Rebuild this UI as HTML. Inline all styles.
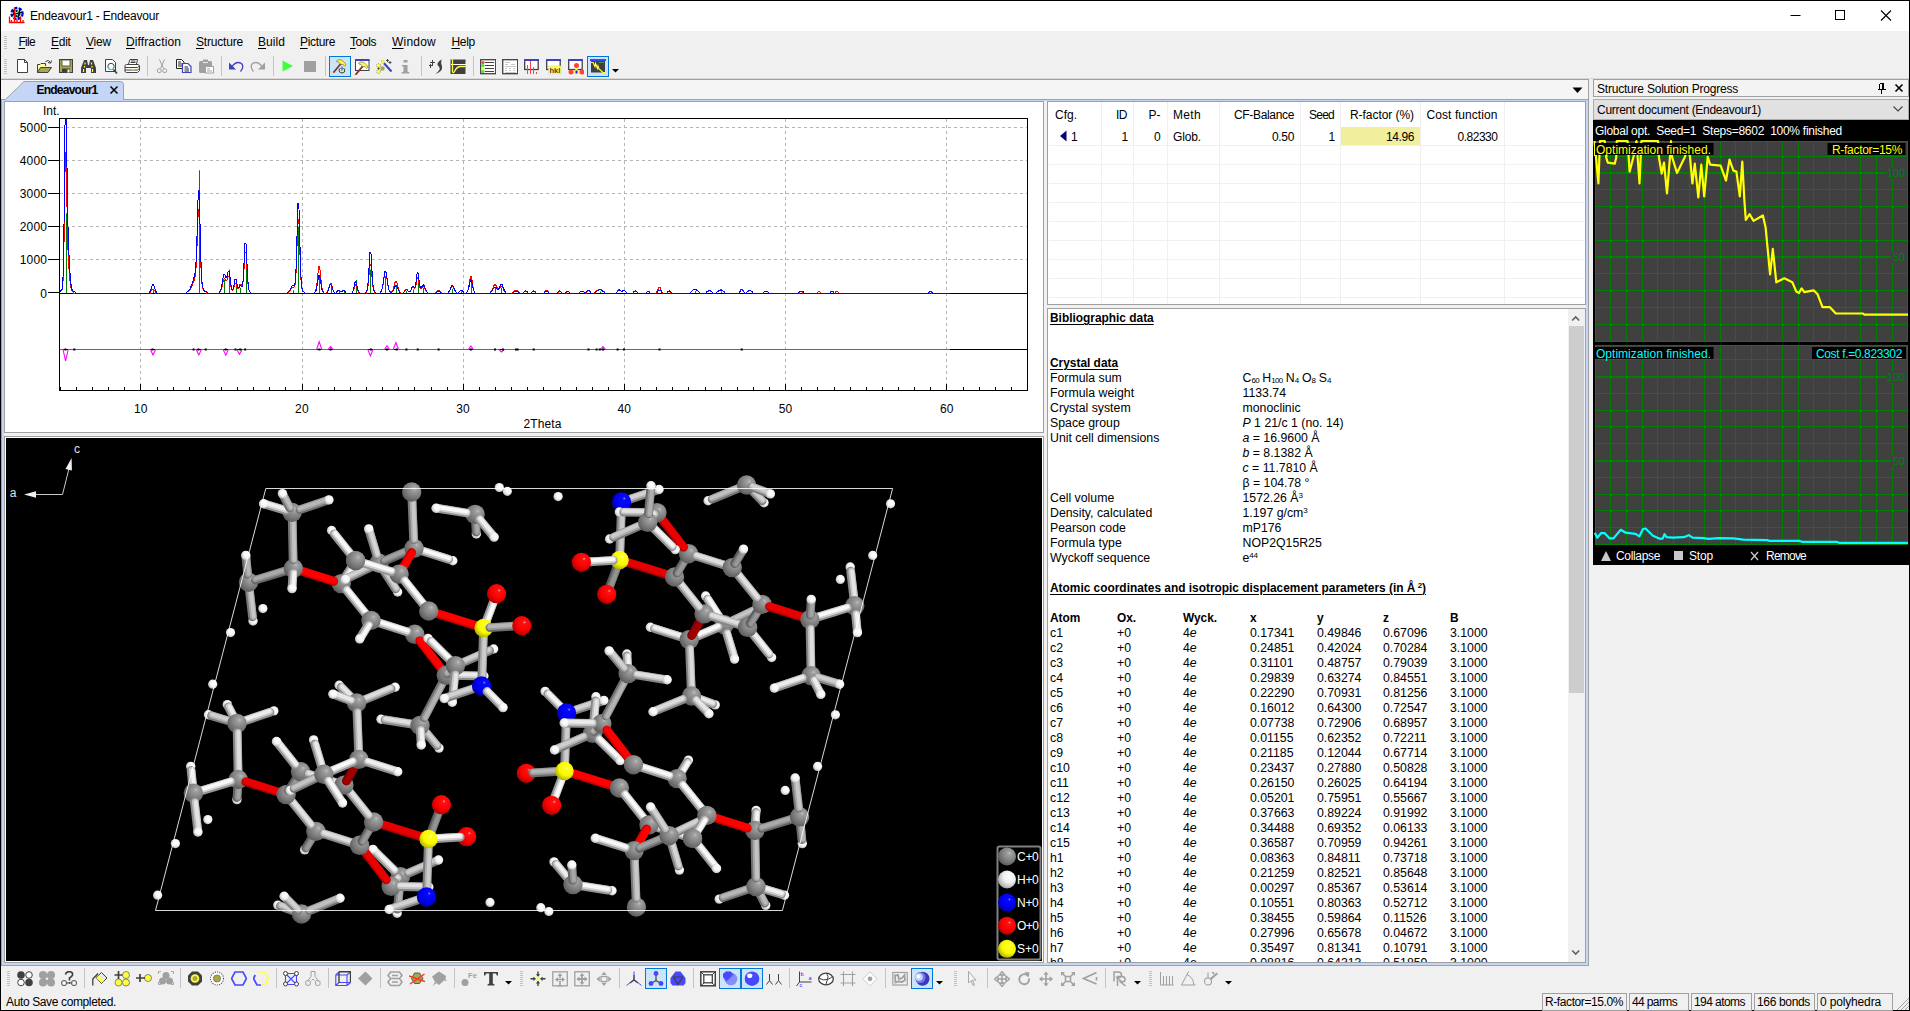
<!DOCTYPE html>
<html><head><meta charset="utf-8"><title>Endeavour1 - Endeavour</title>
<style>
html,body{margin:0;padding:0;background:#000;}
body{width:1910px;height:1011px;overflow:hidden;position:relative;font-family:"Liberation Sans",sans-serif;}
#app{position:absolute;left:0;top:0;width:1910px;height:1011px;background:#000;overflow:hidden;}
#bg{position:absolute;left:1px;top:1px;width:1908px;height:1009px;background:#f0f0f0;}
.b{position:absolute;display:block;}
.t{position:absolute;white-space:nowrap;font-family:"Liberation Sans",sans-serif;}
u{text-decoration:underline;text-underline-offset:1.5px;}
</style></head><body><div id="app"><div id="bg"></div>
<div class="b" style="left:1px;top:1px;width:1908px;height:30px;background:#fff;"></div>
<svg class="b" style="left:8px;top:6px" width="18" height="18" viewBox="0 0 18 18">
<circle cx="9" cy="7.5" r="6.2" fill="#9fe8d8"/>
<circle cx="9" cy="7.5" r="5.6" fill="none" stroke="#0000ee" stroke-width="2.2" stroke-dasharray="3 1.6"/>
<circle cx="9" cy="7.5" r="2.6" fill="none" stroke="#000" stroke-width="1.6" stroke-dasharray="2 1.5"/>
<path d="M5 4 L7 11 M12 3 L10 12 M4 9 L14 6" stroke="#000" stroke-width="1.2" fill="none"/>
<path d="M1.5 10.5V16.5H16.5 M6.5 2.5V16 M3.5 14V16 M9 13V16 M12.5 10.5V16 M15 14V16" stroke="#f00" stroke-width="1.3" fill="none"/>
</svg>
<span class="t" style="left:30.00px;top:7.50px;font-size:12px;line-height:16px;color:#000;letter-spacing:-0.201px;">Endeavour1 - Endeavour</span>
<svg class="b" style="left:1780px;top:1px" width="128" height="30" viewBox="0 0 128 30">
<path d="M10.5 14.5H20.5" stroke="#000" stroke-width="1"/>
<rect x="55.5" y="9.5" width="9" height="9" fill="none" stroke="#000" stroke-width="1"/>
<path d="M101 9.5 L111 19.5 M111 9.5 L101 19.5" stroke="#000" stroke-width="1.1"/>
</svg>
<span class="t" style="left:18.40px;top:34.00px;font-size:12px;line-height:16px;color:#000;letter-spacing:-0.684px;"><u>F</u>ile</span>
<span class="t" style="left:51.00px;top:34.00px;font-size:12px;line-height:16px;color:#000;letter-spacing:-0.245px;"><u>E</u>dit</span>
<span class="t" style="left:86.00px;top:34.00px;font-size:12px;line-height:16px;color:#000;letter-spacing:-0.199px;"><u>V</u>iew</span>
<span class="t" style="left:126.00px;top:34.00px;font-size:12px;line-height:16px;color:#000;letter-spacing:0.109px;"><u>D</u>iffraction</span>
<span class="t" style="left:196.00px;top:34.00px;font-size:12px;line-height:16px;color:#000;letter-spacing:-0.187px;"><u>S</u>tructure</span>
<span class="t" style="left:258.00px;top:34.00px;font-size:12px;line-height:16px;color:#000;letter-spacing:0.063px;"><u>B</u>uild</span>
<span class="t" style="left:300.00px;top:34.00px;font-size:12px;line-height:16px;color:#000;letter-spacing:-0.336px;"><u>P</u>icture</span>
<span class="t" style="left:350.00px;top:34.00px;font-size:12px;line-height:16px;color:#000;letter-spacing:-0.403px;"><u>T</u>ools</span>
<span class="t" style="left:392.00px;top:34.00px;font-size:12px;line-height:16px;color:#000;letter-spacing:0.220px;"><u>W</u>indow</span>
<span class="t" style="left:451.40px;top:34.00px;font-size:12px;line-height:16px;color:#000;letter-spacing:-0.270px;"><u>H</u>elp</span>
<div class="b" style="left:4px;top:36px;width:3px;height:1px;background:#c0c0c0;"></div><div class="b" style="left:4px;top:38px;width:3px;height:1px;background:#c0c0c0;"></div><div class="b" style="left:4px;top:40px;width:3px;height:1px;background:#c0c0c0;"></div><div class="b" style="left:4px;top:42px;width:3px;height:1px;background:#c0c0c0;"></div><div class="b" style="left:4px;top:44px;width:3px;height:1px;background:#c0c0c0;"></div><div class="b" style="left:4px;top:46px;width:3px;height:1px;background:#c0c0c0;"></div><div class="b" style="left:4px;top:48px;width:3px;height:1px;background:#c0c0c0;"></div>
<div class="b" style="left:4px;top:59px;width:3px;height:1px;background:#c0c0c0;"></div><div class="b" style="left:4px;top:61px;width:3px;height:1px;background:#c0c0c0;"></div><div class="b" style="left:4px;top:63px;width:3px;height:1px;background:#c0c0c0;"></div><div class="b" style="left:4px;top:65px;width:3px;height:1px;background:#c0c0c0;"></div><div class="b" style="left:4px;top:67px;width:3px;height:1px;background:#c0c0c0;"></div><div class="b" style="left:4px;top:69px;width:3px;height:1px;background:#c0c0c0;"></div><div class="b" style="left:4px;top:71px;width:3px;height:1px;background:#c0c0c0;"></div><div class="b" style="left:4px;top:73px;width:3px;height:1px;background:#c0c0c0;"></div>
<div class="b" style="left:1px;top:78px;width:1908px;height:1px;background:#d8d8d8;"></div>
<div class="b" style="left:1px;top:79px;width:1588px;height:21px;background:#f5f5f5;border-top:1px solid #a0a0a0;border-right:1px solid #a0a0a0;box-sizing:border-box;"></div>
<div class="b" style="left:1px;top:99px;width:1588px;height:867px;background:#c4d5f5;border:1px solid #a0a0a0;box-sizing:border-box;"></div>
<div class="b" style="left:4px;top:101px;width:1582px;height:862px;background:#f0f0f0;"></div>
<div class="b" style="left:4px;top:101px;width:1040px;height:332px;background:#fff;border:1px solid #a0a0a0;box-sizing:border-box;"></div>
<div class="b" style="left:4px;top:436px;width:1040px;height:527px;background:#000;border:1px solid #a0a0a0;box-sizing:border-box;"></div>
<div class="b" style="left:5px;top:437px;width:1038px;height:525px;border:1px solid #fff;box-sizing:border-box;"></div>
<div class="b" style="left:1047px;top:101px;width:539px;height:204px;background:#fff;border:1px solid #a0a0a0;box-sizing:border-box;"></div>
<div class="b" style="left:1047px;top:308px;width:539px;height:655px;background:#fff;border:1px solid #a0a0a0;box-sizing:border-box;"></div>
<svg class="b" style="left:0px;top:80px" width="140" height="21" viewBox="0 0 140 21">
<path d="M5.5 20 L24 1.5 H120.5 Q123.5 1.5 123.5 4.5 V20 Z" fill="#c4d5f5"/>
<path d="M5.5 19.5 L24 1.5 H120.5 Q123.5 1.5 123.5 4.5 V19.5" fill="none" stroke="#a0a0a0" stroke-width="1"/>
<path d="M110.5 6.5 L117.5 13.5 M117.5 6.5 L110.5 13.5" stroke="#000" stroke-width="1.5"/>
</svg>
<span class="t" style="left:36.50px;top:82.00px;font-size:12px;line-height:16px;color:#000;letter-spacing:-0.769px;font-weight:bold;">Endeavour1</span>
<svg class="b" style="left:1572px;top:87px" width="11" height="7"><path d="M0.5 0.5 H10.5 L5.5 6 Z" fill="#000"/></svg>
<svg class="b" style="left:5px;top:102px" width="1038" height="330" viewBox="5 102 1038 330">
<path d="M140.5 119V390 M302.5 119V390 M463.5 119V390 M624.5 119V390 M785.5 119V390 M946.5 119V390 M60 259.5H1027 M60 226.5H1027 M60 193.5H1027 M60 160.5H1027 M60 127.5H1027" stroke="#b4b4b4" stroke-width="1" stroke-dasharray="3 3" fill="none" shape-rendering="crispEdges"/>
<path d="M60 293.5H1027 M60 349.5H1027" stroke="#000" stroke-width="1" fill="none" shape-rendering="crispEdges"/>
<path d="M60 349.5 L63.0 349.5 L65.6 361.0 L68.2 349.5 L150.4 349.5 L153.0 355.0 L155.6 349.5 L196.2 349.5 L198.8 355.0 L201.4 349.5 L223.2 349.5 L225.8 355.2 L228.4 349.5 L236.9 349.5 L239.5 354.3 L242.1 349.5 L316.6 349.5 L319.2 341.8 L321.8 349.5 L328.0 349.5 L330.6 346.5 L333.2 349.5 L367.8 349.5 L370.4 355.9 L373.0 349.5 L384.4 349.5 L387.0 345.8 L389.6 349.5 L393.3 349.5 L395.9 342.5 L398.5 349.5 L468.3 349.5 L470.9 346.0 L473.5 349.5 L498.9 349.5 L501.5 352.0 L504.1 349.5 L600.4 349.5 L603.0 346.5 L605.6 349.5 L950 349.5" stroke="#ff00ff" stroke-width="1.1" fill="none"/>
<path d="M64.4 349.5h2 M73.3 349.5h2 M151.5 349.5h2 M192.6 349.5h2 M197.4 349.5h2 M204.7 349.5h2 M224.8 349.5h2 M234.5 349.5h2 M239.3 349.5h2 M244.2 349.5h2 M318.3 349.5h2 M329.6 349.5h2 M369.9 349.5h2 M386.0 349.5h2 M395.7 349.5h2 M405.4 349.5h2 M416.7 349.5h2 M437.6 349.5h2 M469.9 349.5h2 M494.0 349.5h2 M502.1 349.5h2 M515.0 349.5h2 M516.6 349.5h2 M532.7 349.5h2 M587.5 349.5h2 M595.6 349.5h2 M598.8 349.5h2 M602.0 349.5h2 M616.6 349.5h2 M623.0 349.5h2 M658.5 349.5h2 M740.7 349.5h2" stroke="#000" stroke-width="2" fill="none"/>
<path d="M66.5 293V213.4 M153.5 293V290.2 M199.5 293V170.3 M224.5 293V279.6 M229.5 293V269.6 M236.5 293V282.9 M240.5 293V287.8 M246.5 293V256.4 M293.5 293V290.2 M298.5 293V226.6 M319.5 293V277.9 M331.5 293V286.2 M339.5 293V291.5 M344.5 293V291.5 M356.5 293V279.9 M370.5 293V269.6 M385.5 293V276.2 M396.5 293V286.8 M406.5 293V291.1 M413.5 293V289.5 M418.5 293V279.6 M423.5 293V287.8 M452.5 293V288.8 M461.5 293V291.5 M471.5 293V282.9 M495.5 293V287.8 M501.5 293V287.8 M600.5 293V291.5 M695.5 293V291.1 M721.5 293V291.5" stroke="#008000" stroke-width="1" fill="none"/>
<path d="M60.0 291.8 L61.0 291.3 L62.0 290.0 L63.0 281.6 L64.0 243.8 L65.0 172.4 L66.0 152.5 L67.0 207.0 L68.0 250.3 L69.0 269.4 L70.0 280.8 L71.0 287.7 L72.0 290.7 L73.0 291.8 L74.0 293.5 L75.0 293.5 L76.0 293.5 L77.0 293.5 L78.0 293.5 L79.0 293.5 L80.0 293.5 L81.0 293.5 L82.0 293.5 L83.0 293.5 L84.0 293.5 L85.0 293.5 L86.0 293.5 L87.0 293.5 L88.0 293.5 L89.0 293.5 L90.0 293.5 L91.0 293.5 L92.0 293.5 L93.0 293.5 L94.0 293.5 L95.0 293.5 L96.0 293.5 L97.0 293.5 L98.0 293.5 L99.0 293.5 L100.0 293.5 L101.0 293.5 L102.0 293.5 L103.0 293.5 L104.0 293.5 L105.0 293.5 L106.0 293.5 L107.0 293.5 L108.0 293.5 L109.0 293.5 L110.0 293.5 L111.0 293.5 L112.0 293.5 L113.0 293.5 L114.0 293.5 L115.0 293.5 L116.0 293.5 L117.0 293.5 L118.0 293.5 L119.0 293.5 L120.0 293.5 L121.0 293.5 L122.0 293.5 L123.0 293.5 L124.0 293.5 L125.0 293.5 L126.0 293.5 L127.0 293.5 L128.0 293.5 L129.0 293.5 L130.0 293.5 L131.0 293.5 L132.0 293.5 L133.0 293.5 L134.0 293.5 L135.0 293.5 L136.0 293.5 L137.0 293.5 L138.0 293.5 L139.0 293.5 L140.0 293.5 L141.0 293.5 L142.0 293.5 L143.0 293.5 L144.0 293.5 L145.0 293.5 L146.0 293.5 L147.0 293.5 L148.0 293.5 L149.0 293.5 L150.0 293.5 L151.0 291.1 L152.0 289.6 L153.0 288.8 L154.0 289.7 L155.0 291.2 L156.0 293.5 L157.0 293.5 L158.0 293.5 L159.0 293.5 L160.0 293.5 L161.0 293.5 L162.0 293.5 L163.0 293.5 L164.0 293.5 L165.0 293.5 L166.0 293.5 L167.0 293.5 L168.0 293.5 L169.0 293.5 L170.0 293.5 L171.0 293.5 L172.0 293.5 L173.0 293.5 L174.0 293.5 L175.0 293.5 L176.0 293.5 L177.0 293.5 L178.0 293.5 L179.0 293.5 L180.0 293.5 L181.0 293.5 L182.0 293.5 L183.0 293.5 L184.0 293.5 L185.0 293.5 L186.0 293.5 L187.0 292.0 L188.0 291.5 L189.0 290.7 L190.0 289.5 L191.0 287.8 L192.0 285.7 L193.0 283.2 L194.0 280.6 L195.0 277.2 L196.0 268.4 L197.0 246.5 L198.0 216.6 L199.0 209.0 L200.0 236.1 L201.0 267.6 L202.0 283.9 L203.0 289.2 L204.0 290.9 L205.0 291.6 L206.0 292.0 L207.0 293.5 L208.0 293.5 L209.0 293.5 L210.0 293.5 L211.0 293.5 L212.0 293.5 L213.0 293.5 L214.0 293.5 L215.0 293.5 L216.0 293.5 L217.0 293.5 L218.0 293.5 L219.0 293.5 L220.0 291.8 L221.0 290.1 L222.0 286.6 L223.0 281.9 L224.0 278.6 L225.0 279.2 L226.0 281.3 L227.0 280.3 L228.0 276.6 L229.0 275.8 L230.0 280.8 L231.0 286.9 L232.0 290.2 L233.0 290.0 L234.0 286.9 L235.0 283.1 L236.0 283.0 L237.0 286.5 L238.0 288.4 L239.0 286.8 L240.0 284.1 L241.0 284.5 L242.0 286.3 L243.0 282.7 L244.0 268.8 L245.0 252.5 L246.0 252.5 L247.0 269.1 L248.0 284.0 L249.0 290.4 L250.0 292.0 L251.0 293.5 L252.0 293.5 L253.0 293.5 L254.0 293.5 L255.0 293.5 L256.0 293.5 L257.0 293.5 L258.0 293.5 L259.0 293.5 L260.0 293.5 L261.0 293.5 L262.0 293.5 L263.0 293.5 L264.0 293.5 L265.0 293.5 L266.0 293.5 L267.0 293.5 L268.0 293.5 L269.0 293.5 L270.0 293.5 L271.0 293.5 L272.0 293.5 L273.0 293.5 L274.0 293.5 L275.0 293.5 L276.0 293.5 L277.0 293.5 L278.0 293.5 L279.0 293.5 L280.0 293.5 L281.0 293.5 L282.0 293.5 L283.0 293.5 L284.0 293.5 L285.0 293.5 L286.0 293.5 L287.0 293.5 L288.0 293.5 L289.0 291.5 L290.0 290.4 L291.0 288.9 L292.0 287.6 L293.0 287.1 L294.0 287.2 L295.0 285.2 L296.0 273.6 L297.0 246.4 L298.0 219.3 L299.0 224.3 L300.0 255.0 L301.0 279.5 L302.0 289.2 L303.0 291.5 L304.0 292.0 L305.0 293.5 L306.0 293.5 L307.0 293.5 L308.0 293.5 L309.0 293.5 L310.0 293.5 L311.0 293.5 L312.0 293.5 L313.0 293.5 L314.0 293.5 L315.0 291.7 L316.0 289.4 L317.0 283.2 L318.0 273.3 L319.0 266.5 L320.0 270.1 L321.0 280.1 L322.0 287.9 L323.0 291.3 L324.0 293.5 L325.0 293.5 L326.0 293.5 L327.0 291.9 L328.0 290.4 L329.0 287.1 L330.0 283.6 L331.0 283.1 L332.0 286.3 L333.0 289.8 L334.0 291.8 L335.0 293.5 L336.0 293.5 L337.0 291.7 L338.0 290.9 L339.0 290.8 L340.0 291.4 L341.0 291.9 L342.0 291.5 L343.0 290.9 L344.0 290.9 L345.0 291.6 L346.0 293.5 L347.0 293.5 L348.0 293.5 L349.0 293.5 L350.0 293.5 L351.0 293.5 L352.0 293.5 L353.0 291.3 L354.0 288.6 L355.0 285.3 L356.0 284.8 L357.0 287.9 L358.0 290.9 L359.0 293.5 L360.0 293.5 L361.0 293.5 L362.0 293.5 L363.0 293.5 L364.0 293.5 L365.0 293.5 L366.0 293.5 L367.0 291.0 L368.0 286.2 L369.0 275.6 L370.0 264.5 L371.0 265.5 L372.0 277.3 L373.0 287.2 L374.0 291.2 L375.0 293.5 L376.0 293.5 L377.0 293.5 L378.0 293.5 L379.0 293.5 L380.0 293.5 L381.0 291.6 L382.0 289.5 L383.0 284.8 L384.0 277.8 L385.0 272.2 L386.0 272.7 L387.0 278.9 L388.0 285.7 L389.0 289.9 L390.0 291.7 L391.0 292.0 L392.0 291.5 L393.0 289.7 L394.0 286.2 L395.0 282.4 L396.0 280.8 L397.0 283.1 L398.0 287.1 L399.0 290.2 L400.0 291.8 L401.0 293.5 L402.0 293.5 L403.0 293.5 L404.0 291.8 L405.0 290.5 L406.0 289.1 L407.0 289.4 L408.0 290.8 L409.0 291.8 L410.0 291.7 L411.0 290.0 L412.0 287.4 L413.0 286.2 L414.0 287.7 L415.0 288.3 L416.0 284.6 L417.0 278.5 L418.0 277.2 L419.0 282.5 L420.0 287.8 L421.0 289.0 L422.0 287.5 L423.0 286.1 L424.0 286.6 L425.0 288.7 L426.0 290.7 L427.0 292.0 L428.0 293.5 L429.0 293.5 L430.0 293.5 L431.0 293.5 L432.0 293.5 L433.0 293.5 L434.0 293.5 L435.0 293.5 L436.0 292.0 L437.0 291.3 L438.0 290.6 L439.0 290.5 L440.0 291.1 L441.0 291.9 L442.0 293.5 L443.0 293.5 L444.0 293.5 L445.0 293.5 L446.0 293.5 L447.0 293.5 L448.0 293.5 L449.0 291.7 L450.0 290.1 L451.0 287.9 L452.0 286.3 L453.0 286.7 L454.0 288.7 L455.0 290.8 L456.0 292.0 L457.0 293.5 L458.0 293.5 L459.0 292.0 L460.0 291.1 L461.0 290.4 L462.0 290.8 L463.0 291.7 L464.0 293.5 L465.0 293.5 L466.0 293.5 L467.0 291.9 L468.0 289.8 L469.0 285.0 L470.0 278.8 L471.0 276.3 L472.0 280.4 L473.0 286.7 L474.0 290.6 L475.0 293.5 L476.0 293.5 L477.0 293.5 L478.0 293.5 L479.0 293.5 L480.0 293.5 L481.0 293.5 L482.0 293.5 L483.0 293.5 L484.0 293.5 L485.0 293.5 L486.0 293.5 L487.0 293.5 L488.0 293.5 L489.0 293.5 L490.0 293.5 L491.0 291.4 L492.0 289.9 L493.0 287.7 L494.0 285.5 L495.0 284.4 L496.0 285.3 L497.0 287.3 L498.0 288.9 L499.0 289.1 L500.0 287.7 L501.0 286.2 L502.0 286.3 L503.0 288.3 L504.0 290.4 L505.0 291.8 L506.0 293.5 L507.0 293.5 L508.0 293.5 L509.0 293.5 L510.0 293.5 L511.0 293.5 L512.0 293.5 L513.0 291.9 L514.0 291.3 L515.0 290.7 L516.0 290.4 L517.0 290.7 L518.0 291.3 L519.0 292.0 L520.0 293.5 L521.0 293.5 L522.0 293.5 L523.0 293.5 L524.0 292.0 L525.0 291.3 L526.0 291.2 L527.0 291.7 L528.0 293.5 L529.0 293.5 L530.0 293.5 L531.0 293.5 L532.0 291.9 L533.0 291.1 L534.0 290.8 L535.0 291.5 L536.0 293.5 L537.0 293.5 L538.0 293.5 L539.0 293.5 L540.0 293.5 L541.0 293.5 L542.0 293.5 L543.0 293.5 L544.0 293.5 L545.0 291.6 L546.0 290.7 L547.0 290.6 L548.0 291.4 L549.0 293.5 L550.0 293.5 L551.0 293.5 L552.0 293.5 L553.0 293.5 L554.0 293.5 L555.0 293.5 L556.0 293.5 L557.0 293.5 L558.0 293.5 L559.0 291.6 L560.0 291.5 L561.0 292.0 L562.0 293.5 L563.0 293.5 L564.0 293.5 L565.0 293.5 L566.0 293.5 L567.0 291.6 L568.0 291.5 L569.0 292.0 L570.0 293.5 L571.0 293.5 L572.0 293.5 L573.0 293.5 L574.0 293.5 L575.0 293.5 L576.0 293.5 L577.0 293.5 L578.0 293.5 L579.0 293.5 L580.0 292.0 L581.0 291.6 L582.0 291.4 L583.0 291.6 L584.0 291.9 L585.0 293.5 L586.0 293.5 L587.0 291.6 L588.0 290.9 L589.0 290.9 L590.0 291.6 L591.0 293.5 L592.0 293.5 L593.0 293.5 L594.0 293.5 L595.0 292.0 L596.0 291.4 L597.0 290.7 L598.0 289.9 L599.0 289.3 L600.0 289.2 L601.0 289.5 L602.0 290.2 L603.0 290.9 L604.0 291.6 L605.0 293.5 L606.0 293.5 L607.0 293.5 L608.0 293.5 L609.0 293.5 L610.0 293.5 L611.0 293.5 L612.0 293.5 L613.0 293.5 L614.0 293.5 L615.0 293.5 L616.0 293.5 L617.0 291.7 L618.0 290.2 L619.0 289.1 L620.0 289.7 L621.0 291.0 L622.0 291.5 L623.0 290.9 L624.0 290.4 L625.0 291.0 L626.0 292.0 L627.0 293.5 L628.0 293.5 L629.0 293.5 L630.0 293.5 L631.0 293.5 L632.0 293.5 L633.0 293.5 L634.0 291.7 L635.0 291.2 L636.0 291.3 L637.0 292.0 L638.0 293.5 L639.0 293.5 L640.0 293.5 L641.0 293.5 L642.0 293.5 L643.0 293.5 L644.0 293.5 L645.0 293.5 L646.0 293.5 L647.0 291.7 L648.0 291.1 L649.0 291.4 L650.0 293.5 L651.0 293.5 L652.0 293.5 L653.0 293.5 L654.0 293.5 L655.0 293.5 L656.0 293.5 L657.0 291.6 L658.0 289.6 L659.0 287.5 L660.0 287.6 L661.0 289.8 L662.0 291.7 L663.0 293.5 L664.0 293.5 L665.0 293.5 L666.0 293.5 L667.0 293.5 L668.0 291.6 L669.0 291.1 L670.0 291.4 L671.0 293.5 L672.0 293.5 L673.0 293.5 L674.0 293.5 L675.0 293.5 L676.0 293.5 L677.0 293.5 L678.0 293.5 L679.0 293.5 L680.0 293.5 L681.0 293.5 L682.0 293.5 L683.0 293.5 L684.0 293.5 L685.0 293.5 L686.0 293.5 L687.0 293.5 L688.0 293.5 L689.0 293.5 L690.0 293.5 L691.0 291.8 L692.0 291.1 L693.0 290.2 L694.0 289.4 L695.0 289.1 L696.0 289.5 L697.0 290.3 L698.0 291.2 L699.0 291.9 L700.0 293.5 L701.0 293.5 L702.0 293.5 L703.0 293.5 L704.0 293.5 L705.0 293.5 L706.0 293.5 L707.0 291.8 L708.0 291.2 L709.0 290.8 L710.0 290.9 L711.0 291.3 L712.0 291.8 L713.0 293.5 L714.0 293.5 L715.0 293.5 L716.0 293.5 L717.0 291.9 L718.0 291.2 L719.0 290.5 L720.0 289.9 L721.0 289.8 L722.0 290.2 L723.0 290.9 L724.0 291.6 L725.0 293.5 L726.0 293.5 L727.0 293.5 L728.0 293.5 L729.0 293.5 L730.0 293.5 L731.0 293.5 L732.0 293.5 L733.0 293.5 L734.0 293.5 L735.0 293.5 L736.0 293.5 L737.0 293.5 L738.0 293.5 L739.0 293.5 L740.0 291.1 L741.0 289.6 L742.0 289.2 L743.0 290.5 L744.0 291.8 L745.0 293.5 L746.0 293.5 L747.0 291.9 L748.0 291.4 L749.0 290.9 L750.0 290.8 L751.0 291.1 L752.0 291.7 L753.0 293.5 L754.0 293.5 L755.0 293.5 L756.0 293.5 L757.0 293.5 L758.0 293.5 L759.0 293.5 L760.0 293.5 L761.0 293.5 L762.0 293.5 L763.0 293.5 L764.0 291.7 L765.0 291.3 L766.0 291.1 L767.0 291.4 L768.0 291.8 L769.0 293.5 L770.0 293.5 L771.0 293.5 L772.0 293.5 L773.0 293.5 L774.0 293.5 L775.0 293.5 L776.0 293.5 L777.0 293.5 L778.0 293.5 L779.0 293.5 L780.0 293.5 L781.0 293.5 L782.0 293.5 L783.0 293.5 L784.0 293.5 L785.0 293.5 L786.0 293.5 L787.0 293.5 L788.0 293.5 L789.0 293.5 L790.0 293.5 L791.0 293.5 L792.0 293.5 L793.0 293.5 L794.0 293.5 L795.0 293.5 L796.0 293.5 L797.0 293.5 L798.0 293.5 L799.0 293.5 L800.0 292.0 L801.0 291.8 L802.0 291.9 L803.0 293.5 L804.0 293.5 L805.0 293.5 L806.0 293.5 L807.0 293.5 L808.0 293.5 L809.0 293.5 L810.0 293.5 L811.0 293.5 L812.0 293.5 L813.0 293.5 L814.0 293.5 L815.0 293.5 L816.0 293.5 L817.0 293.5 L818.0 291.8 L819.0 291.1 L820.0 291.7 L821.0 293.5 L822.0 293.5 L823.0 293.5 L824.0 293.5 L825.0 293.5 L826.0 293.5 L827.0 293.5 L828.0 293.5 L829.0 293.5 L830.0 293.5 L831.0 291.5 L832.0 291.1 L833.0 291.6 L834.0 293.5 L835.0 293.5 L836.0 291.5 L837.0 291.2 L838.0 292.0 L839.0 293.5 L840.0 293.5 L841.0 293.5 L842.0 293.5 L843.0 293.5 L844.0 293.5 L845.0 293.5 L846.0 293.5 L847.0 293.5 L848.0 293.5 L849.0 293.5 L850.0 293.5 L851.0 293.5 L852.0 293.5 L853.0 293.5 L854.0 293.5 L855.0 293.5 L856.0 293.5 L857.0 293.5 L858.0 293.5 L859.0 293.5 L860.0 293.5 L861.0 293.5 L862.0 293.5 L863.0 293.5 L864.0 293.5 L865.0 293.5 L866.0 293.5 L867.0 293.5 L868.0 293.5 L869.0 293.5 L870.0 293.5 L871.0 293.5 L872.0 293.5 L873.0 293.5 L874.0 293.5 L875.0 293.5 L876.0 293.5 L877.0 293.5 L878.0 293.5 L879.0 293.5 L880.0 293.5 L881.0 293.5 L882.0 293.5 L883.0 293.5 L884.0 293.5 L885.0 293.5 L886.0 293.5 L887.0 293.5 L888.0 293.5 L889.0 293.5 L890.0 293.5 L891.0 293.5 L892.0 293.5 L893.0 293.5 L894.0 293.5 L895.0 293.5 L896.0 293.5 L897.0 293.5 L898.0 293.5 L899.0 293.5 L900.0 293.5 L901.0 293.5 L902.0 293.5 L903.0 293.5 L904.0 293.5 L905.0 293.5 L906.0 293.5 L907.0 293.5 L908.0 293.5 L909.0 293.5 L910.0 293.5 L911.0 293.5 L912.0 293.5 L913.0 293.5 L914.0 293.5 L915.0 293.5 L916.0 293.5 L917.0 293.5 L918.0 293.5 L919.0 293.5 L920.0 293.5 L921.0 293.5 L922.0 293.5 L923.0 293.5 L924.0 293.5 L925.0 293.5 L926.0 293.5 L927.0 293.5 L928.0 293.5 L929.0 293.5 L930.0 291.8 L931.0 291.9 L932.0 293.5 L933.0 293.5 L934.0 293.5 L935.0 293.5 L936.0 293.5 L937.0 293.5 L938.0 293.5 L939.0 293.5 L940.0 293.5 L941.0 293.5 L942.0 293.5 L943.0 293.5 L944.0 293.5 L945.0 293.5 L946.0 293.5 L947.0 293.5 L948.0 293.5 L949.0 293.5 L950.0 293.5" stroke="#ff0000" stroke-width="1" fill="none" stroke-linejoin="round" shape-rendering="crispEdges"/>
<path d="M60.0 291.3 L61.0 290.7 L62.0 288.8 L63.0 277.1 L64.0 224.7 L65.0 125.2 L66.0 118.5 L67.0 167.1 L68.0 226.1 L69.0 254.6 L70.0 273.2 L71.0 284.5 L72.0 289.5 L73.0 291.2 L74.0 291.7 L75.0 292.0 L76.0 293.5 L77.0 293.5 L78.0 293.5 L79.0 293.5 L80.0 293.5 L81.0 293.5 L82.0 293.5 L83.0 293.5 L84.0 293.5 L85.0 293.5 L86.0 293.5 L87.0 293.5 L88.0 293.5 L89.0 293.5 L90.0 293.5 L91.0 293.5 L92.0 293.5 L93.0 293.5 L94.0 293.5 L95.0 293.5 L96.0 293.5 L97.0 293.5 L98.0 293.5 L99.0 293.5 L100.0 293.5 L101.0 293.5 L102.0 293.5 L103.0 293.5 L104.0 293.5 L105.0 293.5 L106.0 293.5 L107.0 293.5 L108.0 293.5 L109.0 293.5 L110.0 293.5 L111.0 293.5 L112.0 293.5 L113.0 293.5 L114.0 293.5 L115.0 293.5 L116.0 293.5 L117.0 293.5 L118.0 293.5 L119.0 293.5 L120.0 293.5 L121.0 293.5 L122.0 293.5 L123.0 293.5 L124.0 293.5 L125.0 293.5 L126.0 293.5 L127.0 293.5 L128.0 293.5 L129.0 293.5 L130.0 293.5 L131.0 293.5 L132.0 293.5 L133.0 293.5 L134.0 293.5 L135.0 293.5 L136.0 293.5 L137.0 293.5 L138.0 293.5 L139.0 293.5 L140.0 293.5 L141.0 293.5 L142.0 293.5 L143.0 293.5 L144.0 293.5 L145.0 293.5 L146.0 293.5 L147.0 293.5 L148.0 293.5 L149.0 293.5 L150.0 291.5 L151.0 289.2 L152.0 286.0 L153.0 284.3 L154.0 286.1 L155.0 289.3 L156.0 291.5 L157.0 293.5 L158.0 293.5 L159.0 293.5 L160.0 293.5 L161.0 293.5 L162.0 293.5 L163.0 293.5 L164.0 293.5 L165.0 293.5 L166.0 293.5 L167.0 293.5 L168.0 293.5 L169.0 293.5 L170.0 293.5 L171.0 293.5 L172.0 293.5 L173.0 293.5 L174.0 293.5 L175.0 293.5 L176.0 293.5 L177.0 293.5 L178.0 293.5 L179.0 293.5 L180.0 293.5 L181.0 293.5 L182.0 293.5 L183.0 293.5 L184.0 293.5 L185.0 293.5 L186.0 293.5 L187.0 291.8 L188.0 291.2 L189.0 290.2 L190.0 288.7 L191.0 286.6 L192.0 283.9 L193.0 280.8 L194.0 277.6 L195.0 273.4 L196.0 262.6 L197.0 236.0 L198.0 199.7 L199.0 190.4 L200.0 223.5 L201.0 261.9 L202.0 281.9 L203.0 288.4 L204.0 290.4 L205.0 291.3 L206.0 291.8 L207.0 292.0 L208.0 293.5 L209.0 293.5 L210.0 293.5 L211.0 293.5 L212.0 293.5 L213.0 293.5 L214.0 293.5 L215.0 293.5 L216.0 293.5 L217.0 293.5 L218.0 293.5 L219.0 293.5 L220.0 291.4 L221.0 289.2 L222.0 284.5 L223.0 278.2 L224.0 273.9 L225.0 274.7 L226.0 277.6 L227.0 276.6 L228.0 272.0 L229.0 271.1 L230.0 277.4 L231.0 285.2 L232.0 289.4 L233.0 289.0 L234.0 284.7 L235.0 279.4 L236.0 279.3 L237.0 284.3 L238.0 287.9 L239.0 287.5 L240.0 285.5 L241.0 285.8 L242.0 286.6 L243.0 281.0 L244.0 263.6 L245.0 243.5 L246.0 243.5 L247.0 263.8 L248.0 282.1 L249.0 289.9 L250.0 291.8 L251.0 293.5 L252.0 293.5 L253.0 293.5 L254.0 293.5 L255.0 293.5 L256.0 293.5 L257.0 293.5 L258.0 293.5 L259.0 293.5 L260.0 293.5 L261.0 293.5 L262.0 293.5 L263.0 293.5 L264.0 293.5 L265.0 293.5 L266.0 293.5 L267.0 293.5 L268.0 293.5 L269.0 293.5 L270.0 293.5 L271.0 293.5 L272.0 293.5 L273.0 293.5 L274.0 293.5 L275.0 293.5 L276.0 293.5 L277.0 293.5 L278.0 293.5 L279.0 293.5 L280.0 293.5 L281.0 293.5 L282.0 293.5 L283.0 293.5 L284.0 293.5 L285.0 293.5 L286.0 293.5 L287.0 293.5 L288.0 292.0 L289.0 291.1 L290.0 289.7 L291.0 287.7 L292.0 285.9 L293.0 285.3 L294.0 285.5 L295.0 283.2 L296.0 269.3 L297.0 236.3 L298.0 203.3 L299.0 209.4 L300.0 246.8 L301.0 276.7 L302.0 288.4 L303.0 291.3 L304.0 291.9 L305.0 293.5 L306.0 293.5 L307.0 293.5 L308.0 293.5 L309.0 293.5 L310.0 293.5 L311.0 293.5 L312.0 293.5 L313.0 293.5 L314.0 293.5 L315.0 292.0 L316.0 290.5 L317.0 286.3 L318.0 279.7 L319.0 275.0 L320.0 277.5 L321.0 284.2 L322.0 289.5 L323.0 291.7 L324.0 293.5 L325.0 293.5 L326.0 293.5 L327.0 293.5 L328.0 290.8 L329.0 288.1 L330.0 285.1 L331.0 284.7 L332.0 287.3 L333.0 290.3 L334.0 291.9 L335.0 293.5 L336.0 293.5 L337.0 291.6 L338.0 290.7 L339.0 290.4 L340.0 291.2 L341.0 291.7 L342.0 291.3 L343.0 290.6 L344.0 290.6 L345.0 291.5 L346.0 293.5 L347.0 293.5 L348.0 293.5 L349.0 293.5 L350.0 293.5 L351.0 293.5 L352.0 293.5 L353.0 290.7 L354.0 286.9 L355.0 282.3 L356.0 281.6 L357.0 285.9 L358.0 290.1 L359.0 292.0 L360.0 293.5 L361.0 293.5 L362.0 293.5 L363.0 293.5 L364.0 293.5 L365.0 293.5 L366.0 291.9 L367.0 290.2 L368.0 283.4 L369.0 268.1 L370.0 252.2 L371.0 253.7 L372.0 270.6 L373.0 284.8 L374.0 290.6 L375.0 292.0 L376.0 293.5 L377.0 293.5 L378.0 293.5 L379.0 293.5 L380.0 293.5 L381.0 291.5 L382.0 289.4 L383.0 284.5 L384.0 277.1 L385.0 271.2 L386.0 271.8 L387.0 278.3 L388.0 285.4 L389.0 289.8 L390.0 291.7 L391.0 293.5 L392.0 291.9 L393.0 290.8 L394.0 288.7 L395.0 286.4 L396.0 285.4 L397.0 286.8 L398.0 289.3 L399.0 291.2 L400.0 293.5 L401.0 293.5 L402.0 293.5 L403.0 293.5 L404.0 292.0 L405.0 290.9 L406.0 289.8 L407.0 289.9 L408.0 291.1 L409.0 291.9 L410.0 291.6 L411.0 289.8 L412.0 287.1 L413.0 285.9 L414.0 287.3 L415.0 287.4 L416.0 282.3 L417.0 274.4 L418.0 272.6 L419.0 279.6 L420.0 286.4 L421.0 288.1 L422.0 286.5 L423.0 284.7 L424.0 285.3 L425.0 287.8 L426.0 290.3 L427.0 291.8 L428.0 293.5 L429.0 293.5 L430.0 293.5 L431.0 293.5 L432.0 293.5 L433.0 293.5 L434.0 293.5 L435.0 293.5 L436.0 293.5 L437.0 291.9 L438.0 291.5 L439.0 291.5 L440.0 291.8 L441.0 293.5 L442.0 293.5 L443.0 293.5 L444.0 293.5 L445.0 293.5 L446.0 293.5 L447.0 293.5 L448.0 293.5 L449.0 291.6 L450.0 289.8 L451.0 287.4 L452.0 285.6 L453.0 286.1 L454.0 288.3 L455.0 290.6 L456.0 291.9 L457.0 293.5 L458.0 293.5 L459.0 291.9 L460.0 290.9 L461.0 290.1 L462.0 290.5 L463.0 291.6 L464.0 293.5 L465.0 293.5 L466.0 293.5 L467.0 292.0 L468.0 290.4 L469.0 286.6 L470.0 281.6 L471.0 279.6 L472.0 282.9 L473.0 287.9 L474.0 291.1 L475.0 293.5 L476.0 293.5 L477.0 293.5 L478.0 293.5 L479.0 293.5 L480.0 293.5 L481.0 293.5 L482.0 293.5 L483.0 293.5 L484.0 293.5 L485.0 293.5 L486.0 293.5 L487.0 293.5 L488.0 293.5 L489.0 293.5 L490.0 293.5 L491.0 291.9 L492.0 290.8 L493.0 289.3 L494.0 287.8 L495.0 287.1 L496.0 287.6 L497.0 288.8 L498.0 289.5 L499.0 288.7 L500.0 286.3 L501.0 284.1 L502.0 284.2 L503.0 286.7 L504.0 289.6 L505.0 291.5 L506.0 293.5 L507.0 293.5 L508.0 293.5 L509.0 293.5 L510.0 293.5 L511.0 293.5 L512.0 293.5 L513.0 293.5 L514.0 291.7 L515.0 291.3 L516.0 291.1 L517.0 291.3 L518.0 291.7 L519.0 293.5 L520.0 293.5 L521.0 293.5 L522.0 293.5 L523.0 293.5 L524.0 291.8 L525.0 291.0 L526.0 290.9 L527.0 291.5 L528.0 293.5 L529.0 293.5 L530.0 293.5 L531.0 293.5 L532.0 292.0 L533.0 291.4 L534.0 291.2 L535.0 291.7 L536.0 293.5 L537.0 293.5 L538.0 293.5 L539.0 293.5 L540.0 293.5 L541.0 293.5 L542.0 293.5 L543.0 293.5 L544.0 293.5 L545.0 292.0 L546.0 291.3 L547.0 291.2 L548.0 291.8 L549.0 293.5 L550.0 293.5 L551.0 293.5 L552.0 293.5 L553.0 293.5 L554.0 293.5 L555.0 293.5 L556.0 293.5 L557.0 293.5 L558.0 291.7 L559.0 290.9 L560.0 290.9 L561.0 291.7 L562.0 293.5 L563.0 293.5 L564.0 293.5 L565.0 293.5 L566.0 291.9 L567.0 291.3 L568.0 291.2 L569.0 291.8 L570.0 293.5 L571.0 293.5 L572.0 293.5 L573.0 293.5 L574.0 293.5 L575.0 293.5 L576.0 293.5 L577.0 293.5 L578.0 293.5 L579.0 293.5 L580.0 292.0 L581.0 291.6 L582.0 291.4 L583.0 291.6 L584.0 291.9 L585.0 293.5 L586.0 292.0 L587.0 291.3 L588.0 290.3 L589.0 290.3 L590.0 291.3 L591.0 293.5 L592.0 293.5 L593.0 293.5 L594.0 293.5 L595.0 293.5 L596.0 291.6 L597.0 291.0 L598.0 290.4 L599.0 289.9 L600.0 289.8 L601.0 290.1 L602.0 290.6 L603.0 291.3 L604.0 291.8 L605.0 293.5 L606.0 293.5 L607.0 293.5 L608.0 293.5 L609.0 293.5 L610.0 293.5 L611.0 293.5 L612.0 293.5 L613.0 293.5 L614.0 293.5 L615.0 293.5 L616.0 293.5 L617.0 291.9 L618.0 290.7 L619.0 289.8 L620.0 290.3 L621.0 291.3 L622.0 291.5 L623.0 290.7 L624.0 290.1 L625.0 290.7 L626.0 291.8 L627.0 293.5 L628.0 293.5 L629.0 293.5 L630.0 293.5 L631.0 293.5 L632.0 293.5 L633.0 293.5 L634.0 291.5 L635.0 290.8 L636.0 291.1 L637.0 291.9 L638.0 293.5 L639.0 293.5 L640.0 293.5 L641.0 293.5 L642.0 293.5 L643.0 293.5 L644.0 293.5 L645.0 293.5 L646.0 293.5 L647.0 291.9 L648.0 291.5 L649.0 291.7 L650.0 293.5 L651.0 293.5 L652.0 293.5 L653.0 293.5 L654.0 293.5 L655.0 293.5 L656.0 293.5 L657.0 293.5 L658.0 291.1 L659.0 290.0 L660.0 290.0 L661.0 291.2 L662.0 293.5 L663.0 293.5 L664.0 293.5 L665.0 293.5 L666.0 293.5 L667.0 293.5 L668.0 291.4 L669.0 290.8 L670.0 291.2 L671.0 292.0 L672.0 293.5 L673.0 293.5 L674.0 293.5 L675.0 293.5 L676.0 293.5 L677.0 293.5 L678.0 293.5 L679.0 293.5 L680.0 293.5 L681.0 293.5 L682.0 293.5 L683.0 293.5 L684.0 293.5 L685.0 293.5 L686.0 293.5 L687.0 293.5 L688.0 293.5 L689.0 293.5 L690.0 293.5 L691.0 291.8 L692.0 291.1 L693.0 290.2 L694.0 289.4 L695.0 289.1 L696.0 289.5 L697.0 290.3 L698.0 291.2 L699.0 291.9 L700.0 293.5 L701.0 293.5 L702.0 293.5 L703.0 293.5 L704.0 293.5 L705.0 293.5 L706.0 293.5 L707.0 291.6 L708.0 291.0 L709.0 290.5 L710.0 290.5 L711.0 291.0 L712.0 291.7 L713.0 293.5 L714.0 293.5 L715.0 293.5 L716.0 293.5 L717.0 292.0 L718.0 291.4 L719.0 290.7 L720.0 290.3 L721.0 290.2 L722.0 290.5 L723.0 291.1 L724.0 291.7 L725.0 293.5 L726.0 293.5 L727.0 293.5 L728.0 293.5 L729.0 293.5 L730.0 293.5 L731.0 293.5 L732.0 293.5 L733.0 293.5 L734.0 293.5 L735.0 293.5 L736.0 293.5 L737.0 293.5 L738.0 293.5 L739.0 293.5 L740.0 291.4 L741.0 290.1 L742.0 289.9 L743.0 290.9 L744.0 292.0 L745.0 293.5 L746.0 293.5 L747.0 291.8 L748.0 291.2 L749.0 290.6 L750.0 290.5 L751.0 290.9 L752.0 291.5 L753.0 293.5 L754.0 293.5 L755.0 293.5 L756.0 293.5 L757.0 293.5 L758.0 293.5 L759.0 293.5 L760.0 293.5 L761.0 293.5 L762.0 293.5 L763.0 293.5 L764.0 291.7 L765.0 291.3 L766.0 291.1 L767.0 291.4 L768.0 291.8 L769.0 293.5 L770.0 293.5 L771.0 293.5 L772.0 293.5 L773.0 293.5 L774.0 293.5 L775.0 293.5 L776.0 293.5 L777.0 293.5 L778.0 293.5 L779.0 293.5 L780.0 293.5 L781.0 293.5 L782.0 293.5 L783.0 293.5 L784.0 293.5 L785.0 293.5 L786.0 293.5 L787.0 293.5 L788.0 293.5 L789.0 293.5 L790.0 293.5 L791.0 293.5 L792.0 293.5 L793.0 293.5 L794.0 293.5 L795.0 293.5 L796.0 293.5 L797.0 293.5 L798.0 293.5 L799.0 291.9 L800.0 291.5 L801.0 291.2 L802.0 291.2 L803.0 291.6 L804.0 293.5 L805.0 293.5 L806.0 293.5 L807.0 293.5 L808.0 293.5 L809.0 293.5 L810.0 293.5 L811.0 293.5 L812.0 293.5 L813.0 293.5 L814.0 293.5 L815.0 293.5 L816.0 293.5 L817.0 293.5 L818.0 293.5 L819.0 293.5 L820.0 293.5 L821.0 293.5 L822.0 293.5 L823.0 293.5 L824.0 293.5 L825.0 293.5 L826.0 293.5 L827.0 293.5 L828.0 293.5 L829.0 293.5 L830.0 293.5 L831.0 291.8 L832.0 291.5 L833.0 291.8 L834.0 293.5 L835.0 293.5 L836.0 293.5 L837.0 293.5 L838.0 293.5 L839.0 293.5 L840.0 293.5 L841.0 293.5 L842.0 293.5 L843.0 293.5 L844.0 293.5 L845.0 293.5 L846.0 293.5 L847.0 293.5 L848.0 293.5 L849.0 293.5 L850.0 293.5 L851.0 293.5 L852.0 293.5 L853.0 293.5 L854.0 293.5 L855.0 293.5 L856.0 293.5 L857.0 293.5 L858.0 293.5 L859.0 293.5 L860.0 293.5 L861.0 293.5 L862.0 293.5 L863.0 293.5 L864.0 293.5 L865.0 293.5 L866.0 293.5 L867.0 293.5 L868.0 293.5 L869.0 293.5 L870.0 293.5 L871.0 293.5 L872.0 293.5 L873.0 293.5 L874.0 293.5 L875.0 293.5 L876.0 293.5 L877.0 293.5 L878.0 293.5 L879.0 293.5 L880.0 293.5 L881.0 293.5 L882.0 293.5 L883.0 293.5 L884.0 293.5 L885.0 293.5 L886.0 293.5 L887.0 293.5 L888.0 293.5 L889.0 293.5 L890.0 293.5 L891.0 293.5 L892.0 293.5 L893.0 293.5 L894.0 293.5 L895.0 293.5 L896.0 293.5 L897.0 293.5 L898.0 293.5 L899.0 293.5 L900.0 293.5 L901.0 293.5 L902.0 293.5 L903.0 293.5 L904.0 293.5 L905.0 293.5 L906.0 293.5 L907.0 293.5 L908.0 293.5 L909.0 293.5 L910.0 293.5 L911.0 293.5 L912.0 293.5 L913.0 293.5 L914.0 293.5 L915.0 293.5 L916.0 293.5 L917.0 293.5 L918.0 293.5 L919.0 293.5 L920.0 293.5 L921.0 293.5 L922.0 293.5 L923.0 293.5 L924.0 293.5 L925.0 293.5 L926.0 293.5 L927.0 293.5 L928.0 293.5 L929.0 291.7 L930.0 291.2 L931.0 291.4 L932.0 292.0 L933.0 293.5 L934.0 293.5 L935.0 293.5 L936.0 293.5 L937.0 293.5 L938.0 293.5 L939.0 293.5 L940.0 293.5 L941.0 293.5 L942.0 293.5 L943.0 293.5 L944.0 293.5 L945.0 293.5 L946.0 293.5 L947.0 293.5 L948.0 293.5 L949.0 293.5 L950.0 293.5" stroke="#0000ff" stroke-width="1" fill="none" stroke-linejoin="round" shape-rendering="crispEdges"/>
<rect x="59.5" y="118.5" width="968" height="272" fill="none" stroke="#000" stroke-width="1" shape-rendering="crispEdges"/>
<path d="M48 292.5H60 M48 259.5H60 M48 226.5H60 M48 193.5H60 M48 160.5H60 M48 127.5H60 M60.5 387V390 M76.5 387V390 M92.5 387V390 M108.5 387V390 M124.5 387V390 M140.5 384V390 M157.5 387V390 M173.5 387V390 M189.5 387V390 M205.5 387V390 M221.5 387V390 M237.5 387V390 M253.5 387V390 M269.5 387V390 M285.5 387V390 M302.5 384V390 M318.5 387V390 M334.5 387V390 M350.5 387V390 M366.5 387V390 M382.5 387V390 M398.5 387V390 M414.5 387V390 M431.5 387V390 M447.5 387V390 M463.5 384V390 M479.5 387V390 M495.5 387V390 M511.5 387V390 M527.5 387V390 M543.5 387V390 M560.5 387V390 M576.5 387V390 M592.5 387V390 M608.5 387V390 M624.5 384V390 M640.5 387V390 M656.5 387V390 M672.5 387V390 M688.5 387V390 M705.5 387V390 M721.5 387V390 M737.5 387V390 M753.5 387V390 M769.5 387V390 M785.5 384V390 M801.5 387V390 M817.5 387V390 M834.5 387V390 M850.5 387V390 M866.5 387V390 M882.5 387V390 M898.5 387V390 M914.5 387V390 M930.5 387V390 M946.5 384V390 M963.5 387V390 M979.5 387V390 M995.5 387V390 M1011.5 387V390 M1027.5 387V390" stroke="#000" stroke-width="1" fill="none" shape-rendering="crispEdges"/>
</svg>
<span class="t" style="left:40.20px;top:285.50px;font-size:12px;line-height:16px;color:#000;letter-spacing:0.126px;">0</span>
<span class="t" style="left:19.80px;top:252.40px;font-size:12px;line-height:16px;color:#000;letter-spacing:0.126px;">1000</span>
<span class="t" style="left:19.80px;top:219.30px;font-size:12px;line-height:16px;color:#000;letter-spacing:0.126px;">2000</span>
<span class="t" style="left:19.80px;top:186.20px;font-size:12px;line-height:16px;color:#000;letter-spacing:0.126px;">3000</span>
<span class="t" style="left:19.80px;top:153.10px;font-size:12px;line-height:16px;color:#000;letter-spacing:0.126px;">4000</span>
<span class="t" style="left:19.80px;top:120.00px;font-size:12px;line-height:16px;color:#000;letter-spacing:0.126px;">5000</span>
<span class="t" style="left:133.90px;top:401.00px;font-size:12px;line-height:16px;color:#000;letter-spacing:0.126px;">10</span>
<span class="t" style="left:295.10px;top:401.00px;font-size:12px;line-height:16px;color:#000;letter-spacing:0.126px;">20</span>
<span class="t" style="left:456.30px;top:401.00px;font-size:12px;line-height:16px;color:#000;letter-spacing:0.126px;">30</span>
<span class="t" style="left:617.50px;top:401.00px;font-size:12px;line-height:16px;color:#000;letter-spacing:0.126px;">40</span>
<span class="t" style="left:778.70px;top:401.00px;font-size:12px;line-height:16px;color:#000;letter-spacing:0.126px;">50</span>
<span class="t" style="left:939.90px;top:401.00px;font-size:12px;line-height:16px;color:#000;letter-spacing:0.126px;">60</span>
<span class="t" style="left:43.00px;top:103.00px;font-size:12px;line-height:16px;color:#000;letter-spacing:-0.044px;">Int.</span>
<span class="t" style="left:523.50px;top:416.00px;font-size:12px;line-height:16px;color:#000;letter-spacing:0.107px;">2Theta</span>
<svg class="b" style="left:1048px;top:102px" width="537" height="202" viewBox="1048 102 537 202" shape-rendering="crispEdges"><rect x="1341" y="127" width="79" height="18" fill="#f1ef9d"/><path d="M1101.5 102V304 M1133.5 102V304 M1167.5 102V304 M1219.5 102V304 M1300.5 102V304 M1340.5 102V304 M1420.5 102V304 M1504.5 102V304 M1049 145.5H1585 M1049 164.5H1585 M1049 183.5H1585 M1049 202.5H1585 M1049 221.5H1585 M1049 240.5H1585 M1049 259.5H1585 M1049 278.5H1585 M1049 297.5H1585" stroke="#f0f0f0" stroke-width="1" fill="none"/><path d="M1066.5 130.5V141.5L1060 136Z" fill="#000080" shape-rendering="auto"/></svg>
<span class="t" style="left:1055.00px;top:107.00px;font-size:12px;line-height:16px;color:#000;letter-spacing:-0.002px;">Cfg.</span>
<span class="t" style="left:1116.00px;top:107.00px;font-size:12px;line-height:16px;color:#000;letter-spacing:-0.500px;">ID</span>
<span class="t" style="left:1148.50px;top:107.00px;font-size:12px;line-height:16px;color:#000;letter-spacing:-0.000px;">P-</span>
<span class="t" style="left:1173.00px;top:107.00px;font-size:12px;line-height:16px;color:#000;letter-spacing:0.330px;">Meth</span>
<span class="t" style="left:1234.00px;top:107.00px;font-size:12px;line-height:16px;color:#000;letter-spacing:-0.336px;">CF-Balance</span>
<span class="t" style="left:1309.00px;top:107.00px;font-size:12px;line-height:16px;color:#000;letter-spacing:-0.757px;">Seed</span>
<span class="t" style="left:1350.00px;top:107.00px;font-size:12px;line-height:16px;color:#000;letter-spacing:-0.056px;">R-factor (%)</span>
<span class="t" style="left:1426.50px;top:107.00px;font-size:12px;line-height:16px;color:#000;letter-spacing:0.074px;">Cost function</span>
<span class="t" style="left:1071.00px;top:128.50px;font-size:12px;line-height:16px;color:#000;letter-spacing:-1.174px;">1</span>
<span class="t" style="left:1121.50px;top:128.50px;font-size:12px;line-height:16px;color:#000;letter-spacing:-1.174px;">1</span>
<span class="t" style="left:1154.00px;top:128.50px;font-size:12px;line-height:16px;color:#000;letter-spacing:-0.174px;">0</span>
<span class="t" style="left:1173.00px;top:128.50px;font-size:12px;line-height:16px;color:#000;letter-spacing:-0.136px;">Glob.</span>
<span class="t" style="left:1272.00px;top:128.50px;font-size:12px;line-height:16px;color:#000;letter-spacing:-0.339px;">0.50</span>
<span class="t" style="left:1328.50px;top:128.50px;font-size:12px;line-height:16px;color:#000;letter-spacing:-1.174px;">1</span>
<span class="t" style="left:1386.00px;top:128.50px;font-size:12px;line-height:16px;color:#000;letter-spacing:-0.406px;">14.96</span>
<span class="t" style="left:1457.50px;top:128.50px;font-size:12px;line-height:16px;color:#000;letter-spacing:-0.483px;">0.82330</span>
<span class="t" style="left:1050.00px;top:310.70px;font-size:11.9px;line-height:15px;color:#000;font-weight:bold;"><u>Bibliographic data</u></span>
<span class="t" style="left:1050.00px;top:355.70px;font-size:11.9px;line-height:15px;color:#000;font-weight:bold;"><u>Crystal data</u></span>
<span class="t" style="left:1050.00px;top:370.70px;font-size:12.3px;line-height:15px;color:#000;">Formula sum</span>
<span class="t" style="left:1242.50px;top:370.70px;font-size:12.3px;line-height:15px;color:#000;">C<span style="font-size:8px;position:relative;top:1.5px;letter-spacing:-0.7px">60</span> H<span style="font-size:8px;position:relative;top:1.5px;letter-spacing:-0.7px">100</span> N<span style="font-size:8px;position:relative;top:1.5px;letter-spacing:-0.7px">4</span> O<span style="font-size:8px;position:relative;top:1.5px;letter-spacing:-0.7px">8</span> S<span style="font-size:8px;position:relative;top:1.5px;letter-spacing:-0.7px">4</span></span>
<span class="t" style="left:1050.00px;top:385.70px;font-size:12.3px;line-height:15px;color:#000;">Formula weight</span>
<span class="t" style="left:1242.50px;top:385.70px;font-size:12.3px;line-height:15px;color:#000;">1133.74</span>
<span class="t" style="left:1050.00px;top:400.70px;font-size:12.3px;line-height:15px;color:#000;">Crystal system</span>
<span class="t" style="left:1242.50px;top:400.70px;font-size:12.3px;line-height:15px;color:#000;">monoclinic</span>
<span class="t" style="left:1050.00px;top:415.70px;font-size:12.3px;line-height:15px;color:#000;">Space group</span>
<span class="t" style="left:1242.50px;top:415.70px;font-size:12.3px;line-height:15px;color:#000;"><i>P</i> 1 21/c 1 (no. 14)</span>
<span class="t" style="left:1050.00px;top:430.70px;font-size:12.3px;line-height:15px;color:#000;">Unit cell dimensions</span>
<span class="t" style="left:1242.50px;top:430.70px;font-size:12.3px;line-height:15px;color:#000;"><i>a</i> = 16.9600 Å</span>
<span class="t" style="left:1242.50px;top:445.70px;font-size:12.3px;line-height:15px;color:#000;"><i>b</i> = 8.1382 Å</span>
<span class="t" style="left:1242.50px;top:460.70px;font-size:12.3px;line-height:15px;color:#000;"><i>c</i> = 11.7810 Å</span>
<span class="t" style="left:1242.50px;top:475.70px;font-size:12.3px;line-height:15px;color:#000;">β = 104.78 °</span>
<span class="t" style="left:1050.00px;top:490.70px;font-size:12.3px;line-height:15px;color:#000;">Cell volume</span>
<span class="t" style="left:1242.50px;top:490.70px;font-size:12.3px;line-height:15px;color:#000;">1572.26 Å<span style="font-size:8px;position:relative;top:-3.5px;letter-spacing:-0.2px">3</span></span>
<span class="t" style="left:1050.00px;top:505.70px;font-size:12.3px;line-height:15px;color:#000;">Density, calculated</span>
<span class="t" style="left:1242.50px;top:505.70px;font-size:12.3px;line-height:15px;color:#000;">1.197 g/cm<span style="font-size:8px;position:relative;top:-3.5px;letter-spacing:-0.2px">3</span></span>
<span class="t" style="left:1050.00px;top:520.70px;font-size:12.3px;line-height:15px;color:#000;">Pearson code</span>
<span class="t" style="left:1242.50px;top:520.70px;font-size:12.3px;line-height:15px;color:#000;">mP176</span>
<span class="t" style="left:1050.00px;top:535.70px;font-size:12.3px;line-height:15px;color:#000;">Formula type</span>
<span class="t" style="left:1242.50px;top:535.70px;font-size:12.3px;line-height:15px;color:#000;">NOP2Q15R25</span>
<span class="t" style="left:1050.00px;top:550.70px;font-size:12.3px;line-height:15px;color:#000;">Wyckoff sequence</span>
<span class="t" style="left:1242.50px;top:550.70px;font-size:12.3px;line-height:15px;color:#000;">e<span style="font-size:8px;position:relative;top:-3.5px;letter-spacing:-0.2px">44</span></span>
<span class="t" style="left:1050.00px;top:580.70px;font-size:11.9px;line-height:15px;color:#000;font-weight:bold;"><u>Atomic coordinates and isotropic displacement parameters (in Å<span style="font-size:8px;position:relative;top:-3.5px"> 2</span>)</u></span>
<span class="t" style="left:1050.00px;top:610.70px;font-size:11.9px;line-height:15px;color:#000;font-weight:bold;">Atom</span>
<span class="t" style="left:1117.00px;top:610.70px;font-size:11.9px;line-height:15px;color:#000;font-weight:bold;">Ox.</span>
<span class="t" style="left:1183.00px;top:610.70px;font-size:11.9px;line-height:15px;color:#000;font-weight:bold;">Wyck.</span>
<span class="t" style="left:1250.00px;top:610.70px;font-size:11.9px;line-height:15px;color:#000;font-weight:bold;">x</span>
<span class="t" style="left:1317.00px;top:610.70px;font-size:11.9px;line-height:15px;color:#000;font-weight:bold;">y</span>
<span class="t" style="left:1383.00px;top:610.70px;font-size:11.9px;line-height:15px;color:#000;font-weight:bold;">z</span>
<span class="t" style="left:1450.00px;top:610.70px;font-size:11.9px;line-height:15px;color:#000;font-weight:bold;">B</span>
<div class="b" style="left:1048px;top:625px;width:520px;height:337px;overflow:hidden">
<span class="t" style="left:2.00px;top:0.70px;font-size:12.3px;line-height:15px;color:#000;">c1</span>
<span class="t" style="left:69.00px;top:0.70px;font-size:12.3px;line-height:15px;color:#000;">+0</span>
<span class="t" style="left:135.00px;top:0.70px;font-size:12.3px;line-height:15px;color:#000;">4<i>e</i></span>
<span class="t" style="left:202.00px;top:0.70px;font-size:12.3px;line-height:15px;color:#000;">0.17341</span>
<span class="t" style="left:269.00px;top:0.70px;font-size:12.3px;line-height:15px;color:#000;">0.49846</span>
<span class="t" style="left:335.00px;top:0.70px;font-size:12.3px;line-height:15px;color:#000;">0.67096</span>
<span class="t" style="left:402.00px;top:0.70px;font-size:12.3px;line-height:15px;color:#000;">3.1000</span>
<span class="t" style="left:2.00px;top:15.70px;font-size:12.3px;line-height:15px;color:#000;">c2</span>
<span class="t" style="left:69.00px;top:15.70px;font-size:12.3px;line-height:15px;color:#000;">+0</span>
<span class="t" style="left:135.00px;top:15.70px;font-size:12.3px;line-height:15px;color:#000;">4<i>e</i></span>
<span class="t" style="left:202.00px;top:15.70px;font-size:12.3px;line-height:15px;color:#000;">0.24851</span>
<span class="t" style="left:269.00px;top:15.70px;font-size:12.3px;line-height:15px;color:#000;">0.42024</span>
<span class="t" style="left:335.00px;top:15.70px;font-size:12.3px;line-height:15px;color:#000;">0.70284</span>
<span class="t" style="left:402.00px;top:15.70px;font-size:12.3px;line-height:15px;color:#000;">3.1000</span>
<span class="t" style="left:2.00px;top:30.70px;font-size:12.3px;line-height:15px;color:#000;">c3</span>
<span class="t" style="left:69.00px;top:30.70px;font-size:12.3px;line-height:15px;color:#000;">+0</span>
<span class="t" style="left:135.00px;top:30.70px;font-size:12.3px;line-height:15px;color:#000;">4<i>e</i></span>
<span class="t" style="left:202.00px;top:30.70px;font-size:12.3px;line-height:15px;color:#000;">0.31101</span>
<span class="t" style="left:269.00px;top:30.70px;font-size:12.3px;line-height:15px;color:#000;">0.48757</span>
<span class="t" style="left:335.00px;top:30.70px;font-size:12.3px;line-height:15px;color:#000;">0.79039</span>
<span class="t" style="left:402.00px;top:30.70px;font-size:12.3px;line-height:15px;color:#000;">3.1000</span>
<span class="t" style="left:2.00px;top:45.70px;font-size:12.3px;line-height:15px;color:#000;">c4</span>
<span class="t" style="left:69.00px;top:45.70px;font-size:12.3px;line-height:15px;color:#000;">+0</span>
<span class="t" style="left:135.00px;top:45.70px;font-size:12.3px;line-height:15px;color:#000;">4<i>e</i></span>
<span class="t" style="left:202.00px;top:45.70px;font-size:12.3px;line-height:15px;color:#000;">0.29839</span>
<span class="t" style="left:269.00px;top:45.70px;font-size:12.3px;line-height:15px;color:#000;">0.63274</span>
<span class="t" style="left:335.00px;top:45.70px;font-size:12.3px;line-height:15px;color:#000;">0.84551</span>
<span class="t" style="left:402.00px;top:45.70px;font-size:12.3px;line-height:15px;color:#000;">3.1000</span>
<span class="t" style="left:2.00px;top:60.70px;font-size:12.3px;line-height:15px;color:#000;">c5</span>
<span class="t" style="left:69.00px;top:60.70px;font-size:12.3px;line-height:15px;color:#000;">+0</span>
<span class="t" style="left:135.00px;top:60.70px;font-size:12.3px;line-height:15px;color:#000;">4<i>e</i></span>
<span class="t" style="left:202.00px;top:60.70px;font-size:12.3px;line-height:15px;color:#000;">0.22290</span>
<span class="t" style="left:269.00px;top:60.70px;font-size:12.3px;line-height:15px;color:#000;">0.70931</span>
<span class="t" style="left:335.00px;top:60.70px;font-size:12.3px;line-height:15px;color:#000;">0.81256</span>
<span class="t" style="left:402.00px;top:60.70px;font-size:12.3px;line-height:15px;color:#000;">3.1000</span>
<span class="t" style="left:2.00px;top:75.70px;font-size:12.3px;line-height:15px;color:#000;">c6</span>
<span class="t" style="left:69.00px;top:75.70px;font-size:12.3px;line-height:15px;color:#000;">+0</span>
<span class="t" style="left:135.00px;top:75.70px;font-size:12.3px;line-height:15px;color:#000;">4<i>e</i></span>
<span class="t" style="left:202.00px;top:75.70px;font-size:12.3px;line-height:15px;color:#000;">0.16012</span>
<span class="t" style="left:269.00px;top:75.70px;font-size:12.3px;line-height:15px;color:#000;">0.64300</span>
<span class="t" style="left:335.00px;top:75.70px;font-size:12.3px;line-height:15px;color:#000;">0.72547</span>
<span class="t" style="left:402.00px;top:75.70px;font-size:12.3px;line-height:15px;color:#000;">3.1000</span>
<span class="t" style="left:2.00px;top:90.70px;font-size:12.3px;line-height:15px;color:#000;">c7</span>
<span class="t" style="left:69.00px;top:90.70px;font-size:12.3px;line-height:15px;color:#000;">+0</span>
<span class="t" style="left:135.00px;top:90.70px;font-size:12.3px;line-height:15px;color:#000;">4<i>e</i></span>
<span class="t" style="left:202.00px;top:90.70px;font-size:12.3px;line-height:15px;color:#000;">0.07738</span>
<span class="t" style="left:269.00px;top:90.70px;font-size:12.3px;line-height:15px;color:#000;">0.72906</span>
<span class="t" style="left:335.00px;top:90.70px;font-size:12.3px;line-height:15px;color:#000;">0.68957</span>
<span class="t" style="left:402.00px;top:90.70px;font-size:12.3px;line-height:15px;color:#000;">3.1000</span>
<span class="t" style="left:2.00px;top:105.70px;font-size:12.3px;line-height:15px;color:#000;">c8</span>
<span class="t" style="left:69.00px;top:105.70px;font-size:12.3px;line-height:15px;color:#000;">+0</span>
<span class="t" style="left:135.00px;top:105.70px;font-size:12.3px;line-height:15px;color:#000;">4<i>e</i></span>
<span class="t" style="left:202.00px;top:105.70px;font-size:12.3px;line-height:15px;color:#000;">0.01155</span>
<span class="t" style="left:269.00px;top:105.70px;font-size:12.3px;line-height:15px;color:#000;">0.62352</span>
<span class="t" style="left:335.00px;top:105.70px;font-size:12.3px;line-height:15px;color:#000;">0.72211</span>
<span class="t" style="left:402.00px;top:105.70px;font-size:12.3px;line-height:15px;color:#000;">3.1000</span>
<span class="t" style="left:2.00px;top:120.70px;font-size:12.3px;line-height:15px;color:#000;">c9</span>
<span class="t" style="left:69.00px;top:120.70px;font-size:12.3px;line-height:15px;color:#000;">+0</span>
<span class="t" style="left:135.00px;top:120.70px;font-size:12.3px;line-height:15px;color:#000;">4<i>e</i></span>
<span class="t" style="left:202.00px;top:120.70px;font-size:12.3px;line-height:15px;color:#000;">0.21185</span>
<span class="t" style="left:269.00px;top:120.70px;font-size:12.3px;line-height:15px;color:#000;">0.12044</span>
<span class="t" style="left:335.00px;top:120.70px;font-size:12.3px;line-height:15px;color:#000;">0.67714</span>
<span class="t" style="left:402.00px;top:120.70px;font-size:12.3px;line-height:15px;color:#000;">3.1000</span>
<span class="t" style="left:2.00px;top:135.70px;font-size:12.3px;line-height:15px;color:#000;">c10</span>
<span class="t" style="left:69.00px;top:135.70px;font-size:12.3px;line-height:15px;color:#000;">+0</span>
<span class="t" style="left:135.00px;top:135.70px;font-size:12.3px;line-height:15px;color:#000;">4<i>e</i></span>
<span class="t" style="left:202.00px;top:135.70px;font-size:12.3px;line-height:15px;color:#000;">0.23437</span>
<span class="t" style="left:269.00px;top:135.70px;font-size:12.3px;line-height:15px;color:#000;">0.27880</span>
<span class="t" style="left:335.00px;top:135.70px;font-size:12.3px;line-height:15px;color:#000;">0.50828</span>
<span class="t" style="left:402.00px;top:135.70px;font-size:12.3px;line-height:15px;color:#000;">3.1000</span>
<span class="t" style="left:2.00px;top:150.70px;font-size:12.3px;line-height:15px;color:#000;">c11</span>
<span class="t" style="left:69.00px;top:150.70px;font-size:12.3px;line-height:15px;color:#000;">+0</span>
<span class="t" style="left:135.00px;top:150.70px;font-size:12.3px;line-height:15px;color:#000;">4<i>e</i></span>
<span class="t" style="left:202.00px;top:150.70px;font-size:12.3px;line-height:15px;color:#000;">0.26150</span>
<span class="t" style="left:269.00px;top:150.70px;font-size:12.3px;line-height:15px;color:#000;">0.26025</span>
<span class="t" style="left:335.00px;top:150.70px;font-size:12.3px;line-height:15px;color:#000;">0.64194</span>
<span class="t" style="left:402.00px;top:150.70px;font-size:12.3px;line-height:15px;color:#000;">3.1000</span>
<span class="t" style="left:2.00px;top:165.70px;font-size:12.3px;line-height:15px;color:#000;">c12</span>
<span class="t" style="left:69.00px;top:165.70px;font-size:12.3px;line-height:15px;color:#000;">+0</span>
<span class="t" style="left:135.00px;top:165.70px;font-size:12.3px;line-height:15px;color:#000;">4<i>e</i></span>
<span class="t" style="left:202.00px;top:165.70px;font-size:12.3px;line-height:15px;color:#000;">0.05201</span>
<span class="t" style="left:269.00px;top:165.70px;font-size:12.3px;line-height:15px;color:#000;">0.75951</span>
<span class="t" style="left:335.00px;top:165.70px;font-size:12.3px;line-height:15px;color:#000;">0.55667</span>
<span class="t" style="left:402.00px;top:165.70px;font-size:12.3px;line-height:15px;color:#000;">3.1000</span>
<span class="t" style="left:2.00px;top:180.70px;font-size:12.3px;line-height:15px;color:#000;">c13</span>
<span class="t" style="left:69.00px;top:180.70px;font-size:12.3px;line-height:15px;color:#000;">+0</span>
<span class="t" style="left:135.00px;top:180.70px;font-size:12.3px;line-height:15px;color:#000;">4<i>e</i></span>
<span class="t" style="left:202.00px;top:180.70px;font-size:12.3px;line-height:15px;color:#000;">0.37663</span>
<span class="t" style="left:269.00px;top:180.70px;font-size:12.3px;line-height:15px;color:#000;">0.89224</span>
<span class="t" style="left:335.00px;top:180.70px;font-size:12.3px;line-height:15px;color:#000;">0.91992</span>
<span class="t" style="left:402.00px;top:180.70px;font-size:12.3px;line-height:15px;color:#000;">3.1000</span>
<span class="t" style="left:2.00px;top:195.70px;font-size:12.3px;line-height:15px;color:#000;">c14</span>
<span class="t" style="left:69.00px;top:195.70px;font-size:12.3px;line-height:15px;color:#000;">+0</span>
<span class="t" style="left:135.00px;top:195.70px;font-size:12.3px;line-height:15px;color:#000;">4<i>e</i></span>
<span class="t" style="left:202.00px;top:195.70px;font-size:12.3px;line-height:15px;color:#000;">0.34488</span>
<span class="t" style="left:269.00px;top:195.70px;font-size:12.3px;line-height:15px;color:#000;">0.69352</span>
<span class="t" style="left:335.00px;top:195.70px;font-size:12.3px;line-height:15px;color:#000;">0.06133</span>
<span class="t" style="left:402.00px;top:195.70px;font-size:12.3px;line-height:15px;color:#000;">3.1000</span>
<span class="t" style="left:2.00px;top:210.70px;font-size:12.3px;line-height:15px;color:#000;">c15</span>
<span class="t" style="left:69.00px;top:210.70px;font-size:12.3px;line-height:15px;color:#000;">+0</span>
<span class="t" style="left:135.00px;top:210.70px;font-size:12.3px;line-height:15px;color:#000;">4<i>e</i></span>
<span class="t" style="left:202.00px;top:210.70px;font-size:12.3px;line-height:15px;color:#000;">0.36587</span>
<span class="t" style="left:269.00px;top:210.70px;font-size:12.3px;line-height:15px;color:#000;">0.70959</span>
<span class="t" style="left:335.00px;top:210.70px;font-size:12.3px;line-height:15px;color:#000;">0.94261</span>
<span class="t" style="left:402.00px;top:210.70px;font-size:12.3px;line-height:15px;color:#000;">3.1000</span>
<span class="t" style="left:2.00px;top:225.70px;font-size:12.3px;line-height:15px;color:#000;">h1</span>
<span class="t" style="left:69.00px;top:225.70px;font-size:12.3px;line-height:15px;color:#000;">+0</span>
<span class="t" style="left:135.00px;top:225.70px;font-size:12.3px;line-height:15px;color:#000;">4<i>e</i></span>
<span class="t" style="left:202.00px;top:225.70px;font-size:12.3px;line-height:15px;color:#000;">0.08363</span>
<span class="t" style="left:269.00px;top:225.70px;font-size:12.3px;line-height:15px;color:#000;">0.84811</span>
<span class="t" style="left:335.00px;top:225.70px;font-size:12.3px;line-height:15px;color:#000;">0.73718</span>
<span class="t" style="left:402.00px;top:225.70px;font-size:12.3px;line-height:15px;color:#000;">3.1000</span>
<span class="t" style="left:2.00px;top:240.70px;font-size:12.3px;line-height:15px;color:#000;">h2</span>
<span class="t" style="left:69.00px;top:240.70px;font-size:12.3px;line-height:15px;color:#000;">+0</span>
<span class="t" style="left:135.00px;top:240.70px;font-size:12.3px;line-height:15px;color:#000;">4<i>e</i></span>
<span class="t" style="left:202.00px;top:240.70px;font-size:12.3px;line-height:15px;color:#000;">0.21259</span>
<span class="t" style="left:269.00px;top:240.70px;font-size:12.3px;line-height:15px;color:#000;">0.82521</span>
<span class="t" style="left:335.00px;top:240.70px;font-size:12.3px;line-height:15px;color:#000;">0.85648</span>
<span class="t" style="left:402.00px;top:240.70px;font-size:12.3px;line-height:15px;color:#000;">3.1000</span>
<span class="t" style="left:2.00px;top:255.70px;font-size:12.3px;line-height:15px;color:#000;">h3</span>
<span class="t" style="left:69.00px;top:255.70px;font-size:12.3px;line-height:15px;color:#000;">+0</span>
<span class="t" style="left:135.00px;top:255.70px;font-size:12.3px;line-height:15px;color:#000;">4<i>e</i></span>
<span class="t" style="left:202.00px;top:255.70px;font-size:12.3px;line-height:15px;color:#000;">0.00297</span>
<span class="t" style="left:269.00px;top:255.70px;font-size:12.3px;line-height:15px;color:#000;">0.85367</span>
<span class="t" style="left:335.00px;top:255.70px;font-size:12.3px;line-height:15px;color:#000;">0.53614</span>
<span class="t" style="left:402.00px;top:255.70px;font-size:12.3px;line-height:15px;color:#000;">3.1000</span>
<span class="t" style="left:2.00px;top:270.70px;font-size:12.3px;line-height:15px;color:#000;">h4</span>
<span class="t" style="left:69.00px;top:270.70px;font-size:12.3px;line-height:15px;color:#000;">+0</span>
<span class="t" style="left:135.00px;top:270.70px;font-size:12.3px;line-height:15px;color:#000;">4<i>e</i></span>
<span class="t" style="left:202.00px;top:270.70px;font-size:12.3px;line-height:15px;color:#000;">0.10551</span>
<span class="t" style="left:269.00px;top:270.70px;font-size:12.3px;line-height:15px;color:#000;">0.80363</span>
<span class="t" style="left:335.00px;top:270.70px;font-size:12.3px;line-height:15px;color:#000;">0.52712</span>
<span class="t" style="left:402.00px;top:270.70px;font-size:12.3px;line-height:15px;color:#000;">3.1000</span>
<span class="t" style="left:2.00px;top:285.70px;font-size:12.3px;line-height:15px;color:#000;">h5</span>
<span class="t" style="left:69.00px;top:285.70px;font-size:12.3px;line-height:15px;color:#000;">+0</span>
<span class="t" style="left:135.00px;top:285.70px;font-size:12.3px;line-height:15px;color:#000;">4<i>e</i></span>
<span class="t" style="left:202.00px;top:285.70px;font-size:12.3px;line-height:15px;color:#000;">0.38455</span>
<span class="t" style="left:269.00px;top:285.70px;font-size:12.3px;line-height:15px;color:#000;">0.59864</span>
<span class="t" style="left:335.00px;top:285.70px;font-size:12.3px;line-height:15px;color:#000;">0.11526</span>
<span class="t" style="left:402.00px;top:285.70px;font-size:12.3px;line-height:15px;color:#000;">3.1000</span>
<span class="t" style="left:2.00px;top:300.70px;font-size:12.3px;line-height:15px;color:#000;">h6</span>
<span class="t" style="left:69.00px;top:300.70px;font-size:12.3px;line-height:15px;color:#000;">+0</span>
<span class="t" style="left:135.00px;top:300.70px;font-size:12.3px;line-height:15px;color:#000;">4<i>e</i></span>
<span class="t" style="left:202.00px;top:300.70px;font-size:12.3px;line-height:15px;color:#000;">0.27996</span>
<span class="t" style="left:269.00px;top:300.70px;font-size:12.3px;line-height:15px;color:#000;">0.65678</span>
<span class="t" style="left:335.00px;top:300.70px;font-size:12.3px;line-height:15px;color:#000;">0.04672</span>
<span class="t" style="left:402.00px;top:300.70px;font-size:12.3px;line-height:15px;color:#000;">3.1000</span>
<span class="t" style="left:2.00px;top:315.70px;font-size:12.3px;line-height:15px;color:#000;">h7</span>
<span class="t" style="left:69.00px;top:315.70px;font-size:12.3px;line-height:15px;color:#000;">+0</span>
<span class="t" style="left:135.00px;top:315.70px;font-size:12.3px;line-height:15px;color:#000;">4<i>e</i></span>
<span class="t" style="left:202.00px;top:315.70px;font-size:12.3px;line-height:15px;color:#000;">0.35497</span>
<span class="t" style="left:269.00px;top:315.70px;font-size:12.3px;line-height:15px;color:#000;">0.81341</span>
<span class="t" style="left:335.00px;top:315.70px;font-size:12.3px;line-height:15px;color:#000;">0.10791</span>
<span class="t" style="left:402.00px;top:315.70px;font-size:12.3px;line-height:15px;color:#000;">3.1000</span>
<span class="t" style="left:2.00px;top:330.70px;font-size:12.3px;line-height:15px;color:#000;">h8</span>
<span class="t" style="left:69.00px;top:330.70px;font-size:12.3px;line-height:15px;color:#000;">+0</span>
<span class="t" style="left:135.00px;top:330.70px;font-size:12.3px;line-height:15px;color:#000;">4<i>e</i></span>
<span class="t" style="left:202.00px;top:330.70px;font-size:12.3px;line-height:15px;color:#000;">0.08816</span>
<span class="t" style="left:269.00px;top:330.70px;font-size:12.3px;line-height:15px;color:#000;">0.64313</span>
<span class="t" style="left:335.00px;top:330.70px;font-size:12.3px;line-height:15px;color:#000;">0.51859</span>
<span class="t" style="left:402.00px;top:330.70px;font-size:12.3px;line-height:15px;color:#000;">3.1000</span>
</div>
<div class="b" style="left:1568px;top:309px;width:17px;height:653px;background:#f0f0f0;"></div>
<div class="b" style="left:1569px;top:326px;width:15px;height:367px;background:#cdcdcd;"></div>
<svg class="b" style="left:1568px;top:309px" width="17" height="653"><path d="M4.2 11.5L7.7 8L11.2 11.5" stroke="#606060" stroke-width="1.6" fill="none"/><path d="M4.2 641.5L7.7 645L11.2 641.5" stroke="#606060" stroke-width="1.6" fill="none"/></svg>
<div class="b" style="left:1593px;top:79px;width:316px;height:18px;background:#f3f3f3;border:1px solid #a0a0a0;box-sizing:border-box;"></div>
<span class="t" style="left:1597.00px;top:80.50px;font-size:12px;line-height:16px;color:#000;letter-spacing:-0.213px;">Structure Solution Progress</span>
<svg class="b" style="left:1874px;top:81px" width="34" height="14"><path d="M5.5 2.5V8.5 M9.5 2.5V8.5 M5.5 2.5H9.5 M8.5 2.5V8.5 M3.5 8.5H11.5 M7.5 8.5V12.5" stroke="#000" stroke-width="1" fill="none" shape-rendering="crispEdges"/><path d="M21.5 3.5L28.5 10.5M28.5 3.5L21.5 10.5" stroke="#000" stroke-width="1.6"/></svg>
<div class="b" style="left:1593px;top:99px;width:316px;height:21px;background:#e1e1e1;border:1px solid #adadad;box-sizing:border-box;"></div>
<span class="t" style="left:1597.00px;top:101.50px;font-size:12px;line-height:16px;color:#000;letter-spacing:-0.279px;">Current document (Endeavour1)</span>
<svg class="b" style="left:1892px;top:105px" width="12" height="8"><path d="M1.5 1.5L6 6L10.5 1.5" stroke="#404040" stroke-width="1.1" fill="none"/></svg>
<div class="b" style="left:1593px;top:120px;width:316px;height:445px;background:#000;"></div>
<span class="t" style="left:1595.00px;top:123.00px;font-size:12px;line-height:16px;color:#fff;letter-spacing:-0.272px;white-space:pre;">Global opt.  Seed=1  Steps=8602  100% finished</span>
<svg class="b" style="left:1593px;top:120px" width="316" height="445" viewBox="1593 120 316 445"><rect x="1595" y="141" width="313" height="200.5" fill="#404040"/><rect x="1595" y="345" width="313" height="200" fill="#404040"/><path d="M1595.5 141V341 M1610.5 141V341 M1626.5 141V341 M1642.5 141V341 M1657.5 141V341 M1673.5 141V341 M1689.5 141V341 M1704.5 141V341 M1720.5 141V341 M1735.5 141V341 M1751.5 141V341 M1767.5 141V341 M1782.5 141V341 M1798.5 141V341 M1813.5 141V341 M1829.5 141V341 M1845.5 141V341 M1860.5 141V341 M1876.5 141V341 M1892.5 141V341 M1907.5 141V341 M1595 156.5H1908 M1595 173.5H1908 M1595 189.5H1908 M1595 206.5H1908 M1595 223.5H1908 M1595 240.5H1908 M1595 257.5H1908 M1595 273.5H1908 M1595 290.5H1908 M1595 307.5H1908 M1595 324.5H1908 M1595 341.5H1908 M1595 141.5H1908" stroke="#008000" stroke-width="1" fill="none" shape-rendering="crispEdges"/><path d="M1595.5 345V545 M1610.5 345V545 M1626.5 345V545 M1642.5 345V545 M1657.5 345V545 M1673.5 345V545 M1689.5 345V545 M1704.5 345V545 M1720.5 345V545 M1735.5 345V545 M1751.5 345V545 M1767.5 345V545 M1782.5 345V545 M1798.5 345V545 M1813.5 345V545 M1829.5 345V545 M1845.5 345V545 M1860.5 345V545 M1876.5 345V545 M1892.5 345V545 M1907.5 345V545 M1595 359.5H1908 M1595 376.5H1908 M1595 393.5H1908 M1595 410.5H1908 M1595 426.5H1908 M1595 443.5H1908 M1595 460.5H1908 M1595 477.5H1908 M1595 494.5H1908 M1595 510.5H1908 M1595 527.5H1908 M1595 544.5H1908 M1595 345.5H1908" stroke="#008000" stroke-width="1" fill="none" shape-rendering="crispEdges"/><path d="M1595 173H1890 M1595 257H1890 M1595 377H1890 M1595 461H1890" stroke="#008000" stroke-width="2" fill="none" shape-rendering="crispEdges"/><rect x="1887" y="167" width="20" height="12" fill="#404040"/><rect x="1892" y="251" width="15" height="12" fill="#404040"/><rect x="1887" y="371" width="20" height="12" fill="#404040"/><rect x="1892" y="455" width="15" height="12" fill="#404040"/><path d="M1594.5 141.0 L1598.4 183.5 L1600.0 141.0 L1604.8 141.0 L1606.3 157.7 L1607.8 162.7 L1614.7 163.7 L1616.2 157.7 L1616.7 141.0 L1627.6 141.0 L1629.6 171.6 L1633.5 156.8 L1636.5 141.0 L1639.5 183.5 L1641.4 141.0 L1658.0 141.0 L1659.0 157.7 L1661.7 173.6 L1664.0 162.7 L1667.0 193.4 L1670.0 156.8 L1671.0 141.0 L1672.0 156.8 L1677.0 173.0 L1685.0 156.8 L1687.5 145.0 L1690.0 156.8 L1692.4 183.5 L1694.8 163.7 L1698.3 197.3 L1701.3 164.7 L1704.2 196.3 L1707.7 156.8 L1710.2 164.7 L1720.6 165.7 L1726.0 180.5 L1729.5 159.7 L1733.4 170.6 L1736.4 171.6 L1739.8 196.3 L1742.3 161.7 L1744.3 199.3 L1745.8 220.0 L1749.6 214.2 L1753.6 220.9 L1762.9 215.5 L1765.6 227.5 L1770.1 274.3 L1772.8 248.9 L1776.3 282.3 L1784.3 278.3 L1792.3 282.3 L1796.3 291.6 L1799.0 293.0 L1801.6 288.4 L1804.3 292.2 L1813.6 290.3 L1817.6 294.3 L1822.5 307.1 L1829.7 307.1 L1835.8 313.5 L1863.0 313.5 L1864.4 314.6 L1908.0 314.6" stroke="#ffff00" stroke-width="2.2" fill="none" stroke-linejoin="round"/><path d="M1594.8 532.7 L1597.3 537.7 L1601.0 533.2 L1604.7 533.2 L1609.7 538.4 L1613.4 538.4 L1620.8 529.8 L1625.7 532.7 L1635.6 533.9 L1639.3 536.4 L1643.0 529.0 L1645.5 528.5 L1652.9 535.7 L1660.3 538.9 L1662.8 538.4 L1664.5 534.2 L1666.5 537.2 L1672.7 537.7 L1683.8 537.2 L1688.8 535.2 L1692.5 537.7 L1703.6 538.2 L1708.6 538.9 L1718.4 538.2 L1733.3 538.4 L1743.2 539.6 L1767.9 540.1 L1769.1 540.9 L1800.0 540.9 L1802.5 541.9 L1837.1 541.9 L1839.6 542.9 L1908.0 542.9" stroke="#00ffff" stroke-width="2.2" fill="none" stroke-linejoin="round"/><rect x="1595" y="143" width="118.5" height="12" fill="#000"/><path d="M1594.5 142V156" stroke="#ffff00" stroke-width="1"/><rect x="1827.5" y="143" width="78" height="12" fill="#000"/><rect x="1595" y="347" width="118.5" height="12" fill="#000"/><rect x="1812" y="347" width="94" height="12" fill="#000"/><path d="M1601 561H1611L1606 551Z" fill="#c8c8c8"/><rect x="1674" y="551" width="9" height="9" fill="#c8c8c8"/><path d="M1751 552L1758 560M1758 552L1751 560" stroke="#c8c8c8" stroke-width="1.3"/></svg>
<span class="t" style="left:1596.00px;top:141.50px;font-size:12px;line-height:16px;color:#ffff00;letter-spacing:0.013px;">Optimization finished.</span>
<span class="t" style="left:1832.00px;top:141.50px;font-size:12px;line-height:16px;color:#ffff00;letter-spacing:-0.308px;">R-factor=15%</span>
<span class="t" style="left:1596.00px;top:345.50px;font-size:12px;line-height:16px;color:#00ffff;letter-spacing:0.013px;">Optimization finished.</span>
<span class="t" style="left:1816.00px;top:345.50px;font-size:12px;line-height:16px;color:#00ffff;letter-spacing:-0.358px;">Cost f.=0.823302</span>
<span class="t" style="left:1886.65px;top:165.50px;font-size:11px;line-height:14px;color:#008000;">100</span>
<span class="t" style="left:1892.76px;top:249.50px;font-size:11px;line-height:14px;color:#008000;">50</span>
<span class="t" style="left:1886.65px;top:369.50px;font-size:11px;line-height:14px;color:#008000;">100</span>
<span class="t" style="left:1892.76px;top:453.50px;font-size:11px;line-height:14px;color:#008000;">50</span>
<span class="t" style="left:1616.00px;top:548.00px;font-size:12px;line-height:16px;color:#fff;letter-spacing:-0.337px;">Collapse</span>
<span class="t" style="left:1689.00px;top:548.00px;font-size:12px;line-height:16px;color:#fff;letter-spacing:-0.172px;">Stop</span>
<span class="t" style="left:1766.00px;top:548.00px;font-size:12px;line-height:16px;color:#fff;letter-spacing:-0.781px;">Remove</span>
<div class="b" style="left:329px;top:56px;width:22px;height:21px;background:#cce4f7;border:1px solid #0078d7;box-sizing:border-box;"></div>
<div class="b" style="left:587px;top:56px;width:22px;height:21px;background:#cce4f7;border:1px solid #0078d7;box-sizing:border-box;"></div>
<svg class="b" style="left:14px;top:59px" width="16" height="16" viewBox="0 0 16 16"><path d="M3.5 0.5H10.5L13.5 3.5V13.5H3.5Z" fill="#fff" stroke="#404040"/><path d="M10.5 0.5V3.5H13.5" fill="none" stroke="#404040"/></svg>
<svg class="b" style="left:36px;top:59px" width="16" height="16" viewBox="0 0 16 16"><path d="M1.5 13.5V5.5H4L5 4.5H9.5V7" fill="#ffffa0" stroke="#404040"/><path d="M1.5 13.5L4.5 8.5H15.5L12 13.5Z" fill="#a8a848" stroke="#404040"/><path d="M9.5 2.5Q12.5 0 14.5 3.5M15.5 1.5L14.7 4.2L12 3.5" fill="none" stroke="#404040"/></svg>
<svg class="b" style="left:58px;top:59px" width="16" height="16" viewBox="0 0 16 16"><rect x="1.5" y="0.5" width="13" height="13" fill="#a8a848" stroke="#404040"/><rect x="4" y="1" width="8" height="6" fill="#fff" stroke="#404040" stroke-width="0.8"/><rect x="4" y="9.5" width="8" height="4" fill="#404040"/><rect x="9.5" y="10.5" width="2" height="3" fill="#fff"/></svg>
<svg class="b" style="left:80px;top:59px" width="16" height="16" viewBox="0 0 16 16"><path d="M1 14V9L4 1H7L8 6H9L10 1H13L16 9V14H11V9H6V14Z" fill="#404040"/><path d="M3.5 10V13M12.500 10V13M5 3.5V5.500M11.5 3.500V5.500M4.500 7V8.5M12 7V8.5" stroke="#ffff40" stroke-width="1.2"/></svg>
<svg class="b" style="left:102px;top:59px" width="16" height="16" viewBox="0 0 16 16"><path d="M3.500 0.500H10.5L13.500 3.500V12.500H3.500Z" fill="#fff" stroke="#404040"/><circle cx="9" cy="7.500" r="3.200" fill="#f8f8ff" stroke="#404040"/><path d="M6.3 9A3.2 3.200 0 0 0 11.8 9" stroke="#40e0e0" fill="none" stroke-width="1.2"/><path d="M11.500 10.500L15 14.500" stroke="#404040" stroke-width="1.800"/></svg>
<svg class="b" style="left:124px;top:59px" width="16" height="16" viewBox="0 0 16 16"><path d="M4.500 5L6 0.500H13.5L12.500 5" fill="#fff" stroke="#404040"/><path d="M1 7Q1 5.500 2.500 5.500H14.500L15.500 7V11.500L13.500 13.500H2.500Q1 13.500 1 12Z" fill="#fff" stroke="#404040"/><path d="M1 8.500H13.500L15.500 7M1 11H13.500L15.500 9.500M7 2H11.500M6.500 3.500H11.500" stroke="#404040" fill="none"/><path d="M7.500 10H10.500" stroke="#ffff40" stroke-width="1.2"/></svg>
<svg class="b" style="left:154px;top:59px" width="16" height="16" viewBox="0 0 16 16"><path d="M5.500 0.500L9.5 9.500M10.500 0.500L6.500 9.500" stroke="#a0a0a0" fill="none"/><circle cx="5.300" cy="11.700" r="2" fill="none" stroke="#a0a0a0"/><circle cx="10.700" cy="11.700" r="2" fill="none" stroke="#a0a0a0"/></svg>
<svg class="b" style="left:176px;top:59px" width="16" height="16" viewBox="0 0 16 16"><path d="M0.5 0.500H5.5L8 3V9.500H0.5Z" fill="#fff" stroke="#202020"/><path d="M2 3H5M2 5H6.500M2 7H6.500" stroke="#202020"/><path d="M6.500 4.500H12L15 7.500V13.500H6.500Z" fill="#fff" stroke="#4040c0" stroke-width="1.200"/><path d="M8.500 8H12M8.500 10H13M8.500 12H13" stroke="#202020"/></svg>
<svg class="b" style="left:198px;top:59px" width="16" height="16" viewBox="0 0 16 16"><rect x="1" y="2" width="13" height="12" rx="1.500" fill="#a0a0a0"/><rect x="5" y="0.500" width="5" height="3" fill="#a0a0a0"/><path d="M5 3.500H10" stroke="#fff" stroke-width="0.800"/><rect x="7.500" y="7.500" width="8" height="6.500" fill="#fff" stroke="#a0a0a0"/><path d="M9 10H12M9 12H14" stroke="#a0a0a0"/></svg>
<svg class="b" style="left:228px;top:59px" width="16" height="16" viewBox="0 0 16 16"><path d="M1 3.500L1 10.500L8 10.500Z" fill="#4040c0"/><path d="M4 7.500Q8.500 1.500 13.500 4.500Q16.500 7.500 12.500 12.500" fill="none" stroke="#4040c0" stroke-width="1.300"/></svg>
<svg class="b" style="left:250px;top:59px" width="16" height="16" viewBox="0 0 16 16"><path d="M15 3.500L15 10.500L8 10.500Z" fill="#a0a0a0"/><path d="M12 7.500Q7.500 1.500 2.500 4.500Q-0.500 7.500 3.500 12.500" fill="none" stroke="#a0a0a0" stroke-width="1.300"/></svg>
<svg class="b" style="left:280px;top:59px" width="16" height="16" viewBox="0 0 16 16"><path d="M2.500 1.500L13 7L2.500 12.500Z" fill="#40ff40"/></svg>
<svg class="b" style="left:302px;top:59px" width="16" height="16" viewBox="0 0 16 16"><rect x="2" y="2" width="12" height="11" fill="#a0a0a0"/></svg>
<svg class="b" style="left:332px;top:59px" width="16" height="16" viewBox="0 0 16 16"><path d="M1.500 13.500L9 4.500" stroke="#a03030" stroke-width="1.800"/><path d="M1 14L9.500 4" stroke="#404040" stroke-width="0.600" fill="none"/><path d="M4.500 1.800L7 0.500L10 1.300L12.500 3.500L14 6L12.500 7.200L11 5.200L9 5.600L7 3.200L5 2.800Z" fill="#ffff40" stroke="#404040" stroke-width="0.500"/><path d="M8.500 9Q6 11 7.500 13Q10 15 12.500 13Q13.500 11 11.500 9M10 7.500V11.500" fill="none" stroke="#404040" stroke-width="1"/></svg>
<svg class="b" style="left:354px;top:59px" width="16" height="16" viewBox="0 0 16 16"><rect x="1.500" y="1" width="13.500" height="10.500" fill="#fff" stroke="#404040"/><rect x="1" y="0" width="14.500" height="2" fill="#4040c0"/><g transform="translate(0,2.300)"><path d="M1.500 13.500L9 4.500" stroke="#a03030" stroke-width="1.800"/><path d="M1 14L9.500 4" stroke="#404040" stroke-width="0.600" fill="none"/><path d="M4.500 1.800L7 0.500L10 1.300L12.500 3.500L14 6L12.500 7.200L11 5.200L9 5.600L7 3.200L5 2.800Z" fill="#ffff40" stroke="#404040" stroke-width="0.500"/></g></svg>
<svg class="b" style="left:376px;top:59px" width="16" height="16" viewBox="0 0 16 16"><path d="M5.500 1.500L15.500 12.500" stroke="#4040c0" stroke-width="2.200"/><path d="M5.500 1.500L8 4.200" stroke="#ffff40" stroke-width="2.200"/><path d="M11.500 0V3M10 1.500H13M14 2V5M12.500 3.500H15.500" stroke="#404040" stroke-width="0.900"/><circle cx="2.500" cy="6.500" r="2" fill="#ffff40" stroke="#404040" stroke-width="0.500" stroke-dasharray="1 1"/><circle cx="2.500" cy="12.500" r="2" fill="#ffff40" stroke="#404040" stroke-width="0.500" stroke-dasharray="1 1"/><circle cx="6.500" cy="9.500" r="2.200" fill="#a8a848"/><circle cx="2.500" cy="9.500" r="1.100" fill="#404040"/></svg>
<svg class="b" style="left:398px;top:59px" width="16" height="16" viewBox="0 0 16 16"><path d="M5.500 1H9.500V3.500H5.500ZM4 6H9.500V12.500L11.500 13.500V14.500H3.500V13.500L5.500 12.500V7.500H4Z" fill="#a0a0a0"/></svg>
<svg class="b" style="left:428px;top:59px" width="16" height="16" viewBox="0 0 16 16"><path d="M13.500 0.500Q9 3 9.500 6Q13 9 11 11.500Q9 13.500 7.500 15Q15 12 14 7.500Q12.500 4.500 13.500 0.500Z" fill="#404040"/><path d="M4.500 0.500V5.500M2 3H7M2.500 4.500V8.500M0.500 6.500H4.500" stroke="#404040" stroke-width="1" shape-rendering="crispEdges"/></svg>
<svg class="b" style="left:450px;top:59px" width="16" height="16" viewBox="0 0 16 16"><rect x="0.500" y="0.500" width="15" height="14.500" fill="#404040"/><path d="M0.500 5.500H15.500" stroke="#fff" stroke-width="1" shape-rendering="crispEdges"/><path d="M2.500 0.500V12.500Q2.800 15 4.500 12.500Q6.500 8 10 7.500H15.500" fill="none" stroke="#ffff40" stroke-width="1.300"/></svg>
<svg class="b" style="left:480px;top:59px" width="16" height="16" viewBox="0 0 16 16"><rect x="0.700" y="0.700" width="15" height="14" fill="#fff" stroke="#404040" stroke-width="1.300"/><path d="M5 3.500H14M5 6.500H14M5 9.500H14M5 12.500H14" stroke="#404040" stroke-width="1.100"/><circle cx="3" cy="3.500" r="1.600" fill="#ff4040"/><circle cx="3" cy="6.500" r="1.600" fill="#40e040"/><circle cx="3" cy="9.500" r="1.600" fill="#ffff40"/><circle cx="3" cy="12.500" r="1.600" fill="#40e040"/></svg>
<svg class="b" style="left:502px;top:59px" width="16" height="16" viewBox="0 0 16 16"><rect x="0.700" y="0.700" width="15" height="14" fill="#fff" stroke="#404040" stroke-width="1.300"/><path d="M3 3.500H8M3 5.500H6M9 5.500H13M3 7.500H14M3 9.500H5M7 9.500H9M11 9.500H13M3 11.500H5M7 11.500H9M11 11.500H13M3 13H14" stroke="#c8c8c8" stroke-width="1" shape-rendering="crispEdges"/></svg>
<svg class="b" style="left:524px;top:59px" width="16" height="16" viewBox="0 0 16 16"><rect x="0.700" y="1" width="13.500" height="9.500" fill="#fff" stroke="#404040" stroke-width="1.300"/><rect x="0" y="0" width="15" height="2" fill="#4040c0"/><path d="M3.500 5.500V15M6.500 1.500V15M9.500 7.500V15M12.500 12.500V15" stroke="#ff4040" stroke-width="1" shape-rendering="crispEdges"/></svg>
<svg class="b" style="left:546px;top:59px" width="16" height="16" viewBox="0 0 16 16"><rect x="0.700" y="1" width="13.500" height="9.500" fill="#fff" stroke="#404040" stroke-width="1.300"/><rect x="0" y="0" width="15" height="2" fill="#4040c0"/><rect x="2.500" y="7" width="12.500" height="8" fill="#ffff40" stroke="#d0d0d0" stroke-width="0.500"/><text x="8.800" y="13.500" font-family="Liberation Sans, sans-serif" font-size="7.500" font-weight="bold" text-anchor="middle" fill="#404040">hkl</text></svg>
<svg class="b" style="left:568px;top:59px" width="16" height="16" viewBox="0 0 16 16"><rect x="0.700" y="1" width="13.500" height="9.500" fill="#fff" stroke="#404040" stroke-width="1.300"/><rect x="0" y="0" width="15" height="2" fill="#4040c0"/><path d="M8.500 7V12.500M3 13H14" stroke="#ffff40" stroke-width="2.500"/><circle cx="8.500" cy="6.500" r="2.500" fill="#ff4040"/><circle cx="3" cy="13" r="2.500" fill="#ff4040"/><circle cx="14" cy="13" r="2.500" fill="#ff4040"/><rect x="7.500" y="11.500" width="2" height="3" fill="#2020ff"/></svg>
<svg class="b" style="left:590px;top:59px" width="16" height="16" viewBox="0 0 16 16"><rect x="1" y="1" width="14" height="12.500" fill="#404040"/><rect x="0" y="0" width="16" height="2" fill="#4040ff"/><path d="M8.500 3.500H14" stroke="#40a040" stroke-width="1"/><path d="M1 3.500H3L5 7.500L5.500 4.500L7.500 9.500L8 7L9 10L13 13.500H15" fill="none" stroke="#ffff40" stroke-width="1.200"/></svg>
<div class="b" style="left:147px;top:56px;width:1px;height:20px;background:#c4c4c4;"></div>
<div class="b" style="left:221px;top:56px;width:1px;height:20px;background:#c4c4c4;"></div>
<div class="b" style="left:273px;top:56px;width:1px;height:20px;background:#c4c4c4;"></div>
<div class="b" style="left:325px;top:56px;width:1px;height:20px;background:#c4c4c4;"></div>
<div class="b" style="left:421px;top:56px;width:1px;height:20px;background:#c4c4c4;"></div>
<div class="b" style="left:473px;top:56px;width:1px;height:20px;background:#c4c4c4;"></div>
<svg class="b" style="left:612px;top:69px" width="7" height="4"><path d="M0 0H7L3.500 3.500Z" fill="#000"/></svg>
<div class="b" style="left:645px;top:968px;width:22px;height:21px;background:#cce4f7;border:1px solid #0078d7;box-sizing:border-box;"></div>
<div class="b" style="left:719px;top:968px;width:22px;height:21px;background:#cce4f7;border:1px solid #0078d7;box-sizing:border-box;"></div>
<div class="b" style="left:741px;top:968px;width:22px;height:21px;background:#cce4f7;border:1px solid #0078d7;box-sizing:border-box;"></div>
<div class="b" style="left:911px;top:968px;width:22px;height:21px;background:#cce4f7;border:1px solid #0078d7;box-sizing:border-box;"></div>
<svg class="b" style="left:17px;top:971px" width="16" height="16" viewBox="0 0 16 16"><circle cx="4" cy="4" r="3.800" fill="#404040"/><circle cx="12" cy="11.500" r="3.800" fill="#404040"/><circle cx="12" cy="4" r="3.300" fill="#fff" stroke="#404040"/><circle cx="4" cy="11.500" r="3.300" fill="#fff" stroke="#404040"/></svg>
<svg class="b" style="left:39px;top:971px" width="16" height="16" viewBox="0 0 16 16"><circle cx="4" cy="4" r="4" fill="#a0a0a0"/><circle cx="12" cy="4" r="4" fill="#a0a0a0"/><circle cx="4" cy="11.500" r="4" fill="#a0a0a0"/><circle cx="12" cy="11.500" r="4" fill="#a0a0a0"/><rect x="4" y="4" width="8" height="7.500" fill="#a0a0a0"/><circle cx="8" cy="7.800" r="1.300" fill="#f0f0f0"/></svg>
<svg class="b" style="left:61px;top:971px" width="16" height="16" viewBox="0 0 16 16"><path d="M4.500 3.500Q5 0.500 8.500 0.700Q12 1 11.500 4Q11 5.500 8.500 7V9.500" fill="none" stroke="#404040" stroke-width="1.700"/><rect x="7.600" y="11" width="1.800" height="1.800" fill="#404040"/><rect x="0.800" y="9.800" width="4.500" height="4.500" rx="1" fill="#fff" stroke="#404040"/><rect x="10.800" y="9.800" width="4.500" height="4.500" rx="1" fill="#fff" stroke="#404040"/><path d="M5.500 12H7.500M9.500 12H10.500" stroke="#404040"/></svg>
<svg class="b" style="left:92px;top:971px" width="16" height="16" viewBox="0 0 16 16"><path d="M0.800 14.500V8L6 2.500" fill="none" stroke="#404040" stroke-width="1.300"/><path d="M4 6.500L9.500 1.500L15 7L9.500 12.500Z" fill="#e8e8e8" stroke="#404040"/><path d="M4.500 7L7 4.500L12 10L9.500 12Z" fill="#ffff40"/></svg>
<svg class="b" style="left:114px;top:971px" width="16" height="16" viewBox="0 0 16 16"><circle cx="12" cy="4" r="3.500" fill="#ffff40" stroke="#404040" stroke-width="0.600"/><circle cx="4.500" cy="11.500" r="3.500" fill="#ffff40" stroke="#404040" stroke-width="0.600"/><circle cx="12" cy="11.500" r="3.500" fill="#ffff40" stroke="#404040" stroke-width="0.600"/><path d="M4.500 0V8M0.500 4H8.500" stroke="#404040" stroke-width="1.700"/></svg>
<svg class="b" style="left:136px;top:971px" width="16" height="16" viewBox="0 0 16 16"><circle cx="12" cy="7" r="3.500" fill="#ffff40" stroke="#404040" stroke-width="0.600"/><path d="M4 3V11M0 7H9" stroke="#404040" stroke-width="1.700"/></svg>
<svg class="b" style="left:158px;top:971px" width="16" height="16" viewBox="0 0 16 16"><circle cx="8" cy="4.500" r="3.500" fill="#a0a0a0"/><circle cx="4.500" cy="10" r="3.500" fill="#a0a0a0"/><circle cx="11.500" cy="10" r="3.500" fill="#a0a0a0"/><path d="M0.500 3V0.500H3M13 0.500H15.500V3M0.500 11V13.500H3M13 13.500H15.500V11" fill="none" stroke="#a0a0a0" stroke-width="0.900"/></svg>
<svg class="b" style="left:187px;top:971px" width="16" height="16" viewBox="0 0 16 16"><path d="M5 0.500H11L15 4.500V10.500L11 14.500H5L1 10.500V4.500Z" fill="#404040"/><circle cx="8" cy="7.500" r="4.300" fill="#ffff40"/><circle cx="8" cy="7.500" r="2.500" fill="#a8a848"/></svg>
<svg class="b" style="left:209px;top:971px" width="16" height="16" viewBox="0 0 16 16"><circle cx="8" cy="7.500" r="6.500" fill="#fff" stroke="#404040" stroke-width="1.100" stroke-dasharray="1 1.300"/><circle cx="8" cy="7.500" r="3.600" fill="#a8a848" stroke="#404040" stroke-width="0.500"/></svg>
<svg class="b" style="left:231px;top:971px" width="16" height="16" viewBox="0 0 16 16"><path d="M4 1H12L15.500 7.500L12 14H4L0.500 7.500Z" fill="none" stroke="#4848ff" stroke-width="1.700"/></svg>
<svg class="b" style="left:253px;top:971px" width="16" height="16" viewBox="0 0 16 16"><path d="M4 1H12L15.500 7.500L12 14H8" fill="none" stroke="#ffff40" stroke-width="1.700"/><path d="M8 14H4L0.500 7.500L2.300 4" fill="none" stroke="#4848ff" stroke-width="1.700"/></svg>
<svg class="b" style="left:283px;top:971px" width="16" height="16" viewBox="0 0 16 16"><path d="M2.500 2.500H13.500V13.500H2.500ZM2.500 2.500L13.500 13.500M13.500 2.500L2.500 13.500" fill="none" stroke="#4848ff" stroke-width="1.100"/><circle cx="2.500" cy="2.500" r="2" fill="#fff" stroke="#404040"/><circle cx="13.500" cy="2.500" r="2" fill="#fff" stroke="#404040"/><circle cx="2.500" cy="13" r="2" fill="#fff" stroke="#404040"/><circle cx="13.500" cy="13" r="2" fill="#fff" stroke="#404040"/></svg>
<svg class="b" style="left:305px;top:971px" width="16" height="16" viewBox="0 0 16 16"><path d="M6 0.500H10V5.500L13 9.500M6 0.500V5.500L3 9.500M8 8L6.500 9.500M8 8L9.500 9.500" fill="none" stroke="#a0a0a0"/><rect x="0.800" y="9.800" width="4.500" height="4.500" rx="1" fill="none" stroke="#a0a0a0"/><rect x="10.500" y="9.800" width="4.500" height="4.500" rx="1" fill="none" stroke="#a0a0a0"/></svg>
<svg class="b" style="left:335px;top:971px" width="16" height="16" viewBox="0 0 16 16"><path d="M0.800 4H12V14.500H0.800ZM0.800 4L4 0.800M12 4L15.500 0.800M12 14.500L15.500 11.500M0.800 14.500L4 11.500H15.500" fill="none" stroke="#4848ff" stroke-width="1.100"/><path d="M4 0.800H15.500V11.500" fill="none" stroke="#404040" stroke-width="1.400"/><path d="M4 0.800V11.500" fill="none" stroke="#404040" stroke-width="1.400"/></svg>
<svg class="b" style="left:357px;top:971px" width="16" height="16" viewBox="0 0 16 16"><path d="M8.500 0.500L15.500 7.500L8.500 14.500L1 7.500Z" fill="#a0a0a0"/></svg>
<svg class="b" style="left:387px;top:971px" width="16" height="16" viewBox="0 0 16 16"><path d="M3.500 1H12.500L15 4.500L12.500 7.500H3.500L1 4.500ZM3.500 7.500H12.500L15 11L12.500 14.500H3.500L1 11Z" fill="none" stroke="#a0a0a0" stroke-width="1.600"/><path d="M5 4.500H11M5 11H11" stroke="#a0a0a0" stroke-width="1.400"/></svg>
<svg class="b" style="left:409px;top:971px" width="16" height="16" viewBox="0 0 16 16"><path d="M5.500 2H10.500L14 7.500L10.500 12.500H5.500L2.500 7.500Z" fill="#a8a848" stroke="#404040" stroke-width="0.800"/><path d="M0 5L16 10.500M1 13L15.500 3" stroke="#ff3030" stroke-width="1.500"/></svg>
<svg class="b" style="left:431px;top:971px" width="16" height="16" viewBox="0 0 16 16"><path d="M8 0.500L15 5L14.500 8.500L16 10L13 9.500L8 14L5.500 12L1.500 15L4 11L1 5.500Z" fill="#a0a0a0"/></svg>
<svg class="b" style="left:461px;top:971px" width="16" height="16" viewBox="0 0 16 16"><circle cx="4" cy="11.500" r="3.500" fill="#a0a0a0"/><text x="11.500" y="6.800" font-family="Liberation Sans, sans-serif" font-size="7.500" font-weight="bold" text-anchor="middle" fill="#a0a0a0">Fe</text></svg>
<svg class="b" style="left:483px;top:971px" width="16" height="16" viewBox="0 0 16 16"><path d="M1 1H15V4.500H13.800L13 2.500H9.800V12.500L11.500 13.500V14.500H4.500V13.500L6.200 12.500V2.500H3L2.200 4.500H1Z" fill="#404040"/></svg>
<svg class="b" style="left:530px;top:971px" width="16" height="16" viewBox="0 0 16 16"><path d="M8 0.500V5M8 15V10.500M0.500 7.800H5M15.500 7.800H11" stroke="#404040" stroke-width="1.400"/><path d="M8 5.8L5.92 3.2L10.08 3.2Z" fill="#404040"/><path d="M8 9.8L10.08 12.4L5.92 12.4Z" fill="#404040"/><path d="M6 7.8L3.4 9.88L3.4 5.72Z" fill="#404040"/><path d="M10 7.8L12.6 5.72L12.6 9.88Z" fill="#404040"/><circle cx="8" cy="7.800" r="1.800" fill="#ffff40"/></svg>
<svg class="b" style="left:552px;top:971px" width="16" height="16" viewBox="0 0 16 16"><rect x="0.800" y="0.800" width="14.500" height="14" fill="none" stroke="#a0a0a0" stroke-width="1.300"/><path d="M8 3V7M4 8.500H12M8 10V13" stroke="#a0a0a0" stroke-width="1.600"/><path d="M8 2L10.4 5L5.6 5Z" fill="#a0a0a0"/><path d="M3 8.5L6 6.1L6 10.9Z" fill="#a0a0a0"/><path d="M13 8.5L10 10.9L10 6.1Z" fill="#a0a0a0"/><path d="M8 12.5L10.4 15.5L5.6 15.5Z" fill="#a0a0a0"/></svg>
<svg class="b" style="left:574px;top:971px" width="16" height="16" viewBox="0 0 16 16"><rect x="0.800" y="0.800" width="14.500" height="14" fill="none" stroke="#a0a0a0" stroke-width="1.300"/><path d="M8 3V13M3 8H13" stroke="#a0a0a0" stroke-width="1.800"/><path d="M8 2L10.4 5L5.6 5Z" fill="#a0a0a0"/><path d="M2.5 8L5.5 5.6L5.5 10.4Z" fill="#a0a0a0"/><path d="M13.5 8L10.5 10.4L10.5 5.6Z" fill="#a0a0a0"/><path d="M8 14L5.6 11L10.4 11Z" fill="#a0a0a0"/></svg>
<svg class="b" style="left:596px;top:971px" width="16" height="16" viewBox="0 0 16 16"><rect x="5" y="5.500" width="6" height="5" fill="none" stroke="#a0a0a0" stroke-width="1.200"/><path d="M8 0.8L10.64 4.1L5.36 4.1Z" fill="#a0a0a0"/><path d="M0.5 8L3.8 5.36L3.8 10.64Z" fill="#a0a0a0"/><path d="M15.5 8L12.2 10.64L12.2 5.36Z" fill="#a0a0a0"/><path d="M8 15L5.36 11.7L10.64 11.7Z" fill="#a0a0a0"/></svg>
<svg class="b" style="left:626px;top:971px" width="16" height="16" viewBox="0 0 16 16"><path d="M8 8.500V0.500M8 8.500L0.500 14.500M8 8.500L15.500 14.500" stroke="#4848ff" stroke-width="1"/><path d="M8 9V4M8 9L4 12M8 9L12 12" stroke="#404040" stroke-width="1.100"/></svg>
<svg class="b" style="left:648px;top:971px" width="16" height="16" viewBox="0 0 16 16"><path d="M8 9.500V2.500M8 9.500L3 12.500M8 9.500L13 12.500" stroke="#404040" stroke-width="1.200"/><circle cx="8" cy="2.500" r="2.400" fill="#4848ff"/><circle cx="3" cy="12.500" r="2.400" fill="#4848ff"/><circle cx="13" cy="12.500" r="2.400" fill="#4848ff"/></svg>
<svg class="b" style="left:670px;top:971px" width="16" height="16" viewBox="0 0 16 16"><path d="M5.500 0.500H10.500L15.500 7V12L13.500 14.500H2.500L0.500 12V7Z" fill="#4848ff"/><path d="M3.500 6H12.500L8 13.500Z" fill="none" stroke="#404040" stroke-width="1.200"/></svg>
<svg class="b" style="left:700px;top:971px" width="16" height="16" viewBox="0 0 16 16"><rect x="0.800" y="0.800" width="14.500" height="14" fill="#fff" stroke="#404040" stroke-width="1.500"/><rect x="3.800" y="3.800" width="8.500" height="8" fill="none" stroke="#404040" stroke-width="1.300"/><path d="M1 1L4 4M15 1L12 4M1 14.500L4 12M15 14.500L12 12" stroke="#404040"/></svg>
<svg class="b" style="left:722px;top:971px" width="16" height="16" viewBox="0 0 16 16"><path d="M4 0.500H8.500L11 3L5 9.500L2.500 7.500L1 5.500V3Z" fill="#4848ff"/><circle cx="9" cy="8" r="6.300" fill="#4848ff" fill-opacity="0.550"/><path d="M4 0.500H8.500L12 4L4 11L1 7V3Z" fill="#4848ff" fill-opacity="0.500"/></svg>
<svg class="b" style="left:744px;top:971px" width="16" height="16" viewBox="0 0 16 16"><circle cx="8" cy="7.700" r="7.300" fill="#4848ff"/><ellipse cx="5.800" cy="4.700" rx="2.600" ry="2.300" fill="#fff"/></svg>
<svg class="b" style="left:766px;top:971px" width="16" height="16" viewBox="0 0 16 16"><path d="M3.500 3V9.500L0.500 13.500M3.500 9.500L6.500 13.500M12.500 3V9.500L9.500 13.500M12.500 9.500L15.500 13.500" fill="none" stroke="#404040" stroke-width="1"/></svg>
<svg class="b" style="left:796px;top:971px" width="16" height="16" viewBox="0 0 16 16"><path d="M3.500 0.500V11L0.500 15M3.500 11H15.500" fill="none" stroke="#404040" stroke-width="1"/><text x="4.500" y="4.500" font-family="Liberation Sans, sans-serif" font-size="5.500" fill="#2020ff">b</text><text x="12.500" y="8.500" font-family="Liberation Sans, sans-serif" font-size="5.500" fill="#2020ff">a</text><text x="3.500" y="15.500" font-family="Liberation Sans, sans-serif" font-size="5.500" fill="#2020ff">c</text></svg>
<svg class="b" style="left:818px;top:971px" width="16" height="16" viewBox="0 0 16 16"><ellipse cx="8" cy="8" rx="7.300" ry="5.800" fill="#fff" stroke="#404040" stroke-width="1.300"/><path d="M1 7Q5 10 9.500 8.500Q13 7 14.500 5.500M8.500 2.500Q11 5 9.500 8.500Q8.500 11 8 13.500" fill="none" stroke="#404040" stroke-width="1"/></svg>
<svg class="b" style="left:840px;top:971px" width="16" height="16" viewBox="0 0 16 16"><path d="M3.500 0.500V15M12.500 0.500V15M0.500 3.500H15.500M0.500 12H15.500" stroke="#a0a0a0" stroke-width="1.100"/></svg>
<svg class="b" style="left:862px;top:971px" width="16" height="16" viewBox="0 0 16 16"><path d="M8 0.800L15 7.800L8 14.800L1 7.800Z" fill="#fff" stroke="#c0c0c0" stroke-width="0.800"/><circle cx="8" cy="7.800" r="2.400" fill="#a0a0a0"/></svg>
<svg class="b" style="left:892px;top:971px" width="16" height="16" viewBox="0 0 16 16"><rect x="0.800" y="1.500" width="14.500" height="12.500" fill="none" stroke="#a0a0a0" stroke-width="1.200"/><path d="M3 4.500L6 4L7 8L10 7L12.500 4L13 9L10 11L6.500 10.500L3.500 11.500Z" fill="none" stroke="#a0a0a0" stroke-width="1.800"/></svg>
<svg class="b" style="left:914px;top:971px" width="16" height="16" viewBox="0 0 16 16"><circle cx="8.500" cy="7.700" r="7" fill="#3838c0"/><circle cx="6" cy="6.500" r="5.500" fill="#7878e8"/><circle cx="5" cy="6" r="3.800" fill="#c8d8ff"/><circle cx="4.500" cy="5.500" r="1.800" fill="#fff"/><path d="M0 0H4L1.500 4Q0 8 3 12L6 15.500H0Z" fill="#cce4f7"/></svg>
<svg class="b" style="left:964px;top:971px" width="16" height="16" viewBox="0 0 16 16"><path d="M4.500 0.500V12L7 9.500L9 14.500L10.500 14L8.500 9H12Z" fill="#f4f4f4" stroke="#a0a0a0" stroke-width="0.900"/></svg>
<svg class="b" style="left:994px;top:971px" width="16" height="16" viewBox="0 0 16 16"><path d="M8 3V13M3 8H13" stroke="#a0a0a0" stroke-width="1.500"/><path d="M8 0.500L10.800 4H5.200ZM8 15.500L10.800 12H5.200ZM0.500 8L4 5.200V10.800ZM15.500 8L12 5.200V10.800Z" fill="none" stroke="#a0a0a0" stroke-width="1.300"/></svg>
<svg class="b" style="left:1016px;top:971px" width="16" height="16" viewBox="0 0 16 16"><path d="M12.500 5Q9.500 2 5.500 4Q2 7 4 11Q7 14.500 11 12.500Q13.500 10.500 13 7.500" fill="none" stroke="#a0a0a0" stroke-width="1.800"/><path d="M8.500 1L13.500 1.500L12.500 6.500Z" fill="#a0a0a0"/></svg>
<svg class="b" style="left:1038px;top:971px" width="16" height="16" viewBox="0 0 16 16"><path d="M8 2V14M2 8H14" stroke="#a0a0a0" stroke-width="1.600"/><path d="M8 0.5L10.64 3.8L5.36 3.8Z" fill="#a0a0a0"/><path d="M1 8L4.3 5.36L4.3 10.64Z" fill="#a0a0a0"/><path d="M15 8L11.7 10.64L11.7 5.36Z" fill="#a0a0a0"/><path d="M8 15.5L5.36 12.2L10.64 12.2Z" fill="#a0a0a0"/></svg>
<svg class="b" style="left:1060px;top:971px" width="16" height="16" viewBox="0 0 16 16"><rect x="5.500" y="5.500" width="5" height="5" fill="none" stroke="#a0a0a0" stroke-width="1.500"/><path d="M5 5L2 2M11 5L14 2M5 11L2 14M11 11L14 14" stroke="#a0a0a0" stroke-width="1.600"/><path d="M1 1H5L1 5ZM15 1H11L15 5ZM1 15H5L1 11ZM15 15H11L15 11Z" fill="#a0a0a0"/></svg>
<svg class="b" style="left:1082px;top:971px" width="16" height="16" viewBox="0 0 16 16"><path d="M14.500 1.500L1.500 7.500L14.500 13M14.500 6V9.500" fill="none" stroke="#a0a0a0" stroke-width="1.700"/></svg>
<svg class="b" style="left:1112px;top:971px" width="16" height="16" viewBox="0 0 16 16"><path d="M2 10.500V1H6.500Q9.500 1 9.500 4Q9.500 6.500 6.500 6.500H5L9.500 10.500" fill="none" stroke="#a0a0a0" stroke-width="1.500"/><path d="M5.500 15V5.500H10Q13 5.500 13 8.500Q13 11 10 11H8.500L13.500 15" fill="none" stroke="#a0a0a0" stroke-width="1.500"/></svg>
<svg class="b" style="left:1159px;top:971px" width="16" height="16" viewBox="0 0 16 16"><path d="M1.500 1V14H14.500M4.500 5V14M7.500 5V14M10.500 5V14M13.500 5V14" fill="none" stroke="#a0a0a0" stroke-width="1"/></svg>
<svg class="b" style="left:1181px;top:971px" width="16" height="16" viewBox="0 0 16 16"><path d="M0.500 14H14.500M0.500 14L7.500 0.500M6 3.500Q12 6 13 14" fill="none" stroke="#a0a0a0" stroke-width="1"/></svg>
<svg class="b" style="left:1203px;top:971px" width="16" height="16" viewBox="0 0 16 16"><circle cx="5" cy="10.500" r="3.500" fill="none" stroke="#a0a0a0" stroke-width="1.100"/><path d="M5 7V1.500M7 8L14 2M9 1L11 3.500M11 1L10 3" fill="none" stroke="#a0a0a0" stroke-width="1.100"/><path d="M7.500 8.500L14.500 2.500" stroke="#a0a0a0" stroke-width="1.600"/></svg>
<div class="b" style="left:84px;top:968px;width:1px;height:20px;background:#c4c4c4;"></div>
<div class="b" style="left:180px;top:968px;width:1px;height:20px;background:#c4c4c4;"></div>
<div class="b" style="left:276px;top:968px;width:1px;height:20px;background:#c4c4c4;"></div>
<div class="b" style="left:328px;top:968px;width:1px;height:20px;background:#c4c4c4;"></div>
<div class="b" style="left:380px;top:968px;width:1px;height:20px;background:#c4c4c4;"></div>
<div class="b" style="left:454px;top:968px;width:1px;height:20px;background:#c4c4c4;"></div>
<div class="b" style="left:619px;top:968px;width:1px;height:20px;background:#c4c4c4;"></div>
<div class="b" style="left:693px;top:968px;width:1px;height:20px;background:#c4c4c4;"></div>
<div class="b" style="left:789px;top:968px;width:1px;height:20px;background:#c4c4c4;"></div>
<div class="b" style="left:885px;top:968px;width:1px;height:20px;background:#c4c4c4;"></div>
<div class="b" style="left:987px;top:968px;width:1px;height:20px;background:#c4c4c4;"></div>
<div class="b" style="left:1105px;top:968px;width:1px;height:20px;background:#c4c4c4;"></div>
<div class="b" style="left:7px;top:971px;width:3px;height:1px;background:#c0c0c0;"></div><div class="b" style="left:7px;top:973px;width:3px;height:1px;background:#c0c0c0;"></div><div class="b" style="left:7px;top:975px;width:3px;height:1px;background:#c0c0c0;"></div><div class="b" style="left:7px;top:977px;width:3px;height:1px;background:#c0c0c0;"></div><div class="b" style="left:7px;top:979px;width:3px;height:1px;background:#c0c0c0;"></div><div class="b" style="left:7px;top:981px;width:3px;height:1px;background:#c0c0c0;"></div><div class="b" style="left:7px;top:983px;width:3px;height:1px;background:#c0c0c0;"></div><div class="b" style="left:7px;top:985px;width:3px;height:1px;background:#c0c0c0;"></div>
<div class="b" style="left:520px;top:971px;width:3px;height:1px;background:#c0c0c0;"></div><div class="b" style="left:520px;top:973px;width:3px;height:1px;background:#c0c0c0;"></div><div class="b" style="left:520px;top:975px;width:3px;height:1px;background:#c0c0c0;"></div><div class="b" style="left:520px;top:977px;width:3px;height:1px;background:#c0c0c0;"></div><div class="b" style="left:520px;top:979px;width:3px;height:1px;background:#c0c0c0;"></div><div class="b" style="left:520px;top:981px;width:3px;height:1px;background:#c0c0c0;"></div><div class="b" style="left:520px;top:983px;width:3px;height:1px;background:#c0c0c0;"></div><div class="b" style="left:520px;top:985px;width:3px;height:1px;background:#c0c0c0;"></div>
<div class="b" style="left:954px;top:971px;width:3px;height:1px;background:#c0c0c0;"></div><div class="b" style="left:954px;top:973px;width:3px;height:1px;background:#c0c0c0;"></div><div class="b" style="left:954px;top:975px;width:3px;height:1px;background:#c0c0c0;"></div><div class="b" style="left:954px;top:977px;width:3px;height:1px;background:#c0c0c0;"></div><div class="b" style="left:954px;top:979px;width:3px;height:1px;background:#c0c0c0;"></div><div class="b" style="left:954px;top:981px;width:3px;height:1px;background:#c0c0c0;"></div><div class="b" style="left:954px;top:983px;width:3px;height:1px;background:#c0c0c0;"></div><div class="b" style="left:954px;top:985px;width:3px;height:1px;background:#c0c0c0;"></div>
<div class="b" style="left:1149px;top:971px;width:3px;height:1px;background:#c0c0c0;"></div><div class="b" style="left:1149px;top:973px;width:3px;height:1px;background:#c0c0c0;"></div><div class="b" style="left:1149px;top:975px;width:3px;height:1px;background:#c0c0c0;"></div><div class="b" style="left:1149px;top:977px;width:3px;height:1px;background:#c0c0c0;"></div><div class="b" style="left:1149px;top:979px;width:3px;height:1px;background:#c0c0c0;"></div><div class="b" style="left:1149px;top:981px;width:3px;height:1px;background:#c0c0c0;"></div><div class="b" style="left:1149px;top:983px;width:3px;height:1px;background:#c0c0c0;"></div><div class="b" style="left:1149px;top:985px;width:3px;height:1px;background:#c0c0c0;"></div>
<svg class="b" style="left:505px;top:981px" width="7" height="4"><path d="M0 0H7L3.500 3.500Z" fill="#000"/></svg>
<svg class="b" style="left:936px;top:981px" width="7" height="4"><path d="M0 0H7L3.500 3.500Z" fill="#000"/></svg>
<svg class="b" style="left:1134px;top:981px" width="7" height="4"><path d="M0 0H7L3.500 3.500Z" fill="#000"/></svg>
<svg class="b" style="left:1225px;top:981px" width="7" height="4"><path d="M0 0H7L3.500 3.500Z" fill="#000"/></svg>
<svg class="b" style="left:6px;top:438px" width="1036" height="523" viewBox="6 438 1036 523">
<defs>
<radialGradient id="gC" cx="0.62" cy="0.36" r="0.7" fx="0.64" fy="0.32"><stop offset="0" stop-color="#c4c4c4"/><stop offset="0.12" stop-color="#a2a2a2"/><stop offset="0.6" stop-color="#7c7c7c"/><stop offset="1" stop-color="#585858"/></radialGradient>
<radialGradient id="gH" cx="0.6" cy="0.4" r="0.7"><stop offset="0" stop-color="#ffffff"/><stop offset="0.5" stop-color="#f4f4f4"/><stop offset="1" stop-color="#a8a8a8"/></radialGradient>
<radialGradient id="gHL" cx="0.62" cy="0.36" r="0.75" fx="0.64" fy="0.32"><stop offset="0" stop-color="#ffffff"/><stop offset="0.45" stop-color="#f0f0f0"/><stop offset="1" stop-color="#989898"/></radialGradient>
<radialGradient id="gN" cx="0.62" cy="0.36" r="0.7" fx="0.64" fy="0.32"><stop offset="0" stop-color="#8080ff"/><stop offset="0.12" stop-color="#0808ff"/><stop offset="0.6" stop-color="#0000f0"/><stop offset="1" stop-color="#0000a0"/></radialGradient>
<radialGradient id="gO" cx="0.62" cy="0.36" r="0.7" fx="0.64" fy="0.32"><stop offset="0" stop-color="#ffa0a0"/><stop offset="0.12" stop-color="#ff1010"/><stop offset="0.6" stop-color="#f80000"/><stop offset="1" stop-color="#a80000"/></radialGradient>
<radialGradient id="gS" cx="0.62" cy="0.36" r="0.7" fx="0.64" fy="0.32"><stop offset="0" stop-color="#ffffc0"/><stop offset="0.12" stop-color="#ffff20"/><stop offset="0.6" stop-color="#f8f800"/><stop offset="1" stop-color="#a8a800"/></radialGradient>
</defs>
<circle cx="355.6" cy="560.6" r="9.7" fill="url(#gC)"/>
<circle cx="692.5" cy="838.4" r="9.7" fill="url(#gC)"/>
<path d="M698.1 845.3L716.5 868.5" stroke="#949494" stroke-width="8.8" stroke-linecap="round"/>
<path d="M698.8 844.7L717.2 867.9" stroke="#d2d2d2" stroke-width="6.6" stroke-linecap="round"/>
<path d="M699.1 844.5L717.5 867.7" stroke="#f7f7f7" stroke-width="3.8" stroke-linecap="round"/>
<path d="M619.4 788.0L564.5 771.0" stroke="#cb0000" stroke-width="8.8" stroke-linecap="round"/>
<path d="M619.7 787.2L564.7 770.2" stroke="#ff0000" stroke-width="6.8" stroke-linecap="round"/>
<circle cx="619.4" cy="788.0" r="9.7" fill="url(#gC)"/>
<circle cx="526.3" cy="773.3" r="9.6" fill="url(#gO)"/>
<circle cx="716.5" cy="868.5" r="4.7" fill="url(#gH)"/>
<path d="M685.0 836.0L649.0 824.9" stroke="#959595" stroke-width="8.8" stroke-linecap="round"/>
<path d="M685.2 835.2L649.2 824.0" stroke="#d3d3d3" stroke-width="6.6" stroke-linecap="round"/>
<path d="M685.3 834.8L649.3 823.7" stroke="#f9f9f9" stroke-width="3.8" stroke-linecap="round"/>
<path d="M624.6 794.4L649.0 824.9" stroke="#969696" stroke-width="8.8" stroke-linecap="round"/>
<path d="M625.3 793.8L649.7 824.3" stroke="#d4d4d4" stroke-width="6.6" stroke-linecap="round"/>
<path d="M625.6 793.6L650.0 824.1" stroke="#fafafa" stroke-width="3.8" stroke-linecap="round"/>
<circle cx="705.6" cy="596.0" r="4.7" fill="url(#gH)"/>
<circle cx="507.3" cy="491.3" r="4.6" fill="url(#gH)"/>
<circle cx="397.1" cy="913.3" r="4.7" fill="url(#gH)"/>
<circle cx="545.1" cy="691.4" r="4.7" fill="url(#gH)"/>
<path d="M353.1 564.7L341.2 583.6" stroke="#949494" stroke-width="8.8" stroke-linecap="round"/>
<path d="M353.8 565.1L342.0 584.1" stroke="#d1d1d1" stroke-width="6.6" stroke-linecap="round"/>
<path d="M354.2 565.3L342.3 584.3" stroke="#f7f7f7" stroke-width="3.8" stroke-linecap="round"/>
<path d="M532.8 772.9L564.5 771.0" stroke="#6d6d6d" stroke-width="8.8" stroke-linecap="round"/>
<path d="M532.8 772.0L564.4 770.1" stroke="#9a9a9a" stroke-width="6.6" stroke-linecap="round"/>
<path d="M532.8 771.6L564.4 769.7" stroke="#b6b6b6" stroke-width="3.8" stroke-linecap="round"/>
<circle cx="649.0" cy="824.9" r="9.7" fill="url(#gC)"/>
<path d="M707.6 599.1L724.2 624.7" stroke="#959595" stroke-width="8.8" stroke-linecap="round"/>
<path d="M708.4 598.6L725.0 624.3" stroke="#d3d3d3" stroke-width="6.6" stroke-linecap="round"/>
<path d="M708.7 598.4L725.3 624.0" stroke="#f9f9f9" stroke-width="3.8" stroke-linecap="round"/>
<path d="M397.5 909.2L400.4 876.7" stroke="#696969" stroke-width="8.8" stroke-linecap="round"/>
<path d="M398.4 909.3L401.3 876.8" stroke="#959595" stroke-width="6.6" stroke-linecap="round"/>
<path d="M398.8 909.3L401.7 876.8" stroke="#afafaf" stroke-width="3.8" stroke-linecap="round"/>
<circle cx="439.0" cy="748.1" r="4.7" fill="url(#gH)"/>
<path d="M547.7 694.0L566.5 713.0" stroke="#939393" stroke-width="8.8" stroke-linecap="round"/>
<path d="M548.4 693.4L567.1 712.4" stroke="#d0d0d0" stroke-width="6.6" stroke-linecap="round"/>
<path d="M548.6 693.1L567.4 712.1" stroke="#f5f5f5" stroke-width="3.8" stroke-linecap="round"/>
<circle cx="253.0" cy="621.0" r="4.7" fill="url(#gH)"/>
<circle cx="400.4" cy="876.7" r="9.7" fill="url(#gC)"/>
<path d="M408.6 873.1L438.5 860.0" stroke="#7a7a7a" stroke-width="8.8" stroke-linecap="round"/>
<path d="M408.2 872.3L438.1 859.2" stroke="#acacac" stroke-width="6.6" stroke-linecap="round"/>
<path d="M408.1 871.9L438.0 858.8" stroke="#cbcbcb" stroke-width="3.8" stroke-linecap="round"/>
<circle cx="438.5" cy="860.0" r="4.7" fill="url(#gH)"/>
<path d="M252.5 616.8L248.5 582.2" stroke="#777777" stroke-width="8.8" stroke-linecap="round"/>
<path d="M253.4 616.7L249.4 582.1" stroke="#a8a8a8" stroke-width="6.6" stroke-linecap="round"/>
<path d="M253.8 616.6L249.8 582.1" stroke="#c7c7c7" stroke-width="3.8" stroke-linecap="round"/>
<path d="M394.2 870.5L372.9 849.4" stroke="#929292" stroke-width="8.8" stroke-linecap="round"/>
<path d="M394.8 869.9L373.5 848.8" stroke="#cecece" stroke-width="6.6" stroke-linecap="round"/>
<path d="M395.1 869.6L373.8 848.5" stroke="#f3f3f3" stroke-width="3.8" stroke-linecap="round"/>
<circle cx="764.0" cy="502.7" r="4.7" fill="url(#gH)"/>
<circle cx="724.2" cy="624.7" r="9.7" fill="url(#gC)"/>
<circle cx="248.5" cy="582.2" r="9.7" fill="url(#gC)"/>
<path d="M732.2 620.9L757.9 608.6" stroke="#757575" stroke-width="8.8" stroke-linecap="round"/>
<path d="M731.8 620.1L757.5 607.8" stroke="#a6a6a6" stroke-width="6.6" stroke-linecap="round"/>
<path d="M731.7 619.7L757.3 607.4" stroke="#c4c4c4" stroke-width="3.8" stroke-linecap="round"/>
<path d="M564.5 771.0L551.6 805.3" stroke="#969696" stroke-width="8.8" stroke-linecap="round"/>
<path d="M565.3 771.3L552.4 805.6" stroke="#d4d4d4" stroke-width="6.6" stroke-linecap="round"/>
<path d="M565.7 771.5L552.8 805.8" stroke="#fafafa" stroke-width="3.8" stroke-linecap="round"/>
<path d="M575.0 710.2L603.9 700.5" stroke="#7e7e7e" stroke-width="8.8" stroke-linecap="round"/>
<path d="M574.7 709.3L603.6 699.6" stroke="#b2b2b2" stroke-width="6.6" stroke-linecap="round"/>
<path d="M574.6 708.9L603.5 699.3" stroke="#d2d2d2" stroke-width="3.8" stroke-linecap="round"/>
<path d="M566.2 721.9L564.5 771.0" stroke="#7b7b7b" stroke-width="8.8" stroke-linecap="round"/>
<path d="M567.1 721.9L565.4 771.0" stroke="#adadad" stroke-width="6.6" stroke-linecap="round"/>
<path d="M567.5 722.0L565.8 771.0" stroke="#cccccc" stroke-width="3.8" stroke-linecap="round"/>
<circle cx="757.9" cy="608.6" r="4.7" fill="url(#gH)"/>
<circle cx="372.9" cy="849.4" r="4.7" fill="url(#gH)"/>
<circle cx="564.5" cy="771.0" r="9.2" fill="url(#gS)"/>
<circle cx="566.5" cy="713.0" r="9.7" fill="url(#gN)"/>
<circle cx="603.9" cy="700.5" r="4.7" fill="url(#gH)"/>
<path d="M726.7 633.2L734.5 659.1" stroke="#8d8d8d" stroke-width="8.8" stroke-linecap="round"/>
<path d="M727.6 632.9L735.4 658.8" stroke="#c7c7c7" stroke-width="6.6" stroke-linecap="round"/>
<path d="M728.0 632.8L735.7 658.7" stroke="#ebebeb" stroke-width="3.8" stroke-linecap="round"/>
<circle cx="414.7" cy="634.3" r="9.7" fill="url(#gC)"/>
<circle cx="734.5" cy="659.1" r="4.7" fill="url(#gH)"/>
<circle cx="227.3" cy="704.6" r="4.7" fill="url(#gH)"/>
<path d="M247.6 574.0L245.8 555.4" stroke="#6d6d6d" stroke-width="8.8" stroke-linecap="round"/>
<path d="M248.5 573.9L246.7 555.3" stroke="#9a9a9a" stroke-width="6.6" stroke-linecap="round"/>
<path d="M248.9 573.9L247.1 555.3" stroke="#b6b6b6" stroke-width="3.8" stroke-linecap="round"/>
<circle cx="341.2" cy="583.6" r="9.7" fill="url(#gC)"/>
<path d="M437.0 745.7L420.0 725.4" stroke="#7d7d7d" stroke-width="8.8" stroke-linecap="round"/>
<path d="M437.7 745.2L420.7 724.8" stroke="#b0b0b0" stroke-width="6.6" stroke-linecap="round"/>
<path d="M438.0 744.9L421.0 724.6" stroke="#d0d0d0" stroke-width="3.8" stroke-linecap="round"/>
<circle cx="208.5" cy="714.8" r="4.7" fill="url(#gH)"/>
<circle cx="835.4" cy="714.8" r="4.6" fill="url(#gH)"/>
<circle cx="236.9" cy="799.6" r="4.7" fill="url(#gH)"/>
<circle cx="381.0" cy="719.2" r="4.7" fill="url(#gH)"/>
<path d="M646.6 829.0L634.1 850.6" stroke="#ca0000" stroke-width="8.8" stroke-linecap="round"/>
<path d="M647.3 829.4L634.8 851.0" stroke="#ff0000" stroke-width="6.8" stroke-linecap="round"/>
<circle cx="872.7" cy="555.4" r="4.6" fill="url(#gH)"/>
<circle cx="245.8" cy="555.4" r="4.7" fill="url(#gH)"/>
<path d="M762.1 500.8L746.6 485.0" stroke="#7d7d7d" stroke-width="8.8" stroke-linecap="round"/>
<path d="M762.7 500.1L747.2 484.4" stroke="#b1b1b1" stroke-width="6.6" stroke-linecap="round"/>
<path d="M763.0 499.8L747.5 484.1" stroke="#d1d1d1" stroke-width="3.8" stroke-linecap="round"/>
<path d="M407.1 631.9L371.0 620.4" stroke="#959595" stroke-width="8.8" stroke-linecap="round"/>
<path d="M407.4 631.0L371.3 619.5" stroke="#d3d3d3" stroke-width="6.6" stroke-linecap="round"/>
<path d="M407.5 630.6L371.4 619.2" stroke="#f9f9f9" stroke-width="3.8" stroke-linecap="round"/>
<path d="M419.7 640.8L446.3 675.3" stroke="#cd0000" stroke-width="8.8" stroke-linecap="round"/>
<path d="M420.3 640.3L446.9 674.8" stroke="#ff0000" stroke-width="6.8" stroke-linecap="round"/>
<circle cx="304.6" cy="849.9" r="4.7" fill="url(#gH)"/>
<path d="M385.1 719.9L420.0 725.4" stroke="#868686" stroke-width="8.8" stroke-linecap="round"/>
<path d="M385.2 719.0L420.2 724.5" stroke="#bdbdbd" stroke-width="6.6" stroke-linecap="round"/>
<path d="M385.3 718.6L420.2 724.1" stroke="#dfdfdf" stroke-width="3.8" stroke-linecap="round"/>
<path d="M346.4 590.0L371.0 620.4" stroke="#969696" stroke-width="8.8" stroke-linecap="round"/>
<path d="M347.1 589.5L371.7 619.8" stroke="#d4d4d4" stroke-width="6.6" stroke-linecap="round"/>
<path d="M347.4 589.2L372.0 619.6" stroke="#fafafa" stroke-width="3.8" stroke-linecap="round"/>
<path d="M255.5 580.1L293.3 568.5" stroke="#666666" stroke-width="8.8" stroke-linecap="round"/>
<path d="M255.3 579.2L293.1 567.6" stroke="#909090" stroke-width="6.6" stroke-linecap="round"/>
<path d="M255.2 578.8L292.9 567.3" stroke="#aaaaaa" stroke-width="3.8" stroke-linecap="round"/>
<circle cx="715.2" cy="704.9" r="4.7" fill="url(#gH)"/>
<path d="M333.7 581.3L293.3 568.5" stroke="#cc0000" stroke-width="8.8" stroke-linecap="round"/>
<path d="M333.9 580.5L293.6 567.7" stroke="#ff0000" stroke-width="6.8" stroke-linecap="round"/>
<circle cx="476.3" cy="534.0" r="4.7" fill="url(#gH)"/>
<path d="M228.4 706.8L237.0 723.4" stroke="#8e8e8e" stroke-width="8.8" stroke-linecap="round"/>
<path d="M229.2 706.4L237.8 723.0" stroke="#c9c9c9" stroke-width="6.6" stroke-linecap="round"/>
<path d="M229.6 706.2L238.1 722.8" stroke="#ededed" stroke-width="3.8" stroke-linecap="round"/>
<path d="M718.7 627.1L689.2 639.6" stroke="#969696" stroke-width="8.8" stroke-linecap="round"/>
<path d="M718.4 626.3L688.9 638.8" stroke="#d4d4d4" stroke-width="6.6" stroke-linecap="round"/>
<path d="M718.2 625.9L688.7 638.4" stroke="#f9f9f9" stroke-width="3.8" stroke-linecap="round"/>
<path d="M211.5 715.7L237.0 723.4" stroke="#7c7c7c" stroke-width="8.8" stroke-linecap="round"/>
<path d="M211.7 714.8L237.2 722.6" stroke="#b0b0b0" stroke-width="6.6" stroke-linecap="round"/>
<path d="M211.9 714.4L237.3 722.2" stroke="#cfcfcf" stroke-width="3.8" stroke-linecap="round"/>
<circle cx="420.0" cy="725.4" r="9.7" fill="url(#gC)"/>
<circle cx="273.8" cy="710.9" r="4.7" fill="url(#gH)"/>
<path d="M399.0 878.2L391.2 886.3" stroke="#878787" stroke-width="8.8" stroke-linecap="round"/>
<path d="M398.3 877.6L390.5 885.7" stroke="#bfbfbf" stroke-width="6.6" stroke-linecap="round"/>
<path d="M398.0 877.3L390.3 885.4" stroke="#e1e1e1" stroke-width="3.8" stroke-linecap="round"/>
<circle cx="483.9" cy="676.0" r="4.7" fill="url(#gH)"/>
<circle cx="708.1" cy="500.8" r="4.7" fill="url(#gH)"/>
<circle cx="785.2" cy="790.4" r="4.6" fill="url(#gH)"/>
<path d="M424.2 717.5L446.3 675.3" stroke="#6c6c6c" stroke-width="8.8" stroke-linecap="round"/>
<path d="M425.0 717.9L447.1 675.7" stroke="#989898" stroke-width="6.6" stroke-linecap="round"/>
<path d="M425.3 718.1L447.4 675.9" stroke="#b3b3b3" stroke-width="3.8" stroke-linecap="round"/>
<path d="M479.6 675.9L446.3 675.3" stroke="#8d8d8d" stroke-width="8.8" stroke-linecap="round"/>
<path d="M479.6 675.0L446.3 674.4" stroke="#c8c8c8" stroke-width="6.6" stroke-linecap="round"/>
<path d="M479.6 674.6L446.3 674.0" stroke="#ebebeb" stroke-width="3.8" stroke-linecap="round"/>
<circle cx="371.0" cy="620.4" r="9.7" fill="url(#gC)"/>
<circle cx="446.3" cy="675.3" r="9.7" fill="url(#gC)"/>
<path d="M712.1 499.2L746.6 485.0" stroke="#737373" stroke-width="8.8" stroke-linecap="round"/>
<path d="M711.7 498.3L746.2 484.2" stroke="#a3a3a3" stroke-width="6.6" stroke-linecap="round"/>
<path d="M711.6 498.0L746.1 483.8" stroke="#c0c0c0" stroke-width="3.8" stroke-linecap="round"/>
<path d="M237.0 797.5L238.2 779.5" stroke="#626262" stroke-width="8.8" stroke-linecap="round"/>
<path d="M237.9 797.5L239.1 779.6" stroke="#8a8a8a" stroke-width="6.6" stroke-linecap="round"/>
<path d="M238.3 797.6L239.5 779.6" stroke="#a3a3a3" stroke-width="3.8" stroke-linecap="round"/>
<path d="M269.9 712.3L237.0 723.4" stroke="#8d8d8d" stroke-width="8.8" stroke-linecap="round"/>
<path d="M269.6 711.4L236.7 722.6" stroke="#c8c8c8" stroke-width="6.6" stroke-linecap="round"/>
<path d="M269.5 711.0L236.5 722.2" stroke="#ececec" stroke-width="3.8" stroke-linecap="round"/>
<circle cx="636.4" cy="907.0" r="9.7" fill="url(#gC)"/>
<circle cx="746.6" cy="485.0" r="9.7" fill="url(#gC)"/>
<circle cx="293.3" cy="568.5" r="9.7" fill="url(#gC)"/>
<path d="M712.6 703.9L691.5 696.0" stroke="#8c8c8c" stroke-width="8.8" stroke-linecap="round"/>
<path d="M712.9 703.1L691.8 695.2" stroke="#c5c5c5" stroke-width="6.6" stroke-linecap="round"/>
<path d="M713.0 702.7L691.9 694.8" stroke="#e9e9e9" stroke-width="3.8" stroke-linecap="round"/>
<path d="M636.0 898.1L634.1 850.6" stroke="#787878" stroke-width="8.8" stroke-linecap="round"/>
<path d="M636.9 898.1L635.0 850.6" stroke="#aaaaaa" stroke-width="6.6" stroke-linecap="round"/>
<path d="M637.3 898.1L635.4 850.5" stroke="#c8c8c8" stroke-width="3.8" stroke-linecap="round"/>
<path d="M305.8 848.0L315.9 831.4" stroke="#5b5b5b" stroke-width="8.8" stroke-linecap="round"/>
<path d="M306.5 848.5L316.7 831.9" stroke="#818181" stroke-width="6.6" stroke-linecap="round"/>
<path d="M306.9 848.7L317.0 832.1" stroke="#989898" stroke-width="3.8" stroke-linecap="round"/>
<circle cx="634.1" cy="850.6" r="9.7" fill="url(#gC)"/>
<circle cx="650.4" cy="627.3" r="4.7" fill="url(#gH)"/>
<circle cx="237.0" cy="723.4" r="9.7" fill="url(#gC)"/>
<path d="M293.1 559.7L292.1 512.4" stroke="#747474" stroke-width="8.8" stroke-linecap="round"/>
<path d="M294.0 559.7L293.0 512.4" stroke="#a4a4a4" stroke-width="6.6" stroke-linecap="round"/>
<path d="M294.4 559.7L293.4 512.4" stroke="#c2c2c2" stroke-width="3.8" stroke-linecap="round"/>
<path d="M476.2 532.0L475.1 514.4" stroke="#656565" stroke-width="8.8" stroke-linecap="round"/>
<path d="M477.1 531.9L476.0 514.3" stroke="#8e8e8e" stroke-width="6.6" stroke-linecap="round"/>
<path d="M477.5 531.9L476.4 514.3" stroke="#a8a8a8" stroke-width="3.8" stroke-linecap="round"/>
<path d="M606.7 594.3L619.6 560.0" stroke="#585858" stroke-width="8.8" stroke-linecap="round"/>
<path d="M607.5 594.6L620.4 560.3" stroke="#7d7d7d" stroke-width="6.6" stroke-linecap="round"/>
<path d="M607.9 594.8L620.8 560.5" stroke="#939393" stroke-width="3.8" stroke-linecap="round"/>
<path d="M625.7 847.9L595.3 838.3" stroke="#959595" stroke-width="8.8" stroke-linecap="round"/>
<path d="M626.0 847.1L595.6 837.4" stroke="#d3d3d3" stroke-width="6.6" stroke-linecap="round"/>
<path d="M626.1 846.7L595.7 837.1" stroke="#f9f9f9" stroke-width="3.8" stroke-linecap="round"/>
<circle cx="606.7" cy="594.3" r="9.6" fill="url(#gO)"/>
<circle cx="551.6" cy="805.3" r="9.6" fill="url(#gO)"/>
<path d="M654.5 628.6L689.2 639.6" stroke="#8f8f8f" stroke-width="8.8" stroke-linecap="round"/>
<path d="M654.7 627.7L689.5 638.7" stroke="#cbcbcb" stroke-width="6.6" stroke-linecap="round"/>
<path d="M654.9 627.4L689.6 638.4" stroke="#efefef" stroke-width="3.8" stroke-linecap="round"/>
<path d="M420.3 729.7L421.2 745.0" stroke="#909090" stroke-width="8.8" stroke-linecap="round"/>
<path d="M421.2 729.6L422.1 745.0" stroke="#cbcbcb" stroke-width="6.6" stroke-linecap="round"/>
<path d="M421.6 729.6L422.5 745.0" stroke="#f0f0f0" stroke-width="3.8" stroke-linecap="round"/>
<path d="M237.2 732.2L238.2 779.5" stroke="#858585" stroke-width="8.8" stroke-linecap="round"/>
<path d="M238.1 732.2L239.1 779.5" stroke="#bcbcbc" stroke-width="6.6" stroke-linecap="round"/>
<path d="M238.5 732.2L239.5 779.5" stroke="#dedede" stroke-width="3.8" stroke-linecap="round"/>
<circle cx="292.1" cy="512.4" r="9.7" fill="url(#gC)"/>
<circle cx="595.3" cy="838.3" r="4.7" fill="url(#gH)"/>
<circle cx="689.2" cy="639.6" r="9.7" fill="url(#gC)"/>
<path d="M368.5 624.4L359.7 638.9" stroke="#949494" stroke-width="8.8" stroke-linecap="round"/>
<path d="M369.3 624.9L360.5 639.4" stroke="#d1d1d1" stroke-width="6.6" stroke-linecap="round"/>
<path d="M369.6 625.1L360.8 639.6" stroke="#f7f7f7" stroke-width="3.8" stroke-linecap="round"/>
<path d="M689.6 648.5L691.5 696.0" stroke="#828282" stroke-width="8.8" stroke-linecap="round"/>
<path d="M690.5 648.4L692.4 696.0" stroke="#b8b8b8" stroke-width="6.6" stroke-linecap="round"/>
<path d="M690.9 648.4L692.8 696.0" stroke="#d9d9d9" stroke-width="3.8" stroke-linecap="round"/>
<path d="M752.0 487.0L770.3 493.9" stroke="#7c7c7c" stroke-width="8.8" stroke-linecap="round"/>
<path d="M752.3 486.2L770.6 493.1" stroke="#afafaf" stroke-width="6.6" stroke-linecap="round"/>
<path d="M752.5 485.8L770.8 492.7" stroke="#cfcfcf" stroke-width="3.8" stroke-linecap="round"/>
<circle cx="238.2" cy="779.5" r="9.7" fill="url(#gC)"/>
<circle cx="691.5" cy="696.0" r="9.7" fill="url(#gC)"/>
<path d="M300.1 509.7L328.9 499.9" stroke="#6e6e6e" stroke-width="8.8" stroke-linecap="round"/>
<path d="M299.8 508.9L328.6 499.1" stroke="#9b9b9b" stroke-width="6.6" stroke-linecap="round"/>
<path d="M299.6 508.5L328.4 498.7" stroke="#b7b7b7" stroke-width="3.8" stroke-linecap="round"/>
<path d="M293.0 572.9L292.0 588.6" stroke="#919191" stroke-width="8.8" stroke-linecap="round"/>
<path d="M293.9 572.9L292.9 588.6" stroke="#cdcdcd" stroke-width="6.6" stroke-linecap="round"/>
<path d="M294.3 572.9L293.3 588.7" stroke="#f2f2f2" stroke-width="3.8" stroke-linecap="round"/>
<path d="M683.3 699.4L653.0 711.8" stroke="#848484" stroke-width="8.8" stroke-linecap="round"/>
<path d="M683.0 698.5L652.7 711.0" stroke="#bababa" stroke-width="6.6" stroke-linecap="round"/>
<path d="M682.8 698.2L652.5 710.6" stroke="#dcdcdc" stroke-width="3.8" stroke-linecap="round"/>
<circle cx="391.2" cy="886.3" r="9.7" fill="url(#gC)"/>
<circle cx="315.9" cy="831.4" r="9.7" fill="url(#gC)"/>
<path d="M400.1 886.5L428.8 887.0" stroke="#888888" stroke-width="8.8" stroke-linecap="round"/>
<path d="M400.1 885.6L428.8 886.1" stroke="#c0c0c0" stroke-width="6.6" stroke-linecap="round"/>
<path d="M400.1 885.2L428.8 885.7" stroke="#e2e2e2" stroke-width="3.8" stroke-linecap="round"/>
<circle cx="653.0" cy="711.8" r="4.7" fill="url(#gH)"/>
<circle cx="840.3" cy="579.4" r="4.6" fill="url(#gH)"/>
<circle cx="428.8" cy="887.0" r="4.7" fill="url(#gH)"/>
<path d="M447.7 673.8L455.5 665.7" stroke="#6a6a6a" stroke-width="8.8" stroke-linecap="round"/>
<path d="M447.1 673.1L454.9 665.1" stroke="#969696" stroke-width="6.6" stroke-linecap="round"/>
<path d="M446.8 672.9L454.6 664.8" stroke="#b0b0b0" stroke-width="3.8" stroke-linecap="round"/>
<circle cx="328.9" cy="499.9" r="4.7" fill="url(#gH)"/>
<circle cx="475.1" cy="514.4" r="9.7" fill="url(#gC)"/>
<path d="M285.9 510.5L263.6 503.8" stroke="#909090" stroke-width="8.8" stroke-linecap="round"/>
<path d="M286.1 509.7L263.8 502.9" stroke="#cccccc" stroke-width="6.6" stroke-linecap="round"/>
<path d="M286.3 509.3L264.0 502.5" stroke="#f0f0f0" stroke-width="3.8" stroke-linecap="round"/>
<path d="M639.6 848.3L669.1 835.7" stroke="#606060" stroke-width="8.8" stroke-linecap="round"/>
<path d="M639.3 847.4L668.8 834.9" stroke="#878787" stroke-width="6.6" stroke-linecap="round"/>
<path d="M639.1 847.1L668.6 834.6" stroke="#a0a0a0" stroke-width="3.8" stroke-linecap="round"/>
<path d="M289.7 507.9L282.4 493.6" stroke="#717171" stroke-width="8.8" stroke-linecap="round"/>
<path d="M290.5 507.5L283.2 493.2" stroke="#9f9f9f" stroke-width="6.6" stroke-linecap="round"/>
<path d="M290.9 507.3L283.6 493.0" stroke="#bcbcbc" stroke-width="3.8" stroke-linecap="round"/>
<circle cx="421.2" cy="745.0" r="4.7" fill="url(#gH)"/>
<path d="M245.8 781.9L286.1 794.6" stroke="#b60000" stroke-width="8.8" stroke-linecap="round"/>
<path d="M246.0 781.1L286.4 793.9" stroke="#e90000" stroke-width="6.8" stroke-linecap="round"/>
<circle cx="770.3" cy="493.9" r="4.7" fill="url(#gH)"/>
<path d="M231.2 781.7L193.4 793.2" stroke="#959595" stroke-width="8.8" stroke-linecap="round"/>
<path d="M230.9 780.8L193.1 792.4" stroke="#d3d3d3" stroke-width="6.6" stroke-linecap="round"/>
<path d="M230.8 780.4L193.0 792.0" stroke="#f9f9f9" stroke-width="3.8" stroke-linecap="round"/>
<path d="M310.7 825.0L286.1 794.6" stroke="#888888" stroke-width="8.8" stroke-linecap="round"/>
<path d="M311.4 824.4L286.8 794.1" stroke="#c0c0c0" stroke-width="6.6" stroke-linecap="round"/>
<path d="M311.7 824.2L287.1 793.8" stroke="#e2e2e2" stroke-width="3.8" stroke-linecap="round"/>
<path d="M466.7 513.0L436.1 508.2" stroke="#959595" stroke-width="8.8" stroke-linecap="round"/>
<path d="M466.8 512.2L436.2 507.3" stroke="#d2d2d2" stroke-width="6.6" stroke-linecap="round"/>
<path d="M466.9 511.8L436.3 506.9" stroke="#f8f8f8" stroke-width="3.8" stroke-linecap="round"/>
<circle cx="359.7" cy="638.9" r="4.7" fill="url(#gH)"/>
<path d="M386.2 879.8L359.6 845.3" stroke="#b70000" stroke-width="8.8" stroke-linecap="round"/>
<path d="M386.8 879.3L360.2 844.8" stroke="#ea0000" stroke-width="6.8" stroke-linecap="round"/>
<path d="M323.5 833.8L359.6 845.3" stroke="#868686" stroke-width="8.8" stroke-linecap="round"/>
<path d="M323.8 833.0L359.9 844.4" stroke="#bdbdbd" stroke-width="6.6" stroke-linecap="round"/>
<path d="M323.9 832.6L360.0 844.1" stroke="#dfdfdf" stroke-width="3.8" stroke-linecap="round"/>
<path d="M695.4 700.0L708.9 713.7" stroke="#8a8a8a" stroke-width="8.8" stroke-linecap="round"/>
<path d="M696.1 699.4L709.5 713.1" stroke="#c3c3c3" stroke-width="6.6" stroke-linecap="round"/>
<path d="M696.4 699.1L709.8 712.8" stroke="#e6e6e6" stroke-width="3.8" stroke-linecap="round"/>
<circle cx="817.6" cy="766.4" r="4.6" fill="url(#gH)"/>
<circle cx="190.7" cy="766.4" r="4.7" fill="url(#gH)"/>
<path d="M691.6 635.5L704.1 613.9" stroke="#7d0000" stroke-width="8.8" stroke-linecap="round"/>
<path d="M692.2 635.9L704.8 614.3" stroke="#9f0000" stroke-width="6.8" stroke-linecap="round"/>
<circle cx="436.1" cy="508.2" r="4.7" fill="url(#gH)"/>
<circle cx="292.0" cy="588.6" r="4.7" fill="url(#gH)"/>
<circle cx="263.6" cy="503.8" r="4.7" fill="url(#gH)"/>
<circle cx="890.5" cy="503.8" r="4.6" fill="url(#gH)"/>
<path d="M479.3 519.3L494.1 537.1" stroke="#8f8f8f" stroke-width="8.8" stroke-linecap="round"/>
<path d="M479.9 518.7L494.8 536.6" stroke="#cbcbcb" stroke-width="6.6" stroke-linecap="round"/>
<path d="M480.3 518.5L495.1 536.3" stroke="#efefef" stroke-width="3.8" stroke-linecap="round"/>
<circle cx="286.1" cy="794.6" r="9.7" fill="url(#gC)"/>
<path d="M191.1 770.4L193.4 793.2" stroke="#909090" stroke-width="8.8" stroke-linecap="round"/>
<path d="M192.0 770.3L194.3 793.1" stroke="#cccccc" stroke-width="6.6" stroke-linecap="round"/>
<path d="M192.4 770.3L194.7 793.1" stroke="#f1f1f1" stroke-width="3.8" stroke-linecap="round"/>
<circle cx="282.4" cy="493.6" r="4.7" fill="url(#gH)"/>
<circle cx="679.4" cy="870.1" r="4.7" fill="url(#gH)"/>
<circle cx="359.6" cy="845.3" r="9.7" fill="url(#gC)"/>
<path d="M619.6 560.0L674.5 577.0" stroke="#b30000" stroke-width="8.8" stroke-linecap="round"/>
<path d="M619.8 559.2L674.8 576.2" stroke="#e40000" stroke-width="6.8" stroke-linecap="round"/>
<path d="M678.2 866.0L669.1 835.7" stroke="#808080" stroke-width="8.8" stroke-linecap="round"/>
<path d="M679.0 865.8L670.0 835.5" stroke="#b4b4b4" stroke-width="6.6" stroke-linecap="round"/>
<path d="M679.4 865.6L670.4 835.4" stroke="#d5d5d5" stroke-width="3.8" stroke-linecap="round"/>
<path d="M630.1 499.2L659.0 489.5" stroke="#7e7e7e" stroke-width="8.8" stroke-linecap="round"/>
<path d="M629.8 498.3L658.7 488.6" stroke="#b2b2b2" stroke-width="6.6" stroke-linecap="round"/>
<path d="M629.7 497.9L658.6 488.3" stroke="#d2d2d2" stroke-width="3.8" stroke-linecap="round"/>
<path d="M621.3 510.9L619.6 560.0" stroke="#7b7b7b" stroke-width="8.8" stroke-linecap="round"/>
<path d="M622.2 510.9L620.5 560.0" stroke="#adadad" stroke-width="6.6" stroke-linecap="round"/>
<path d="M622.6 511.0L620.9 560.0" stroke="#cccccc" stroke-width="3.8" stroke-linecap="round"/>
<circle cx="619.6" cy="560.0" r="9.2" fill="url(#gS)"/>
<circle cx="621.6" cy="502.0" r="9.7" fill="url(#gN)"/>
<circle cx="659.0" cy="489.5" r="4.7" fill="url(#gH)"/>
<circle cx="548.8" cy="911.5" r="4.6" fill="url(#gH)"/>
<circle cx="702.8" cy="819.6" r="4.7" fill="url(#gH)"/>
<circle cx="428.0" cy="638.4" r="4.7" fill="url(#gH)"/>
<path d="M698.9 821.5L669.1 835.7" stroke="#7e7e7e" stroke-width="8.8" stroke-linecap="round"/>
<path d="M698.5 820.7L668.7 834.9" stroke="#b2b2b2" stroke-width="6.6" stroke-linecap="round"/>
<path d="M698.4 820.3L668.6 834.6" stroke="#d2d2d2" stroke-width="3.8" stroke-linecap="round"/>
<circle cx="193.4" cy="793.2" r="9.7" fill="url(#gC)"/>
<circle cx="669.1" cy="835.7" r="9.7" fill="url(#gC)"/>
<circle cx="708.9" cy="713.7" r="4.7" fill="url(#gH)"/>
<path d="M431.0 641.4L455.5 665.7" stroke="#969696" stroke-width="8.8" stroke-linecap="round"/>
<path d="M431.7 640.8L456.2 665.1" stroke="#d4d4d4" stroke-width="6.6" stroke-linecap="round"/>
<path d="M431.9 640.5L456.4 664.8" stroke="#fafafa" stroke-width="3.8" stroke-linecap="round"/>
<path d="M194.4 802.0L197.9 832.0" stroke="#898989" stroke-width="8.8" stroke-linecap="round"/>
<path d="M195.3 801.8L198.8 831.9" stroke="#c1c1c1" stroke-width="6.6" stroke-linecap="round"/>
<path d="M195.7 801.8L199.2 831.8" stroke="#e4e4e4" stroke-width="3.8" stroke-linecap="round"/>
<circle cx="493.6" cy="649.0" r="4.7" fill="url(#gH)"/>
<path d="M489.6 650.7L455.5 665.7" stroke="#7c7c7c" stroke-width="8.8" stroke-linecap="round"/>
<path d="M489.3 649.9L455.2 664.9" stroke="#afafaf" stroke-width="6.6" stroke-linecap="round"/>
<path d="M489.1 649.5L455.0 664.5" stroke="#cecece" stroke-width="3.8" stroke-linecap="round"/>
<circle cx="455.5" cy="665.7" r="9.7" fill="url(#gC)"/>
<circle cx="197.9" cy="832.0" r="4.7" fill="url(#gH)"/>
<circle cx="494.1" cy="537.1" r="4.7" fill="url(#gH)"/>
<path d="M454.8 674.2L452.2 702.3" stroke="#898989" stroke-width="8.8" stroke-linecap="round"/>
<path d="M455.7 674.3L453.1 702.4" stroke="#c2c2c2" stroke-width="6.6" stroke-linecap="round"/>
<path d="M456.1 674.3L453.5 702.4" stroke="#e5e5e5" stroke-width="3.8" stroke-linecap="round"/>
<path d="M665.0 829.4L650.5 807.0" stroke="#7e7e7e" stroke-width="8.8" stroke-linecap="round"/>
<path d="M665.7 828.9L651.3 806.5" stroke="#b2b2b2" stroke-width="6.6" stroke-linecap="round"/>
<path d="M666.1 828.7L651.6 806.3" stroke="#d2d2d2" stroke-width="3.8" stroke-linecap="round"/>
<circle cx="704.1" cy="613.9" r="9.7" fill="url(#gC)"/>
<path d="M613.3 560.4L581.4 562.3" stroke="#959595" stroke-width="8.8" stroke-linecap="round"/>
<path d="M613.3 559.5L581.3 561.4" stroke="#d3d3d3" stroke-width="6.6" stroke-linecap="round"/>
<path d="M613.3 559.1L581.3 561.0" stroke="#f9f9f9" stroke-width="3.8" stroke-linecap="round"/>
<path d="M288.6 790.6L300.5 771.6" stroke="#5b5b5b" stroke-width="8.8" stroke-linecap="round"/>
<path d="M289.4 791.1L301.2 772.1" stroke="#818181" stroke-width="6.6" stroke-linecap="round"/>
<path d="M289.7 791.3L301.6 772.3" stroke="#989898" stroke-width="3.8" stroke-linecap="round"/>
<circle cx="490.0" cy="902.4" r="4.6" fill="url(#gH)"/>
<circle cx="452.2" cy="702.3" r="4.7" fill="url(#gH)"/>
<path d="M362.0 841.3L373.6 822.0" stroke="#5b5b5b" stroke-width="8.8" stroke-linecap="round"/>
<path d="M362.8 841.7L374.3 822.5" stroke="#818181" stroke-width="6.6" stroke-linecap="round"/>
<path d="M363.1 841.9L374.7 822.7" stroke="#989898" stroke-width="3.8" stroke-linecap="round"/>
<circle cx="650.5" cy="807.0" r="4.7" fill="url(#gH)"/>
<path d="M698.9 607.5L674.5 577.0" stroke="#878787" stroke-width="8.8" stroke-linecap="round"/>
<path d="M699.6 606.9L675.2 576.4" stroke="#bfbfbf" stroke-width="6.6" stroke-linecap="round"/>
<path d="M700.0 606.7L675.5 576.1" stroke="#e1e1e1" stroke-width="3.8" stroke-linecap="round"/>
<path d="M711.6 616.2L747.6 627.4" stroke="#858585" stroke-width="8.8" stroke-linecap="round"/>
<path d="M711.9 615.4L747.9 626.5" stroke="#bcbcbc" stroke-width="6.6" stroke-linecap="round"/>
<path d="M712.0 615.0L748.0 626.1" stroke="#dedede" stroke-width="3.8" stroke-linecap="round"/>
<circle cx="581.4" cy="562.3" r="9.6" fill="url(#gO)"/>
<circle cx="771.6" cy="657.5" r="4.7" fill="url(#gH)"/>
<circle cx="674.5" cy="577.0" r="9.7" fill="url(#gC)"/>
<path d="M768.9 654.1L747.6 627.4" stroke="#909090" stroke-width="8.8" stroke-linecap="round"/>
<path d="M769.6 653.6L748.3 626.8" stroke="#cccccc" stroke-width="6.6" stroke-linecap="round"/>
<path d="M769.9 653.3L748.6 626.5" stroke="#f0f0f0" stroke-width="3.8" stroke-linecap="round"/>
<circle cx="747.6" cy="627.4" r="9.7" fill="url(#gC)"/>
<circle cx="300.5" cy="771.6" r="9.7" fill="url(#gC)"/>
<path d="M294.9 764.7L276.5 741.5" stroke="#909090" stroke-width="8.8" stroke-linecap="round"/>
<path d="M295.7 764.1L277.2 740.9" stroke="#cccccc" stroke-width="6.6" stroke-linecap="round"/>
<path d="M296.0 763.9L277.5 740.7" stroke="#f0f0f0" stroke-width="3.8" stroke-linecap="round"/>
<path d="M373.6 822.0L428.5 839.0" stroke="#b30000" stroke-width="8.8" stroke-linecap="round"/>
<path d="M373.8 821.3L428.7 838.2" stroke="#e40000" stroke-width="6.8" stroke-linecap="round"/>
<circle cx="373.6" cy="822.0" r="9.7" fill="url(#gC)"/>
<circle cx="466.7" cy="836.7" r="9.6" fill="url(#gO)"/>
<circle cx="276.5" cy="741.5" r="4.7" fill="url(#gH)"/>
<path d="M308.0 774.0L344.0 785.1" stroke="#858585" stroke-width="8.8" stroke-linecap="round"/>
<path d="M308.3 773.1L344.3 784.2" stroke="#bcbcbc" stroke-width="6.6" stroke-linecap="round"/>
<path d="M308.4 772.7L344.4 783.9" stroke="#dedede" stroke-width="3.8" stroke-linecap="round"/>
<path d="M368.4 815.6L344.0 785.1" stroke="#878787" stroke-width="8.8" stroke-linecap="round"/>
<path d="M369.2 815.1L344.7 784.5" stroke="#bfbfbf" stroke-width="6.6" stroke-linecap="round"/>
<path d="M369.5 814.8L345.1 784.3" stroke="#e1e1e1" stroke-width="3.8" stroke-linecap="round"/>
<circle cx="397.6" cy="592.0" r="4.7" fill="url(#gH)"/>
<path d="M677.0 572.9L688.5 553.7" stroke="#5b5b5b" stroke-width="8.8" stroke-linecap="round"/>
<path d="M677.7 573.4L689.3 554.2" stroke="#818181" stroke-width="6.6" stroke-linecap="round"/>
<path d="M678.1 573.6L689.6 554.4" stroke="#989898" stroke-width="3.8" stroke-linecap="round"/>
<circle cx="595.9" cy="696.7" r="4.7" fill="url(#gH)"/>
<circle cx="558.1" cy="496.6" r="4.6" fill="url(#gH)"/>
<path d="M750.1 623.3L762.0 604.4" stroke="#5b5b5b" stroke-width="8.8" stroke-linecap="round"/>
<path d="M750.9 623.8L762.7 604.8" stroke="#818181" stroke-width="6.6" stroke-linecap="round"/>
<path d="M751.2 624.0L763.1 605.0" stroke="#989898" stroke-width="3.8" stroke-linecap="round"/>
<path d="M460.2 837.1L428.5 839.0" stroke="#959595" stroke-width="8.8" stroke-linecap="round"/>
<path d="M460.1 836.2L428.4 838.1" stroke="#d3d3d3" stroke-width="6.6" stroke-linecap="round"/>
<path d="M460.1 835.8L428.4 837.7" stroke="#f9f9f9" stroke-width="3.8" stroke-linecap="round"/>
<circle cx="344.0" cy="785.1" r="9.7" fill="url(#gC)"/>
<path d="M395.6 588.9L379.0 563.3" stroke="#7e7e7e" stroke-width="8.8" stroke-linecap="round"/>
<path d="M396.4 588.4L379.7 562.8" stroke="#b2b2b2" stroke-width="6.6" stroke-linecap="round"/>
<path d="M396.7 588.2L380.1 562.5" stroke="#d2d2d2" stroke-width="3.8" stroke-linecap="round"/>
<path d="M595.5 700.8L592.6 733.3" stroke="#898989" stroke-width="8.8" stroke-linecap="round"/>
<path d="M596.4 700.9L593.5 733.4" stroke="#c2c2c2" stroke-width="6.6" stroke-linecap="round"/>
<path d="M596.8 700.9L593.9 733.4" stroke="#e5e5e5" stroke-width="3.8" stroke-linecap="round"/>
<circle cx="554.0" cy="861.9" r="4.7" fill="url(#gH)"/>
<circle cx="850.2" cy="567.0" r="4.7" fill="url(#gH)"/>
<circle cx="592.6" cy="733.3" r="9.7" fill="url(#gC)"/>
<path d="M584.4 736.9L554.5 750.0" stroke="#7c7c7c" stroke-width="8.8" stroke-linecap="round"/>
<path d="M584.0 736.1L554.1 749.2" stroke="#afafaf" stroke-width="6.6" stroke-linecap="round"/>
<path d="M583.9 735.7L554.0 748.8" stroke="#cecece" stroke-width="3.8" stroke-linecap="round"/>
<circle cx="554.5" cy="750.0" r="4.7" fill="url(#gH)"/>
<path d="M850.7 571.2L854.7 605.8" stroke="#898989" stroke-width="8.8" stroke-linecap="round"/>
<path d="M851.6 571.1L855.6 605.7" stroke="#c1c1c1" stroke-width="6.6" stroke-linecap="round"/>
<path d="M852.0 571.1L856.0 605.6" stroke="#e4e4e4" stroke-width="3.8" stroke-linecap="round"/>
<path d="M598.8 739.5L620.1 760.6" stroke="#969696" stroke-width="8.8" stroke-linecap="round"/>
<path d="M599.4 738.8L620.7 760.0" stroke="#d4d4d4" stroke-width="6.6" stroke-linecap="round"/>
<path d="M599.7 738.6L621.0 759.7" stroke="#fafafa" stroke-width="3.8" stroke-linecap="round"/>
<circle cx="339.2" cy="685.3" r="4.7" fill="url(#gH)"/>
<circle cx="379.0" cy="563.3" r="9.7" fill="url(#gC)"/>
<circle cx="854.7" cy="605.8" r="9.7" fill="url(#gC)"/>
<path d="M371.0 567.1L345.3 579.4" stroke="#7e7e7e" stroke-width="8.8" stroke-linecap="round"/>
<path d="M370.6 566.3L344.9 578.6" stroke="#b2b2b2" stroke-width="6.6" stroke-linecap="round"/>
<path d="M370.4 565.9L344.7 578.2" stroke="#d2d2d2" stroke-width="3.8" stroke-linecap="round"/>
<path d="M428.5 839.0L441.4 804.7" stroke="#585858" stroke-width="8.8" stroke-linecap="round"/>
<path d="M429.3 839.3L442.2 805.0" stroke="#7d7d7d" stroke-width="6.6" stroke-linecap="round"/>
<path d="M429.7 839.5L442.6 805.2" stroke="#939393" stroke-width="3.8" stroke-linecap="round"/>
<path d="M418.0 899.8L389.1 909.5" stroke="#7e7e7e" stroke-width="8.8" stroke-linecap="round"/>
<path d="M417.8 899.0L388.8 908.6" stroke="#b2b2b2" stroke-width="6.6" stroke-linecap="round"/>
<path d="M417.6 898.6L388.7 908.3" stroke="#d2d2d2" stroke-width="3.8" stroke-linecap="round"/>
<path d="M426.8 888.1L428.5 839.0" stroke="#7b7b7b" stroke-width="8.8" stroke-linecap="round"/>
<path d="M427.7 888.1L429.4 839.0" stroke="#adadad" stroke-width="6.6" stroke-linecap="round"/>
<path d="M428.1 888.1L429.8 839.0" stroke="#cccccc" stroke-width="3.8" stroke-linecap="round"/>
<circle cx="345.3" cy="579.4" r="4.7" fill="url(#gH)"/>
<circle cx="428.5" cy="839.0" r="9.2" fill="url(#gS)"/>
<circle cx="426.5" cy="897.0" r="9.7" fill="url(#gN)"/>
<circle cx="389.1" cy="909.5" r="4.7" fill="url(#gH)"/>
<circle cx="499.3" cy="487.5" r="4.6" fill="url(#gH)"/>
<circle cx="620.1" cy="760.6" r="4.7" fill="url(#gH)"/>
<path d="M376.5 554.8L368.7 528.9" stroke="#808080" stroke-width="8.8" stroke-linecap="round"/>
<path d="M377.3 554.6L369.6 528.6" stroke="#b4b4b4" stroke-width="6.6" stroke-linecap="round"/>
<path d="M377.7 554.4L369.9 528.5" stroke="#d5d5d5" stroke-width="3.8" stroke-linecap="round"/>
<circle cx="688.5" cy="553.7" r="9.7" fill="url(#gC)"/>
<circle cx="368.7" cy="528.9" r="4.7" fill="url(#gH)"/>
<circle cx="765.7" cy="905.4" r="4.7" fill="url(#gH)"/>
<path d="M855.6 614.0L857.4 632.6" stroke="#909090" stroke-width="8.8" stroke-linecap="round"/>
<path d="M856.4 613.9L858.3 632.5" stroke="#cccccc" stroke-width="6.6" stroke-linecap="round"/>
<path d="M856.8 613.9L858.7 632.5" stroke="#f1f1f1" stroke-width="3.8" stroke-linecap="round"/>
<circle cx="762.0" cy="604.4" r="9.7" fill="url(#gC)"/>
<path d="M556.0 864.3L573.0 884.6" stroke="#8f8f8f" stroke-width="8.8" stroke-linecap="round"/>
<path d="M556.7 863.7L573.6 884.0" stroke="#cbcbcb" stroke-width="6.6" stroke-linecap="round"/>
<path d="M557.0 863.4L574.0 883.8" stroke="#efefef" stroke-width="3.8" stroke-linecap="round"/>
<circle cx="784.5" cy="895.2" r="4.7" fill="url(#gH)"/>
<circle cx="157.6" cy="895.2" r="4.6" fill="url(#gH)"/>
<circle cx="756.1" cy="810.4" r="4.7" fill="url(#gH)"/>
<circle cx="612.0" cy="890.8" r="4.7" fill="url(#gH)"/>
<path d="M346.4 781.0L358.9 759.4" stroke="#7d0000" stroke-width="8.8" stroke-linecap="round"/>
<path d="M347.1 781.4L359.6 759.8" stroke="#9f0000" stroke-width="6.8" stroke-linecap="round"/>
<circle cx="230.5" cy="632.6" r="4.6" fill="url(#gH)"/>
<circle cx="857.4" cy="632.6" r="4.7" fill="url(#gH)"/>
<path d="M341.1 687.2L356.6 703.0" stroke="#8a8a8a" stroke-width="8.8" stroke-linecap="round"/>
<path d="M341.8 686.6L357.3 702.4" stroke="#c3c3c3" stroke-width="6.6" stroke-linecap="round"/>
<path d="M342.0 686.3L357.5 702.1" stroke="#e6e6e6" stroke-width="3.8" stroke-linecap="round"/>
<path d="M696.1 556.1L732.2 567.6" stroke="#868686" stroke-width="8.8" stroke-linecap="round"/>
<path d="M696.4 555.3L732.5 566.7" stroke="#bdbdbd" stroke-width="6.6" stroke-linecap="round"/>
<path d="M696.5 554.9L732.6 566.4" stroke="#dfdfdf" stroke-width="3.8" stroke-linecap="round"/>
<path d="M683.5 547.2L656.9 512.7" stroke="#b70000" stroke-width="8.8" stroke-linecap="round"/>
<path d="M684.2 546.8L657.5 512.2" stroke="#ea0000" stroke-width="6.8" stroke-linecap="round"/>
<circle cx="688.4" cy="760.1" r="4.7" fill="url(#gH)"/>
<path d="M607.9 890.1L573.0 884.6" stroke="#959595" stroke-width="8.8" stroke-linecap="round"/>
<path d="M608.1 889.2L573.1 883.7" stroke="#d2d2d2" stroke-width="6.6" stroke-linecap="round"/>
<path d="M608.1 888.9L573.2 883.3" stroke="#f8f8f8" stroke-width="3.8" stroke-linecap="round"/>
<path d="M756.8 598.0L732.2 567.6" stroke="#888888" stroke-width="8.8" stroke-linecap="round"/>
<path d="M757.5 597.4L732.9 567.0" stroke="#c0c0c0" stroke-width="6.6" stroke-linecap="round"/>
<path d="M757.8 597.1L733.2 566.8" stroke="#e2e2e2" stroke-width="3.8" stroke-linecap="round"/>
<path d="M847.7 607.9L809.9 619.5" stroke="#959595" stroke-width="8.8" stroke-linecap="round"/>
<path d="M847.4 607.1L809.6 618.6" stroke="#d3d3d3" stroke-width="6.6" stroke-linecap="round"/>
<path d="M847.3 606.7L809.5 618.3" stroke="#f9f9f9" stroke-width="3.8" stroke-linecap="round"/>
<circle cx="277.8" cy="905.1" r="4.7" fill="url(#gH)"/>
<path d="M769.5 606.7L809.9 619.5" stroke="#b60000" stroke-width="8.8" stroke-linecap="round"/>
<path d="M769.8 606.0L810.1 618.7" stroke="#e90000" stroke-width="6.8" stroke-linecap="round"/>
<circle cx="626.9" cy="654.0" r="4.7" fill="url(#gH)"/>
<path d="M764.6 903.2L756.0 886.6" stroke="#717171" stroke-width="8.8" stroke-linecap="round"/>
<path d="M765.4 902.8L756.8 886.2" stroke="#9f9f9f" stroke-width="6.6" stroke-linecap="round"/>
<path d="M765.7 902.6L757.2 886.0" stroke="#bcbcbc" stroke-width="3.8" stroke-linecap="round"/>
<path d="M384.5 560.9L414.0 548.4" stroke="#606060" stroke-width="8.8" stroke-linecap="round"/>
<path d="M384.1 560.1L413.6 547.6" stroke="#878787" stroke-width="6.6" stroke-linecap="round"/>
<path d="M384.0 559.7L413.5 547.2" stroke="#a0a0a0" stroke-width="3.8" stroke-linecap="round"/>
<path d="M781.5 894.3L756.0 886.6" stroke="#909090" stroke-width="8.8" stroke-linecap="round"/>
<path d="M781.8 893.5L756.3 885.7" stroke="#cccccc" stroke-width="6.6" stroke-linecap="round"/>
<path d="M781.9 893.1L756.4 885.3" stroke="#f0f0f0" stroke-width="3.8" stroke-linecap="round"/>
<circle cx="573.0" cy="884.6" r="9.7" fill="url(#gC)"/>
<circle cx="719.2" cy="899.1" r="4.7" fill="url(#gH)"/>
<path d="M594.0 731.8L601.8 723.7" stroke="#6a6a6a" stroke-width="8.8" stroke-linecap="round"/>
<path d="M593.4 731.2L601.2 723.1" stroke="#969696" stroke-width="6.6" stroke-linecap="round"/>
<path d="M593.1 730.9L600.9 722.8" stroke="#b0b0b0" stroke-width="3.8" stroke-linecap="round"/>
<circle cx="619.3" cy="512.0" r="4.7" fill="url(#gH)"/>
<circle cx="395.1" cy="687.2" r="4.7" fill="url(#gH)"/>
<circle cx="207.8" cy="819.6" r="4.6" fill="url(#gH)"/>
<path d="M623.6 512.1L656.9 512.7" stroke="#888888" stroke-width="8.8" stroke-linecap="round"/>
<path d="M623.6 511.2L656.9 511.8" stroke="#c0c0c0" stroke-width="6.6" stroke-linecap="round"/>
<path d="M623.6 510.8L656.9 511.4" stroke="#e2e2e2" stroke-width="3.8" stroke-linecap="round"/>
<circle cx="732.2" cy="567.6" r="9.7" fill="url(#gC)"/>
<circle cx="656.9" cy="512.7" r="9.7" fill="url(#gC)"/>
<path d="M391.1 688.8L356.6 703.0" stroke="#848484" stroke-width="8.8" stroke-linecap="round"/>
<path d="M390.8 688.0L356.3 702.2" stroke="#bababa" stroke-width="6.6" stroke-linecap="round"/>
<path d="M390.7 687.6L356.1 701.8" stroke="#dcdcdc" stroke-width="3.8" stroke-linecap="round"/>
<path d="M756.0 812.5L754.8 830.5" stroke="#919191" stroke-width="8.8" stroke-linecap="round"/>
<path d="M756.9 812.6L755.7 830.6" stroke="#cdcdcd" stroke-width="6.6" stroke-linecap="round"/>
<path d="M757.3 812.6L756.1 830.6" stroke="#f2f2f2" stroke-width="3.8" stroke-linecap="round"/>
<path d="M723.1 897.7L756.0 886.6" stroke="#6e6e6e" stroke-width="8.8" stroke-linecap="round"/>
<path d="M722.8 896.9L755.8 885.7" stroke="#9b9b9b" stroke-width="6.6" stroke-linecap="round"/>
<path d="M722.7 896.5L755.6 885.4" stroke="#b7b7b7" stroke-width="3.8" stroke-linecap="round"/>
<circle cx="356.6" cy="703.0" r="9.7" fill="url(#gC)"/>
<circle cx="809.9" cy="619.5" r="9.7" fill="url(#gC)"/>
<path d="M280.4 906.1L301.5 914.0" stroke="#7c7c7c" stroke-width="8.8" stroke-linecap="round"/>
<path d="M280.7 905.2L301.8 913.2" stroke="#afafaf" stroke-width="6.6" stroke-linecap="round"/>
<path d="M280.9 904.9L302.0 912.8" stroke="#cfcfcf" stroke-width="3.8" stroke-linecap="round"/>
<path d="M357.0 711.9L358.9 759.4" stroke="#828282" stroke-width="8.8" stroke-linecap="round"/>
<path d="M357.9 711.8L359.8 759.4" stroke="#b8b8b8" stroke-width="6.6" stroke-linecap="round"/>
<path d="M358.3 711.8L360.2 759.3" stroke="#d9d9d9" stroke-width="3.8" stroke-linecap="round"/>
<path d="M687.2 762.0L677.1 778.6" stroke="#949494" stroke-width="8.8" stroke-linecap="round"/>
<path d="M688.0 762.5L677.9 779.1" stroke="#d1d1d1" stroke-width="6.6" stroke-linecap="round"/>
<path d="M688.3 762.7L678.2 779.3" stroke="#f7f7f7" stroke-width="3.8" stroke-linecap="round"/>
<circle cx="358.9" cy="759.4" r="9.7" fill="url(#gC)"/>
<circle cx="452.8" cy="560.7" r="4.7" fill="url(#gH)"/>
<circle cx="756.0" cy="886.6" r="9.7" fill="url(#gC)"/>
<path d="M810.1 628.3L811.1 675.6" stroke="#858585" stroke-width="8.8" stroke-linecap="round"/>
<path d="M811.0 628.3L812.0 675.6" stroke="#bcbcbc" stroke-width="6.6" stroke-linecap="round"/>
<path d="M811.4 628.3L812.4 675.6" stroke="#dedede" stroke-width="3.8" stroke-linecap="round"/>
<path d="M627.0 656.0L628.1 673.6" stroke="#909090" stroke-width="8.8" stroke-linecap="round"/>
<path d="M627.9 656.0L629.0 673.6" stroke="#cbcbcb" stroke-width="6.6" stroke-linecap="round"/>
<path d="M628.3 656.0L629.4 673.5" stroke="#f0f0f0" stroke-width="3.8" stroke-linecap="round"/>
<path d="M496.5 593.7L483.6 628.0" stroke="#969696" stroke-width="8.8" stroke-linecap="round"/>
<path d="M497.3 594.0L484.4 628.3" stroke="#d4d4d4" stroke-width="6.6" stroke-linecap="round"/>
<path d="M497.7 594.2L484.8 628.5" stroke="#fafafa" stroke-width="3.8" stroke-linecap="round"/>
<path d="M367.3 762.1L397.7 771.7" stroke="#8f8f8f" stroke-width="8.8" stroke-linecap="round"/>
<path d="M367.6 761.2L398.0 770.8" stroke="#cbcbcb" stroke-width="6.6" stroke-linecap="round"/>
<path d="M367.7 760.8L398.1 770.5" stroke="#efefef" stroke-width="3.8" stroke-linecap="round"/>
<circle cx="496.5" cy="593.7" r="9.6" fill="url(#gO)"/>
<circle cx="441.4" cy="804.7" r="9.6" fill="url(#gO)"/>
<path d="M448.7 559.4L414.0 548.4" stroke="#959595" stroke-width="8.8" stroke-linecap="round"/>
<path d="M449.0 558.5L414.3 547.5" stroke="#d3d3d3" stroke-width="6.6" stroke-linecap="round"/>
<path d="M449.1 558.2L414.4 547.2" stroke="#f9f9f9" stroke-width="3.8" stroke-linecap="round"/>
<path d="M572.7 880.3L571.8 865.0" stroke="#656565" stroke-width="8.8" stroke-linecap="round"/>
<path d="M573.6 880.3L572.7 864.9" stroke="#8e8e8e" stroke-width="6.6" stroke-linecap="round"/>
<path d="M574.0 880.3L573.1 864.9" stroke="#a8a8a8" stroke-width="3.8" stroke-linecap="round"/>
<path d="M755.8 877.8L754.8 830.5" stroke="#747474" stroke-width="8.8" stroke-linecap="round"/>
<path d="M756.7 877.8L755.7 830.5" stroke="#a4a4a4" stroke-width="6.6" stroke-linecap="round"/>
<path d="M757.1 877.8L756.1 830.5" stroke="#c2c2c2" stroke-width="3.8" stroke-linecap="round"/>
<circle cx="811.1" cy="675.6" r="9.7" fill="url(#gC)"/>
<circle cx="397.7" cy="771.7" r="4.7" fill="url(#gH)"/>
<circle cx="414.0" cy="548.4" r="9.7" fill="url(#gC)"/>
<path d="M734.7 563.6L743.5 549.1" stroke="#5b5b5b" stroke-width="8.8" stroke-linecap="round"/>
<path d="M735.4 564.0L744.3 549.5" stroke="#818181" stroke-width="6.6" stroke-linecap="round"/>
<path d="M735.8 564.2L744.6 549.7" stroke="#989898" stroke-width="3.8" stroke-linecap="round"/>
<path d="M413.6 539.5L411.7 492.0" stroke="#787878" stroke-width="8.8" stroke-linecap="round"/>
<path d="M414.5 539.5L412.6 492.0" stroke="#aaaaaa" stroke-width="6.6" stroke-linecap="round"/>
<path d="M414.9 539.5L413.0 491.9" stroke="#c8c8c8" stroke-width="3.8" stroke-linecap="round"/>
<path d="M351.2 701.0L332.9 694.1" stroke="#8c8c8c" stroke-width="8.8" stroke-linecap="round"/>
<path d="M351.5 700.1L333.2 693.3" stroke="#c5c5c5" stroke-width="6.6" stroke-linecap="round"/>
<path d="M351.7 699.7L333.4 692.9" stroke="#e9e9e9" stroke-width="3.8" stroke-linecap="round"/>
<circle cx="754.8" cy="830.5" r="9.7" fill="url(#gC)"/>
<circle cx="411.7" cy="492.0" r="9.7" fill="url(#gC)"/>
<circle cx="301.5" cy="914.0" r="9.7" fill="url(#gC)"/>
<path d="M803.1 678.3L774.3 688.1" stroke="#8d8d8d" stroke-width="8.8" stroke-linecap="round"/>
<path d="M802.9 677.4L774.1 687.2" stroke="#c8c8c8" stroke-width="6.6" stroke-linecap="round"/>
<path d="M802.7 677.1L773.9 686.8" stroke="#ececec" stroke-width="3.8" stroke-linecap="round"/>
<path d="M810.2 615.1L811.2 599.4" stroke="#626262" stroke-width="8.8" stroke-linecap="round"/>
<path d="M811.1 615.2L812.1 599.5" stroke="#8a8a8a" stroke-width="6.6" stroke-linecap="round"/>
<path d="M811.5 615.2L812.5 599.5" stroke="#a3a3a3" stroke-width="3.8" stroke-linecap="round"/>
<path d="M309.7 910.6L340.0 898.2" stroke="#737373" stroke-width="8.8" stroke-linecap="round"/>
<path d="M309.3 909.8L339.7 897.4" stroke="#a3a3a3" stroke-width="6.6" stroke-linecap="round"/>
<path d="M309.2 909.4L339.5 897.0" stroke="#c0c0c0" stroke-width="3.8" stroke-linecap="round"/>
<circle cx="601.8" cy="723.7" r="9.7" fill="url(#gC)"/>
<circle cx="677.1" cy="778.6" r="9.7" fill="url(#gC)"/>
<path d="M592.9 723.5L564.2 723.0" stroke="#8d8d8d" stroke-width="8.8" stroke-linecap="round"/>
<path d="M592.9 722.6L564.2 722.1" stroke="#c8c8c8" stroke-width="6.6" stroke-linecap="round"/>
<path d="M592.9 722.2L564.2 721.7" stroke="#ebebeb" stroke-width="3.8" stroke-linecap="round"/>
<path d="M605.9 715.8L628.1 673.6" stroke="#6c6c6c" stroke-width="8.8" stroke-linecap="round"/>
<path d="M606.7 716.3L628.9 674.0" stroke="#989898" stroke-width="6.6" stroke-linecap="round"/>
<path d="M607.1 716.4L629.2 674.2" stroke="#b3b3b3" stroke-width="3.8" stroke-linecap="round"/>
<circle cx="340.0" cy="898.2" r="4.7" fill="url(#gH)"/>
<circle cx="262.9" cy="608.6" r="4.6" fill="url(#gH)"/>
<circle cx="564.2" cy="723.0" r="4.7" fill="url(#gH)"/>
<path d="M655.5 514.2L647.7 522.3" stroke="#878787" stroke-width="8.8" stroke-linecap="round"/>
<path d="M654.8 513.6L647.0 521.7" stroke="#bfbfbf" stroke-width="6.6" stroke-linecap="round"/>
<path d="M654.5 513.3L646.7 521.4" stroke="#e1e1e1" stroke-width="3.8" stroke-linecap="round"/>
<circle cx="774.3" cy="688.1" r="4.7" fill="url(#gH)"/>
<circle cx="628.1" cy="673.6" r="9.7" fill="url(#gC)"/>
<path d="M817.3 677.5L839.6 684.2" stroke="#7c7c7c" stroke-width="8.8" stroke-linecap="round"/>
<path d="M817.6 676.6L839.9 683.4" stroke="#b0b0b0" stroke-width="6.6" stroke-linecap="round"/>
<path d="M817.7 676.2L840.0 683.0" stroke="#cfcfcf" stroke-width="3.8" stroke-linecap="round"/>
<path d="M353.4 761.7L323.9 774.3" stroke="#969696" stroke-width="8.8" stroke-linecap="round"/>
<path d="M353.0 760.9L323.5 773.4" stroke="#d4d4d4" stroke-width="6.6" stroke-linecap="round"/>
<path d="M352.9 760.5L323.4 773.1" stroke="#f9f9f9" stroke-width="3.8" stroke-linecap="round"/>
<path d="M813.5 680.1L820.8 694.4" stroke="#8e8e8e" stroke-width="8.8" stroke-linecap="round"/>
<path d="M814.3 679.7L821.6 694.0" stroke="#c9c9c9" stroke-width="6.6" stroke-linecap="round"/>
<path d="M814.6 679.5L822.0 693.8" stroke="#ededed" stroke-width="3.8" stroke-linecap="round"/>
<circle cx="571.8" cy="865.0" r="4.7" fill="url(#gH)"/>
<path d="M747.2 828.1L706.9 815.4" stroke="#cc0000" stroke-width="8.8" stroke-linecap="round"/>
<path d="M747.5 827.3L707.1 814.6" stroke="#ff0000" stroke-width="6.8" stroke-linecap="round"/>
<circle cx="332.9" cy="694.1" r="4.7" fill="url(#gH)"/>
<path d="M761.8 828.3L799.6 816.8" stroke="#666666" stroke-width="8.8" stroke-linecap="round"/>
<path d="M761.6 827.5L799.4 815.9" stroke="#909090" stroke-width="6.6" stroke-linecap="round"/>
<path d="M761.5 827.1L799.3 815.5" stroke="#aaaaaa" stroke-width="3.8" stroke-linecap="round"/>
<path d="M682.3 785.0L706.9 815.4" stroke="#969696" stroke-width="8.8" stroke-linecap="round"/>
<path d="M683.0 784.4L707.6 814.8" stroke="#d4d4d4" stroke-width="6.6" stroke-linecap="round"/>
<path d="M683.3 784.2L707.9 814.5" stroke="#fafafa" stroke-width="3.8" stroke-linecap="round"/>
<path d="M636.5 675.0L667.1 679.8" stroke="#868686" stroke-width="8.8" stroke-linecap="round"/>
<path d="M636.7 674.1L667.3 678.9" stroke="#bdbdbd" stroke-width="6.6" stroke-linecap="round"/>
<path d="M636.7 673.7L667.3 678.5" stroke="#dfdfdf" stroke-width="3.8" stroke-linecap="round"/>
<circle cx="743.5" cy="549.1" r="4.7" fill="url(#gH)"/>
<path d="M606.8 730.2L633.4 764.7" stroke="#cd0000" stroke-width="8.8" stroke-linecap="round"/>
<path d="M607.4 729.7L634.0 764.2" stroke="#ff0000" stroke-width="6.8" stroke-linecap="round"/>
<path d="M669.5 776.2L633.4 764.7" stroke="#959595" stroke-width="8.8" stroke-linecap="round"/>
<path d="M669.8 775.3L633.7 763.8" stroke="#d3d3d3" stroke-width="6.6" stroke-linecap="round"/>
<path d="M669.9 774.9L633.8 763.5" stroke="#f9f9f9" stroke-width="3.8" stroke-linecap="round"/>
<path d="M297.6 910.0L284.1 896.3" stroke="#7d7d7d" stroke-width="8.8" stroke-linecap="round"/>
<path d="M298.2 909.3L284.7 895.7" stroke="#b1b1b1" stroke-width="6.6" stroke-linecap="round"/>
<path d="M298.5 909.1L285.0 895.4" stroke="#d1d1d1" stroke-width="3.8" stroke-linecap="round"/>
<circle cx="175.4" cy="843.6" r="4.6" fill="url(#gH)"/>
<circle cx="802.3" cy="843.6" r="4.7" fill="url(#gH)"/>
<path d="M411.6 552.5L399.1 574.1" stroke="#ca0000" stroke-width="8.8" stroke-linecap="round"/>
<path d="M412.3 552.9L399.8 574.5" stroke="#ff0000" stroke-width="6.8" stroke-linecap="round"/>
<circle cx="667.1" cy="679.8" r="4.7" fill="url(#gH)"/>
<circle cx="811.2" cy="599.4" r="4.7" fill="url(#gH)"/>
<circle cx="839.6" cy="684.2" r="4.7" fill="url(#gH)"/>
<circle cx="212.7" cy="684.2" r="4.6" fill="url(#gH)"/>
<path d="M623.9 668.7L609.1 650.9" stroke="#7d7d7d" stroke-width="8.8" stroke-linecap="round"/>
<path d="M624.6 668.1L609.8 650.3" stroke="#b0b0b0" stroke-width="6.6" stroke-linecap="round"/>
<path d="M624.9 667.8L610.1 650.0" stroke="#d0d0d0" stroke-width="3.8" stroke-linecap="round"/>
<circle cx="706.9" cy="815.4" r="9.7" fill="url(#gC)"/>
<path d="M801.9 839.6L799.6 816.8" stroke="#6d6d6d" stroke-width="8.8" stroke-linecap="round"/>
<path d="M802.8 839.5L800.5 816.7" stroke="#9a9a9a" stroke-width="6.6" stroke-linecap="round"/>
<path d="M803.2 839.5L800.9 816.6" stroke="#b6b6b6" stroke-width="3.8" stroke-linecap="round"/>
<circle cx="820.8" cy="694.4" r="4.7" fill="url(#gH)"/>
<circle cx="313.6" cy="739.9" r="4.7" fill="url(#gH)"/>
<circle cx="633.4" cy="764.7" r="9.7" fill="url(#gC)"/>
<path d="M483.6 628.0L428.7 611.0" stroke="#cb0000" stroke-width="8.8" stroke-linecap="round"/>
<path d="M483.8 627.2L428.9 610.3" stroke="#ff0000" stroke-width="6.8" stroke-linecap="round"/>
<path d="M314.8 744.0L323.9 774.3" stroke="#8d8d8d" stroke-width="8.8" stroke-linecap="round"/>
<path d="M315.7 743.7L324.8 774.0" stroke="#c7c7c7" stroke-width="6.6" stroke-linecap="round"/>
<path d="M316.1 743.6L325.1 773.9" stroke="#ebebeb" stroke-width="3.8" stroke-linecap="round"/>
<path d="M473.1 688.8L444.2 698.5" stroke="#7e7e7e" stroke-width="8.8" stroke-linecap="round"/>
<path d="M472.9 688.0L443.9 697.6" stroke="#b2b2b2" stroke-width="6.6" stroke-linecap="round"/>
<path d="M472.7 687.6L443.8 697.3" stroke="#d2d2d2" stroke-width="3.8" stroke-linecap="round"/>
<path d="M481.9 677.1L483.6 628.0" stroke="#7b7b7b" stroke-width="8.8" stroke-linecap="round"/>
<path d="M482.8 677.1L484.5 628.0" stroke="#adadad" stroke-width="6.6" stroke-linecap="round"/>
<path d="M483.2 677.1L484.9 628.0" stroke="#cccccc" stroke-width="3.8" stroke-linecap="round"/>
<circle cx="675.2" cy="549.6" r="4.7" fill="url(#gH)"/>
<circle cx="483.6" cy="628.0" r="9.2" fill="url(#gS)"/>
<circle cx="481.6" cy="686.0" r="9.7" fill="url(#gN)"/>
<circle cx="444.2" cy="698.5" r="4.7" fill="url(#gH)"/>
<circle cx="290.2" cy="790.4" r="4.7" fill="url(#gH)"/>
<path d="M294.1 788.5L323.9 774.3" stroke="#757575" stroke-width="8.8" stroke-linecap="round"/>
<path d="M293.7 787.7L323.5 773.4" stroke="#a6a6a6" stroke-width="6.6" stroke-linecap="round"/>
<path d="M293.5 787.4L323.3 773.1" stroke="#c4c4c4" stroke-width="3.8" stroke-linecap="round"/>
<circle cx="799.6" cy="816.8" r="9.7" fill="url(#gC)"/>
<circle cx="323.9" cy="774.3" r="9.7" fill="url(#gC)"/>
<circle cx="284.1" cy="896.3" r="4.7" fill="url(#gH)"/>
<path d="M672.2 546.6L647.7 522.3" stroke="#929292" stroke-width="8.8" stroke-linecap="round"/>
<path d="M672.8 546.0L648.3 521.7" stroke="#cecece" stroke-width="6.6" stroke-linecap="round"/>
<path d="M673.1 545.7L648.6 521.4" stroke="#f3f3f3" stroke-width="3.8" stroke-linecap="round"/>
<path d="M798.6 808.0L795.1 778.0" stroke="#777777" stroke-width="8.8" stroke-linecap="round"/>
<path d="M799.5 807.9L796.0 777.9" stroke="#a8a8a8" stroke-width="6.6" stroke-linecap="round"/>
<path d="M799.9 807.9L796.4 777.8" stroke="#c7c7c7" stroke-width="3.8" stroke-linecap="round"/>
<circle cx="609.6" cy="539.0" r="4.7" fill="url(#gH)"/>
<path d="M613.6 537.3L647.7 522.3" stroke="#7a7a7a" stroke-width="8.8" stroke-linecap="round"/>
<path d="M613.2 536.4L647.3 521.5" stroke="#acacac" stroke-width="6.6" stroke-linecap="round"/>
<path d="M613.0 536.1L647.1 521.1" stroke="#cbcbcb" stroke-width="3.8" stroke-linecap="round"/>
<circle cx="647.7" cy="522.3" r="9.7" fill="url(#gC)"/>
<path d="M487.0 691.5L503.0 707.6" stroke="#939393" stroke-width="8.8" stroke-linecap="round"/>
<path d="M487.6 690.8L503.6 707.0" stroke="#d0d0d0" stroke-width="6.6" stroke-linecap="round"/>
<path d="M487.9 690.5L503.9 706.7" stroke="#f5f5f5" stroke-width="3.8" stroke-linecap="round"/>
<circle cx="795.1" cy="778.0" r="4.7" fill="url(#gH)"/>
<circle cx="609.1" cy="650.9" r="4.7" fill="url(#gH)"/>
<path d="M648.4 513.8L651.0 485.7" stroke="#696969" stroke-width="8.8" stroke-linecap="round"/>
<path d="M649.3 513.9L651.9 485.8" stroke="#959595" stroke-width="6.6" stroke-linecap="round"/>
<path d="M649.7 513.9L652.3 485.8" stroke="#afafaf" stroke-width="3.8" stroke-linecap="round"/>
<path d="M328.0 780.6L342.5 803.0" stroke="#959595" stroke-width="8.8" stroke-linecap="round"/>
<path d="M328.8 780.1L343.3 802.5" stroke="#d3d3d3" stroke-width="6.6" stroke-linecap="round"/>
<path d="M329.1 779.9L343.6 802.3" stroke="#f9f9f9" stroke-width="3.8" stroke-linecap="round"/>
<circle cx="399.1" cy="574.1" r="9.7" fill="url(#gC)"/>
<path d="M489.9 627.6L521.8 625.7" stroke="#6d6d6d" stroke-width="8.8" stroke-linecap="round"/>
<path d="M489.8 626.7L521.7 624.8" stroke="#9a9a9a" stroke-width="6.6" stroke-linecap="round"/>
<path d="M489.8 626.3L521.7 624.4" stroke="#b6b6b6" stroke-width="3.8" stroke-linecap="round"/>
<path d="M704.4 819.4L692.5 838.4" stroke="#949494" stroke-width="8.8" stroke-linecap="round"/>
<path d="M705.1 819.8L693.3 838.8" stroke="#d1d1d1" stroke-width="6.6" stroke-linecap="round"/>
<path d="M705.5 820.0L693.6 839.0" stroke="#f7f7f7" stroke-width="3.8" stroke-linecap="round"/>
<circle cx="503.0" cy="707.6" r="4.7" fill="url(#gH)"/>
<circle cx="540.8" cy="907.7" r="4.6" fill="url(#gH)"/>
<circle cx="651.0" cy="485.7" r="4.7" fill="url(#gH)"/>
<circle cx="342.5" cy="803.0" r="4.7" fill="url(#gH)"/>
<path d="M404.3 580.5L428.7 611.0" stroke="#969696" stroke-width="8.8" stroke-linecap="round"/>
<path d="M405.0 579.9L429.4 610.5" stroke="#d4d4d4" stroke-width="6.6" stroke-linecap="round"/>
<path d="M405.3 579.7L429.7 610.2" stroke="#fafafa" stroke-width="3.8" stroke-linecap="round"/>
<path d="M391.6 571.8L355.6 560.6" stroke="#959595" stroke-width="8.8" stroke-linecap="round"/>
<path d="M391.8 570.9L355.8 559.8" stroke="#d3d3d3" stroke-width="6.6" stroke-linecap="round"/>
<path d="M391.9 570.5L356.0 559.4" stroke="#f9f9f9" stroke-width="3.8" stroke-linecap="round"/>
<circle cx="521.8" cy="625.7" r="9.6" fill="url(#gO)"/>
<circle cx="331.6" cy="530.5" r="4.7" fill="url(#gH)"/>
<circle cx="428.7" cy="611.0" r="9.7" fill="url(#gC)"/>
<path d="M334.3 533.9L355.6 560.6" stroke="#949494" stroke-width="8.8" stroke-linecap="round"/>
<path d="M335.0 533.3L356.3 560.1" stroke="#d2d2d2" stroke-width="6.6" stroke-linecap="round"/>
<path d="M335.3 533.1L356.6 559.8" stroke="#f7f7f7" stroke-width="3.8" stroke-linecap="round"/>
<circle cx="355.6" cy="560.6" r="9.7" fill="url(#gC)"/>
<circle cx="692.5" cy="838.4" r="9.7" fill="url(#gC)"/>
<path d="M265.8 488.5H892.6L782.4 910.5H155.5Z" fill="none" stroke="#fff" stroke-width="1" stroke-opacity="0.85"/>
<path d="M62.5 494.5H30 M62.5 494.5L70.5 462.5" stroke="#c8c8c8" stroke-width="1" fill="none"/><path d="M24 494.5L36 491.2V497.800Z M71.6 458L71.9 470.5L65.5 468.9Z" fill="#f0f0f0"/>
<rect x="997.5" y="846.5" width="43" height="113" rx="2" fill="#000" stroke="#808080" stroke-width="2"/>
<circle cx="1007" cy="856.4" r="9" fill="url(#gC)"/>
<circle cx="1007" cy="879.5" r="9" fill="url(#gHL)"/>
<circle cx="1007" cy="902.6" r="9" fill="url(#gN)"/>
<circle cx="1007" cy="925.7" r="9" fill="url(#gO)"/>
<circle cx="1007" cy="948.8" r="9" fill="url(#gS)"/>
</svg>
<span class="t" style="left:1017.00px;top:849.00px;font-size:12px;line-height:16px;color:#fff;letter-spacing:-0.283px;">C+0</span>
<span class="t" style="left:1017.00px;top:872.10px;font-size:12px;line-height:16px;color:#fff;letter-spacing:-0.283px;">H+0</span>
<span class="t" style="left:1017.00px;top:895.20px;font-size:12px;line-height:16px;color:#fff;letter-spacing:-0.283px;">N+0</span>
<span class="t" style="left:1017.00px;top:918.30px;font-size:12px;line-height:16px;color:#fff;letter-spacing:-0.505px;">O+0</span>
<span class="t" style="left:1017.00px;top:941.40px;font-size:12px;line-height:16px;color:#fff;letter-spacing:-0.062px;">S+0</span>
<span class="t" style="left:9.80px;top:484.70px;font-size:12px;line-height:16px;color:#e0e0e0;">a</span>
<span class="t" style="left:74.00px;top:440.50px;font-size:12px;line-height:16px;color:#e0e0e0;">c</span>
<span class="t" style="left:6.00px;top:993.50px;font-size:12px;line-height:16px;color:#000;letter-spacing:-0.370px;">Auto Save completed.</span>
<div class="b" style="left:1542px;top:993px;width:85px;height:18px;border:1px solid #a0a0a0;border-right-color:#a0a0a0;box-sizing:border-box;"></div>
<span class="t" style="left:1545.00px;top:993.50px;font-size:12px;line-height:16px;color:#000;letter-spacing:-0.408px;">R-factor=15.0%</span>
<div class="b" style="left:1629px;top:993px;width:60px;height:18px;border:1px solid #a0a0a0;border-right-color:#a0a0a0;box-sizing:border-box;"></div>
<span class="t" style="left:1632.00px;top:993.50px;font-size:12px;line-height:16px;color:#000;letter-spacing:-0.628px;">44 parms</span>
<div class="b" style="left:1691px;top:993px;width:61px;height:18px;border:1px solid #a0a0a0;border-right-color:#a0a0a0;box-sizing:border-box;"></div>
<span class="t" style="left:1694.00px;top:993.50px;font-size:12px;line-height:16px;color:#000;letter-spacing:-0.559px;">194 atoms</span>
<div class="b" style="left:1754px;top:993px;width:61px;height:18px;border:1px solid #a0a0a0;border-right-color:#a0a0a0;box-sizing:border-box;"></div>
<span class="t" style="left:1757.00px;top:993.50px;font-size:12px;line-height:16px;color:#000;letter-spacing:-0.339px;">166 bonds</span>
<div class="b" style="left:1817px;top:993px;width:76px;height:18px;border:1px solid #a0a0a0;border-right-color:#a0a0a0;box-sizing:border-box;"></div>
<span class="t" style="left:1820.00px;top:993.50px;font-size:12px;line-height:16px;color:#000;letter-spacing:-0.156px;">0 polyhedra</span>
<svg class="b" style="left:1895px;top:996px" width="14" height="14"><path d="M2 14L14 2M6 14L14 6M10 14L14 10" stroke="#a0a0a0" stroke-width="1"/></svg>
</div></body></html>
